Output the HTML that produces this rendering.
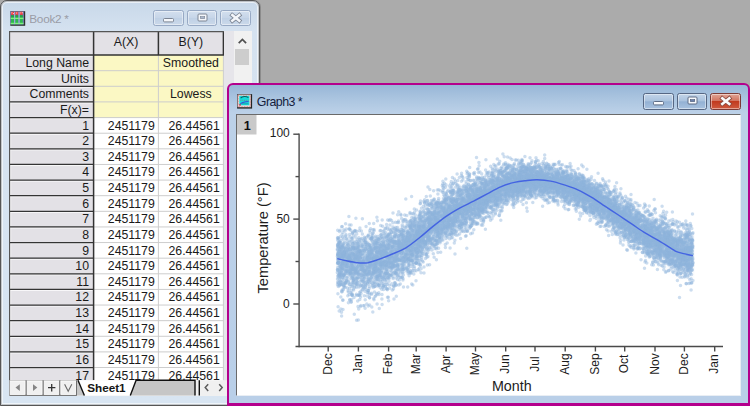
<!DOCTYPE html>
<html><head><meta charset="utf-8"><title>Book2 / Graph3</title>
<style>
html,body{margin:0;padding:0}
body{width:750px;height:406px;overflow:hidden;background:#ababab;font-family:"Liberation Sans",sans-serif;position:relative}
.win{position:absolute;box-sizing:border-box}
#book{left:0;top:0;width:260.4px;height:406px;border:1px solid #565656;border-radius:7px 7px 0 0;
 background:linear-gradient(#c8d8e9 0,#d5e2f0 30px,#d8e5f2 100%);box-shadow:inset 0 0 0 1px rgba(110,110,110,.35),inset 0 0 0 2px rgba(255,255,255,.6),1px 0 0 #8c8c8c}
#book .title{position:absolute;left:28.3px;top:10.9px;font-size:11.8px;letter-spacing:-.3px;color:#9a9ca6;white-space:nowrap}
.cap{position:absolute;box-sizing:border-box;height:16px;border:1px solid #97a9c4;border-radius:2.5px;
 background:linear-gradient(#d3dfee,#c6d5e8 50%,#bfd0e5 51%,#cbd9ea);box-shadow:inset 0 0 0 1px rgba(255,255,255,.45)}
#sheet{position:absolute;left:8px;top:30px;width:243px;height:365px;background:#f0f0f0;overflow:hidden;box-sizing:border-box}
#grid{position:absolute;left:-9px;top:-31px}
#grid div{position:absolute;box-sizing:border-box;font-size:12.3px;line-height:17.2px;white-space:nowrap;overflow:hidden;color:#1a1a1a}
.rh{left:9px;width:84.6px;background:#e3e1e6;text-align:right;padding-right:4.6px}
.ch{top:31px;height:24.2px;background:#e3e1e6;text-align:center;line-height:23.4px !important}
.yc{background:#fbf8c4;text-align:center}
.dc{background:#fff;text-align:right;padding-right:3.6px}
.a{left:93.6px;width:64.8px} .b{left:158.4px;width:65px}
#gwin{left:227px;top:83px;width:523.4px;height:323.4px;border:2px solid #b4008c;border-right-width:2.4px;border-bottom-width:3px;border-radius:6px 6px 0 0;
 background:linear-gradient(#98b6d7 0,#abc5e0 14px,#bcd1e8 28px,#b9cfe8 100%)}
#gwin .cap{height:16.4px;border-color:#566783;background:linear-gradient(#c2d4e8,#aac2de 46%,#93b1d4 52%,#a9c2df)}
#gwin .title{position:absolute;left:27.8px;top:10.2px;font-size:12.4px;letter-spacing:-.55px;color:#14213d;white-space:nowrap}
#page{position:absolute;left:235.5px;top:113.5px;width:505.5px;height:282.5px;background:#fff;border-left:1.5px solid #6a6a6a;border-top:1.5px solid #6a6a6a;border-right:1px solid #e9eef4;border-bottom:1px solid #e9eef4;box-sizing:border-box}
svg text{font-family:"Liberation Sans",sans-serif}
</style></head><body>

<div class="win" id="book">
 <svg style="position:absolute;left:8.9px;top:9.9px" width="16" height="16" viewBox="0 0 16 16">
  <rect x="0.3" y="0.2" width="14.9" height="14.6" fill="#2e3230"/>
  <rect x="0.3" y="0.5" width="13.5" height="13" fill="#7f86c6"/>
  <g fill="#f03434"><rect x="1" y="0.8" width="3" height="3"/><rect x="5.3" y="0.8" width="3" height="3"/><rect x="9.8" y="0.8" width="3" height="3"/></g>
  <g fill="#fff" fill-opacity=".75"><rect x="1.4" y="1.2" width="1" height="1.3"/><rect x="3" y="2" width=".9" height="1"/><rect x="6.4" y="1.2" width=".8" height="1.6"/><rect x="10.2" y="1.4" width="1" height="1"/><rect x="11.8" y="1" width=".9" height="1.4"/></g>
  <g fill="#2fb650"><rect x="1" y="4.3" width="3" height="9"/><rect x="5.3" y="4.3" width="3" height="9"/><rect x="9.8" y="4.3" width="3" height="9"/></g>
  <g fill="#26963f"><rect x="1" y="4.3" width="3" height="1.4"/><rect x="5.3" y="4.3" width="3" height="1.4"/><rect x="9.8" y="4.3" width="3" height="1.4"/></g>
  <g fill="#7cf47c"><rect x="0.6" y="6.8" width="12.9" height="1.2"/><rect x="0.6" y="11.8" width="12.9" height="1.3"/></g>
  <g fill="#aeb6e4" fill-opacity=".8"><rect x="4.2" y="0.8" width=".9" height="12.4"/><rect x="8.6" y="0.8" width=".9" height="12.4"/></g>
 </svg>
 <div class="title">Book2 *</div>
 <div class="cap" style="left:152px;top:9.4px;width:31px"><svg width="29" height="14" viewBox="0 0 29 14"><rect x="9.5" y="7.5" width="10" height="3.4" rx="1" fill="#f4f6fa" stroke="#7c8594" stroke-width="1"/></svg></div>
 <div class="cap" style="left:185.5px;top:9.4px;width:30.5px"><svg width="29" height="14" viewBox="0 0 29 14"><rect x="10" y="3" width="9" height="7" rx="1" fill="#f4f6fa" stroke="#7c8594" stroke-width="1"/><rect x="12.3" y="5.6" width="4.4" height="2" fill="#a9b6cc" stroke="#7c8594" stroke-width=".6"/></svg></div>
 <div class="cap" style="left:218.5px;top:9.4px;width:31.5px"><svg width="30" height="14" viewBox="0 0 30 14"><path d="M11.3 4.1L18.3 9.7M18.3 4.1L11.3 9.7" stroke="#7c8594" stroke-width="4.2" stroke-linecap="square"/><path d="M11.3 4.1L18.3 9.7M18.3 4.1L11.3 9.7" stroke="#f4f6fa" stroke-width="2.5" stroke-linecap="square"/></svg></div>

 <div id="sheet">
  <div id="grid">
   <div class="rh" style="top:31px;height:24.2px"></div>
   <div class="ch a">A(X)</div><div class="ch b">B(Y)</div>
<div class="rh" style="top:55.10px;height:15.60px">Long Name</div>
<div class="yc a" style="top:55.10px;height:15.60px"></div>
<div class="yc b" style="top:55.10px;height:15.60px">Smoothed</div>
<div class="rh" style="top:70.70px;height:15.60px">Units</div>
<div class="yc a" style="top:70.70px;height:15.60px"></div>
<div class="yc b" style="top:70.70px;height:15.60px"></div>
<div class="rh" style="top:86.30px;height:15.60px">Comments</div>
<div class="yc a" style="top:86.30px;height:15.60px"></div>
<div class="yc b" style="top:86.30px;height:15.60px">Lowess</div>
<div class="rh" style="top:101.90px;height:15.70px">F(x)=</div>
<div class="yc a" style="top:101.90px;height:15.70px"></div>
<div class="yc b" style="top:101.90px;height:15.70px"></div>
<div class="rh" style="top:117.60px;height:15.62px">1</div>
<div class="dc a" style="top:117.60px;height:15.62px">2451179</div>
<div class="dc b" style="top:117.60px;height:15.62px">26.44561</div>
<div class="rh" style="top:133.22px;height:15.62px">2</div>
<div class="dc a" style="top:133.22px;height:15.62px">2451179</div>
<div class="dc b" style="top:133.22px;height:15.62px">26.44561</div>
<div class="rh" style="top:148.84px;height:15.62px">3</div>
<div class="dc a" style="top:148.84px;height:15.62px">2451179</div>
<div class="dc b" style="top:148.84px;height:15.62px">26.44561</div>
<div class="rh" style="top:164.46px;height:15.62px">4</div>
<div class="dc a" style="top:164.46px;height:15.62px">2451179</div>
<div class="dc b" style="top:164.46px;height:15.62px">26.44561</div>
<div class="rh" style="top:180.08px;height:15.62px">5</div>
<div class="dc a" style="top:180.08px;height:15.62px">2451179</div>
<div class="dc b" style="top:180.08px;height:15.62px">26.44561</div>
<div class="rh" style="top:195.70px;height:15.62px">6</div>
<div class="dc a" style="top:195.70px;height:15.62px">2451179</div>
<div class="dc b" style="top:195.70px;height:15.62px">26.44561</div>
<div class="rh" style="top:211.32px;height:15.62px">7</div>
<div class="dc a" style="top:211.32px;height:15.62px">2451179</div>
<div class="dc b" style="top:211.32px;height:15.62px">26.44561</div>
<div class="rh" style="top:226.94px;height:15.62px">8</div>
<div class="dc a" style="top:226.94px;height:15.62px">2451179</div>
<div class="dc b" style="top:226.94px;height:15.62px">26.44561</div>
<div class="rh" style="top:242.56px;height:15.62px">9</div>
<div class="dc a" style="top:242.56px;height:15.62px">2451179</div>
<div class="dc b" style="top:242.56px;height:15.62px">26.44561</div>
<div class="rh" style="top:258.18px;height:15.62px">10</div>
<div class="dc a" style="top:258.18px;height:15.62px">2451179</div>
<div class="dc b" style="top:258.18px;height:15.62px">26.44561</div>
<div class="rh" style="top:273.80px;height:15.62px">11</div>
<div class="dc a" style="top:273.80px;height:15.62px">2451179</div>
<div class="dc b" style="top:273.80px;height:15.62px">26.44561</div>
<div class="rh" style="top:289.42px;height:15.62px">12</div>
<div class="dc a" style="top:289.42px;height:15.62px">2451179</div>
<div class="dc b" style="top:289.42px;height:15.62px">26.44561</div>
<div class="rh" style="top:305.04px;height:15.62px">13</div>
<div class="dc a" style="top:305.04px;height:15.62px">2451179</div>
<div class="dc b" style="top:305.04px;height:15.62px">26.44561</div>
<div class="rh" style="top:320.66px;height:15.62px">14</div>
<div class="dc a" style="top:320.66px;height:15.62px">2451179</div>
<div class="dc b" style="top:320.66px;height:15.62px">26.44561</div>
<div class="rh" style="top:336.28px;height:15.62px">15</div>
<div class="dc a" style="top:336.28px;height:15.62px">2451179</div>
<div class="dc b" style="top:336.28px;height:15.62px">26.44561</div>
<div class="rh" style="top:351.90px;height:15.62px">16</div>
<div class="dc a" style="top:351.90px;height:15.62px">2451179</div>
<div class="dc b" style="top:351.90px;height:15.62px">26.44561</div>
<div class="rh" style="top:367.52px;height:15.62px">17</div>
<div class="dc a" style="top:367.52px;height:15.62px">2451179</div>
<div class="dc b" style="top:367.52px;height:15.62px">26.44561</div>
  </div>
  <svg style="position:absolute;left:-9px;top:-31px" width="261" height="406" viewBox="0 0 261 406">
  <path d="M94.2 70.70H223.6M94.2 86.30H223.6M94.2 101.90H223.6M94.2 117.60H223.6M94.2 133.22H223.6M94.2 148.84H223.6M94.2 164.46H223.6M94.2 180.08H223.6M94.2 195.70H223.6M94.2 211.32H223.6M94.2 226.94H223.6M94.2 242.56H223.6M94.2 258.18H223.6M94.2 273.80H223.6M94.2 289.42H223.6M94.2 305.04H223.6M94.2 320.66H223.6M94.2 336.28H223.6M94.2 351.90H223.6M94.2 367.52H223.6M158.4 55V380.4M223.4 55V380.4" stroke="#cdcdcd" stroke-width="1" fill="none"/>
  <path d="M10.2 56.20H92.8M10.2 71.80H92.8M10.2 87.40H92.8M10.2 103.00H92.8M10.2 118.70H92.8M10.2 134.32H92.8M10.2 149.94H92.8M10.2 165.56H92.8M10.2 181.18H92.8M10.2 196.80H92.8M10.2 212.42H92.8M10.2 228.04H92.8M10.2 243.66H92.8M10.2 259.28H92.8M10.2 274.90H92.8M10.2 290.52H92.8M10.2 306.14H92.8M10.2 321.76H92.8M10.2 337.38H92.8M10.2 353.00H92.8M10.2 368.62H92.8M10.7 56V380.4" stroke="#fff" stroke-opacity=".75" stroke-width="1" fill="none"/>
  <path d="M9 70.70H93.6M9 86.30H93.6M9 101.90H93.6M9 117.60H93.6M9 133.22H93.6M9 148.84H93.6M9 164.46H93.6M9 180.08H93.6M9 195.70H93.6M9 211.32H93.6M9 226.94H93.6M9 242.56H93.6M9 258.18H93.6M9 273.80H93.6M9 289.42H93.6M9 305.04H93.6M9 320.66H93.6M9 336.28H93.6M9 351.90H93.6M9 367.52H93.6" stroke="#343434" stroke-width="1.25" fill="none"/>
  <path d="M9 55.1H223.9M93.6 31V380.4M158.4 31V55.6M223.4 31V55.6" stroke="#333" stroke-width="1.5" fill="none"/>
  <path d="M9.4 31V380.4M8.6 31.6H252" stroke="#555" stroke-width="1.5" fill="none"/>
 </svg>
  <!-- right strip + scrollbar -->
  <div style="position:absolute;left:215px;top:0;width:11px;height:350px;background:#e6e5ea"></div>
  <div style="position:absolute;left:225.3px;top:0;width:18px;height:365px;background:#f1f1f1"></div>
  <div style="position:absolute;left:226px;top:18px;width:14.3px;height:16px;background:#cdcdcd"></div>
  <svg style="position:absolute;left:226.3px;top:4.6px" width="15" height="10" viewBox="0 0 15 10"><path d="M3.7 7.2L7.4 3.4L11.1 7.2" fill="none" stroke="#505050" stroke-width="1.7"/></svg>
  <!-- bottom tab bar -->
 </div>
 <svg style="position:absolute;left:-1px;top:-1px" width="261" height="406" viewBox="0 0 261 406">
  <rect x="9.5" y="380.3" width="218" height="15.3" fill="#f0f0f0"/>
  <path d="M76.5 380.3H78L84.4 395.6H76.5Z" fill="#c6c6c6"/>
  <path d="M78 380.3L84.4 395.6H130.3L136.1 380.3Z" fill="#fff"/>
  <path d="M136.1 380.3H195V395.6H130.3Z" fill="#c6c6c6"/>
  <path d="M78 380.3L84.4 395.6M130.3 395.6L136.1 380.3H195V395.6M199.3 380.3V395.6" stroke="#111" stroke-width="1.4" fill="none"/>
  <g>
   <rect x="9.3" y="380.3" width="67.6" height="15.5" fill="#5c5c5c"/>
   <g fill="#f0f0f0" stroke="#fff" stroke-width=".9"><rect x="10.2" y="380.9" width="14.9" height="13.5"/><rect x="27.1" y="380.9" width="15" height="13.5"/><rect x="44.1" y="380.9" width="14.7" height="13.5"/><rect x="60.8" y="380.9" width="14.8" height="13.5"/></g>
   <path d="M15.5 387.6L19.8 384.2V391Z" fill="#858585"/>
   <path d="M37.3 387.6L33 384.2V391Z" fill="#858585"/>
   <path d="M48 387.7H55.4M51.7 384V391.4" stroke="#333" stroke-width="1.3"/>
   <path d="M64.6 384.3L68.2 391.2L71.8 384.3" stroke="#6a6a6a" stroke-width="1.1" fill="none"/>
  </g>
  <text x="87.2" y="391.6" font-size="11.7" font-weight="bold" fill="#161616" textLength="38.4" lengthAdjust="spacingAndGlyphs">Sheet1</text>
  <path d="M208.2 384.2L205.2 387.6L208.2 391M219.2 384.2L222.2 387.6L219.2 391" stroke="#5c5c5c" stroke-width="1.5" fill="none"/>
 </svg>
</div>

<div class="win" id="gwin">
 <svg style="position:absolute;left:8px;top:9.2px" width="16" height="16" viewBox="0 0 16 16">
  <rect x="0.1" y="0.1" width="15" height="14.5" fill="#242424"/>
  <rect x="0.6" y="0.6" width="13.2" height="12.6" fill="#e9e2e2"/>
  <rect x="1.2" y="1.2" width="12" height="11.4" fill="none" stroke="#e85a5a" stroke-width=".7" stroke-dasharray=".8 .8"/>
  <rect x="2.3" y="1.8" width="10.1" height="9.5" fill="#14dcdc"/>
  <path d="M3.6 4.2C5.5 2.2 9 2 11.4 3.6" stroke="#155e60" stroke-width="1.1" fill="none"/>
  <path d="M3.4 6.3H11.6" stroke="#6f8f90" stroke-width="1" stroke-dasharray="1 .8"/>
  <path d="M3.4 9.9C5.5 8 8.5 7.6 11.6 7.5" stroke="#3a4ad4" stroke-width="1.2" fill="none"/>
  <path d="M5 9.8H11.5" stroke="#1aa0a8" stroke-width="1" />
  <rect x="2.2" y="10.2" width="1.6" height="1.4" fill="#e0203a"/>
 </svg>
 <div class="title">Graph3 *</div>
 <div class="cap" style="left:414px;top:8.2px;width:31px"><svg width="29" height="14" viewBox="0 0 29 14"><rect x="9.5" y="7.5" width="10" height="3.4" rx="1" fill="#f8fafd" stroke="#5f6d86" stroke-width="1"/></svg></div>
 <div class="cap" style="left:447.5px;top:8.2px;width:30.5px"><svg width="29" height="14" viewBox="0 0 29 14"><rect x="10" y="3" width="9" height="7" rx="1" fill="#f8fafd" stroke="#5f6d86" stroke-width="1"/><rect x="12.3" y="5.6" width="4.4" height="2" fill="#6d83ad" stroke="#4a5875" stroke-width=".6"/></svg></div>
 <div class="cap" style="left:480.5px;top:8.2px;width:31.5px;border-color:#7c3a35;background:linear-gradient(#e0a496,#d27561 45%,#c13a1f 50%,#cf5a3f)"><svg width="30" height="14" viewBox="0 0 30 14"><path d="M11.3 4.3L18.3 9.9M18.3 4.3L11.3 9.9" stroke="#8a4a40" stroke-width="4.2" stroke-linecap="square"/><path d="M11.3 4.3L18.3 9.9M18.3 4.3L11.3 9.9" stroke="#fbfbfb" stroke-width="2.6" stroke-linecap="square"/></svg></div>
</div>

<div id="page"></div>
<svg style="position:absolute;left:0;top:0" width="750" height="406" viewBox="0 0 750 406">
 <rect x="237" y="115" width="19.5" height="19.5" fill="#c9c9c9"/>
 <text x="247.2" y="130.4" font-size="12.6" font-weight="bold" text-anchor="middle" fill="#111">1</text>
 <defs><filter id="bl" x="-10%" y="-30%" width="120%" height="160%"><feGaussianBlur stdDeviation="4 5"/></filter><clipPath id="cp"><rect x="336" y="130" width="358.5" height="215"/></clipPath></defs>
 <g clip-path="url(#cp)"><path d="M337.3 236.3 L343.2 237.7 L349.2 238.9 L355.1 239.9 L361.0 240.1 L366.9 240.1 L372.9 238.8 L378.8 237.2 L384.7 235.0 L390.6 232.8 L396.6 230.4 L402.5 228.0 L408.4 225.0 L414.3 221.1 L420.3 217.1 L426.2 212.7 L432.1 208.2 L438.1 204.0 L444.0 199.9 L449.9 196.2 L455.8 193.0 L461.8 189.9 L467.7 187.3 L473.6 184.7 L479.5 181.8 L485.5 179.0 L491.4 176.4 L497.3 173.8 L503.2 171.8 L509.2 170.4 L515.1 169.1 L521.0 168.7 L527.0 168.4 L532.9 168.5 L538.8 168.5 L544.7 169.1 L550.7 169.6 L556.6 171.3 L562.5 173.0 L568.4 175.0 L574.4 176.9 L580.3 179.2 L586.2 182.1 L592.1 185.2 L598.1 188.8 L604.0 192.4 L609.9 195.9 L615.9 199.4 L621.8 203.0 L627.7 206.6 L633.6 210.2 L639.6 213.7 L645.5 217.5 L651.4 220.5 L657.3 223.6 L663.3 227.0 L669.2 230.6 L675.1 233.8 L681.0 235.5 L687.0 236.6 L692.9 237.6 L692.9 274.0 L687.0 272.1 L681.0 270.2 L675.1 267.5 L669.2 263.9 L663.3 259.9 L657.3 256.0 L651.4 252.5 L645.5 248.9 L639.6 244.7 L633.6 240.4 L627.7 236.0 L621.8 231.6 L615.9 227.2 L609.9 222.9 L604.0 218.6 L598.1 214.3 L592.1 210.1 L586.2 206.6 L580.3 203.1 L574.4 200.2 L568.4 197.9 L562.5 195.9 L556.6 194.2 L550.7 192.6 L544.7 192.0 L538.8 191.4 L532.9 191.8 L527.0 192.7 L521.0 194.0 L515.1 195.5 L509.2 197.8 L503.2 200.2 L497.3 203.3 L491.4 206.9 L485.5 210.5 L479.5 214.1 L473.6 217.7 L467.7 220.9 L461.8 224.2 L455.8 228.0 L449.9 231.9 L444.0 236.2 L438.1 241.0 L432.1 246.1 L426.2 251.5 L420.3 257.0 L414.3 262.0 L408.4 266.8 L402.5 270.7 L396.6 273.8 L390.6 276.5 L384.7 279.1 L378.8 281.6 L372.9 283.6 L366.9 285.3 L361.0 285.3 L355.1 284.8 L349.2 283.7 L343.2 282.4 L337.3 280.9Z" fill="#a3c2e2" fill-opacity=".35" filter="url(#bl)"/></g>
 <g fill="none" stroke="#8fb4db" stroke-opacity=".45" stroke-width="3.5" stroke-linecap="round"><path d="M452.5 223.2h0M363.1 284.5h0M527.9 178.4h0M517.7 184.4h0M350.6 256.4h0M369.6 265.0h0M488.3 196.0h0M416.7 233.2h0M560.4 194.4h0M478.4 193.6h0M684.5 277.0h0M440.3 228.2h0M388.6 266.8h0M627.5 227.5h0M401.6 231.7h0M469.7 194.4h0M532.1 183.0h0M410.5 246.5h0M579.3 183.7h0M545.5 183.8h0M498.5 182.1h0M585.9 209.4h0M424.1 218.1h0M648.5 228.3h0M596.7 194.5h0M379.3 308.4h0M486.0 194.8h0M511.2 177.7h0M351.2 249.3h0M541.1 167.6h0M648.6 227.7h0M548.7 193.0h0M543.5 164.8h0M673.2 255.7h0M505.9 183.3h0M586.8 191.9h0M567.4 201.8h0M438.5 221.0h0M474.5 199.5h0M501.5 184.6h0M397.1 256.4h0M610.5 212.1h0M383.3 257.9h0M647.2 245.6h0M366.0 244.7h0M651.4 241.1h0M628.6 227.7h0M485.0 188.0h0M464.9 228.8h0M391.0 230.1h0M400.0 251.9h0M509.8 191.3h0M546.8 180.7h0M486.3 195.4h0M468.6 175.4h0M582.8 183.6h0M520.6 171.0h0M356.5 247.6h0M657.2 244.1h0M621.0 195.7h0M476.8 194.9h0M562.9 186.9h0M359.4 274.2h0M395.0 257.7h0M458.2 209.3h0M391.1 254.6h0M373.4 258.8h0M648.2 236.7h0M555.7 186.4h0M460.8 215.2h0M466.8 221.8h0M690.4 272.5h0M503.0 181.7h0M373.6 261.7h0M459.1 206.2h0M394.7 285.9h0M345.5 282.2h0M389.4 249.7h0M530.5 190.9h0M685.3 256.5h0M644.3 229.4h0M467.7 194.9h0M396.7 255.0h0M614.3 199.8h0M454.5 215.1h0M687.5 277.1h0M640.5 237.2h0M600.4 186.6h0M417.9 225.4h0M347.6 259.5h0M347.2 258.9h0M583.6 199.7h0M677.4 221.7h0M688.6 264.4h0M676.9 245.2h0M418.0 247.0h0M407.2 253.4h0M657.4 255.3h0M636.2 210.7h0M621.7 219.2h0M367.4 245.2h0M615.5 194.0h0M604.0 199.5h0M617.9 215.6h0M455.5 221.2h0M478.1 168.7h0M480.0 216.0h0M397.8 243.9h0M382.5 280.7h0M624.1 237.7h0M389.3 278.3h0M571.0 166.2h0M461.9 200.5h0M342.4 257.5h0M682.5 243.3h0M669.3 234.3h0M491.6 206.4h0M412.3 223.5h0M426.9 228.7h0M545.8 186.7h0M429.5 222.6h0M660.9 244.9h0M463.1 190.0h0M658.9 244.6h0M486.9 206.1h0M526.4 175.3h0M523.5 190.9h0M402.4 251.6h0M338.7 262.4h0M505.7 179.2h0M595.2 191.9h0M521.6 178.4h0M534.8 180.8h0M536.5 175.9h0M425.7 228.4h0M517.8 198.2h0M537.1 181.0h0M494.9 165.9h0M555.1 172.2h0M583.6 192.6h0M498.2 176.2h0M672.1 245.9h0M585.9 209.6h0M429.6 205.0h0M536.3 195.1h0M386.1 246.7h0M380.5 253.3h0M422.9 236.9h0M363.3 250.0h0M656.3 220.2h0M392.2 249.5h0M388.1 234.6h0M651.2 244.3h0M676.0 249.2h0M478.9 162.6h0M633.3 227.8h0M394.7 236.9h0M457.9 215.5h0M406.9 237.4h0M344.2 287.2h0M534.3 178.5h0M455.2 211.7h0M559.2 180.4h0M687.6 254.1h0M617.6 219.3h0M431.7 226.3h0M351.4 264.4h0M383.4 246.1h0M487.5 212.1h0M429.3 215.4h0M390.4 274.9h0M586.4 188.7h0M369.1 288.6h0M488.5 199.4h0M363.1 287.0h0M622.4 212.0h0M367.1 266.9h0M644.1 228.8h0M498.7 180.7h0M666.8 258.1h0M432.6 238.2h0M422.1 248.7h0M376.2 263.3h0M409.0 249.9h0M448.2 207.2h0M440.4 241.3h0M515.1 186.3h0M343.8 275.5h0M426.4 255.1h0M533.3 181.4h0M404.7 214.9h0M375.1 267.2h0M628.5 210.2h0M634.1 231.0h0M477.1 181.1h0M686.7 253.4h0M459.2 218.2h0M563.5 173.1h0M481.2 194.8h0M383.5 262.5h0M362.4 262.0h0M395.4 241.4h0M367.3 282.9h0M575.7 174.3h0M437.6 223.5h0M500.7 195.8h0M393.3 242.8h0M679.3 255.5h0M683.2 243.6h0M680.7 249.8h0M447.4 215.2h0M473.0 201.9h0M506.1 178.2h0M516.8 181.9h0M339.1 258.5h0M479.4 203.3h0M352.1 277.4h0M420.1 239.0h0M545.5 166.7h0M571.1 184.8h0M591.9 204.2h0M453.3 202.8h0M687.5 266.3h0M566.0 196.6h0M352.9 281.9h0M560.4 168.4h0M598.3 203.7h0M523.5 176.3h0M516.7 191.0h0M631.2 206.4h0M545.0 190.6h0M583.8 184.6h0M419.1 246.0h0M465.6 206.5h0M374.6 272.6h0M560.5 174.5h0M560.0 179.6h0M338.5 243.6h0M621.0 216.6h0M527.6 169.9h0M571.7 200.4h0M427.0 240.8h0M363.8 260.3h0M410.3 270.7h0M600.4 214.1h0M473.3 199.2h0M507.6 177.6h0M556.7 169.5h0M565.9 189.7h0M427.6 234.7h0M601.6 199.7h0M341.7 282.3h0M358.9 260.1h0M583.4 206.1h0M577.6 187.0h0M502.5 198.7h0M503.1 202.7h0M408.2 269.8h0M685.1 256.0h0M500.5 186.1h0M628.9 233.8h0M432.8 223.4h0M411.9 253.7h0M544.1 178.5h0M387.7 220.0h0M384.5 251.7h0M629.0 199.3h0M587.4 194.0h0M419.6 251.6h0M346.1 250.6h0M338.6 243.0h0M444.7 218.2h0M387.3 248.9h0M636.1 235.1h0M337.9 258.9h0M380.0 230.7h0M666.7 239.2h0M440.4 190.8h0M469.7 167.6h0M546.8 200.1h0M465.6 196.0h0M354.5 268.7h0M373.5 268.6h0M670.0 238.4h0M426.0 230.6h0M404.8 268.4h0M470.1 227.5h0M626.0 214.1h0M561.6 201.5h0M532.6 169.5h0M593.2 212.7h0M497.6 193.9h0M604.9 201.2h0M354.7 252.7h0M666.9 254.8h0M459.5 218.4h0M443.2 216.0h0M429.8 189.5h0M570.6 183.8h0M477.5 213.8h0M396.8 258.3h0M659.5 247.7h0M514.1 186.5h0M691.6 283.0h0M497.3 193.2h0M369.6 271.4h0M458.9 216.4h0M429.2 235.2h0M539.9 190.8h0M484.1 183.0h0M484.5 184.3h0M457.6 207.5h0M359.4 256.0h0M382.1 304.6h0M516.3 168.9h0M414.1 220.7h0M433.7 226.0h0M495.8 200.6h0M676.5 265.1h0M345.1 236.3h0M348.8 253.4h0M505.6 164.2h0M546.1 189.1h0M666.9 245.8h0M630.9 241.6h0M425.7 202.0h0M376.1 272.7h0M579.8 199.8h0M672.1 245.7h0M609.3 194.8h0M499.9 184.4h0M615.5 212.2h0M420.0 256.3h0M445.3 207.3h0M382.8 257.6h0M585.7 206.9h0M377.2 279.9h0M544.6 184.9h0M475.3 203.0h0M341.0 284.2h0M444.5 183.3h0M566.5 191.0h0M651.6 227.8h0M425.2 234.6h0M678.9 249.0h0M345.0 248.4h0M514.5 177.7h0M428.8 216.5h0M574.6 194.2h0M349.4 256.6h0M457.5 191.9h0M407.7 258.4h0M620.7 215.7h0M410.3 227.4h0M682.2 243.5h0M419.4 263.8h0M416.0 241.1h0M675.8 239.7h0M513.6 185.3h0M485.6 202.5h0M573.9 193.0h0M477.2 197.1h0M413.0 251.2h0M355.7 261.1h0M358.7 237.8h0M651.5 251.8h0M597.9 223.3h0M454.4 210.9h0M403.3 275.1h0M348.6 251.7h0M573.6 182.2h0M455.3 219.3h0M397.5 265.9h0M462.3 207.0h0M677.1 273.1h0M411.1 273.2h0M464.1 215.9h0M491.1 173.2h0M354.8 248.2h0M664.3 245.9h0M405.9 227.4h0M348.1 290.8h0M483.4 203.6h0M351.8 238.4h0M349.7 299.8h0M428.7 242.1h0M603.0 211.9h0M434.1 217.7h0M677.9 244.2h0M592.1 192.8h0M449.8 213.9h0M606.0 207.7h0M663.2 222.9h0M345.9 234.5h0M420.5 201.0h0M676.5 255.9h0M474.7 200.5h0M512.8 193.5h0M667.3 254.5h0M599.9 218.4h0M629.9 224.9h0M453.9 193.5h0M450.9 198.1h0M365.4 287.3h0M407.5 246.9h0M360.3 251.5h0M349.3 249.0h0M685.9 250.1h0M651.5 245.5h0M367.2 261.8h0M371.6 238.1h0M496.2 189.3h0M420.6 219.3h0M577.0 195.6h0M603.3 213.2h0M380.4 240.9h0M636.3 223.1h0M469.9 218.3h0M599.8 204.9h0M424.5 243.9h0M391.8 271.6h0M453.3 200.2h0M478.1 213.1h0M419.6 236.8h0M624.8 200.5h0M373.7 223.5h0M506.1 193.5h0M662.5 220.7h0M351.7 259.7h0M404.7 256.6h0M683.3 226.0h0M469.7 188.9h0M645.3 224.4h0M613.9 214.5h0M673.6 262.1h0M557.8 190.1h0M414.7 235.9h0M409.8 251.5h0M427.9 213.6h0M409.6 232.7h0M341.3 249.3h0M403.1 271.9h0M448.3 221.6h0M532.2 195.0h0M359.8 277.6h0M532.9 185.3h0M564.6 189.3h0M584.6 196.4h0M483.0 194.0h0M676.3 261.0h0M448.4 203.1h0M485.4 190.4h0M644.6 243.6h0M407.4 246.4h0M596.2 200.6h0M657.9 241.3h0M488.0 198.5h0M651.2 225.2h0M501.2 187.6h0M533.4 181.3h0M565.1 188.3h0M558.6 181.3h0M469.2 196.4h0M438.0 222.3h0M522.6 185.1h0M511.7 181.1h0M623.5 225.4h0M382.3 256.0h0M672.7 262.5h0M356.3 259.9h0M666.6 224.1h0M557.9 195.0h0M630.5 233.5h0M416.3 263.2h0M481.1 210.0h0M402.4 227.0h0M414.9 227.0h0M473.7 209.8h0M381.1 259.0h0M656.4 257.8h0M351.9 238.8h0M350.9 252.1h0M635.4 237.7h0M532.9 188.0h0M560.3 180.7h0M544.5 188.8h0M488.7 186.4h0M493.2 180.7h0M345.6 248.2h0M421.0 225.1h0M608.8 210.7h0M401.2 234.2h0M505.6 189.5h0M490.4 195.9h0M369.9 245.4h0M351.8 269.6h0M563.6 196.8h0M613.8 220.2h0M519.2 192.3h0M471.7 207.0h0"/><path d="M675.4 265.7h0M691.5 274.6h0M597.6 203.7h0M686.4 245.9h0M512.2 204.7h0M396.0 243.6h0M617.6 218.0h0M462.1 204.9h0M606.2 218.3h0M435.1 248.5h0M627.3 229.0h0M664.4 254.8h0M411.4 242.4h0M450.8 228.6h0M350.4 266.1h0M670.3 254.1h0M579.0 194.7h0M616.4 209.8h0M378.2 238.9h0M465.2 201.9h0M647.7 219.6h0M651.1 230.9h0M374.5 286.4h0M477.5 198.3h0M621.0 213.7h0M542.6 206.2h0M465.4 206.5h0M400.2 234.8h0M601.7 220.9h0M427.5 238.8h0M564.6 196.3h0M573.3 187.0h0M448.5 218.3h0M390.4 254.8h0M556.4 173.4h0M655.8 244.6h0M384.2 260.9h0M345.2 287.2h0M338.2 254.6h0M464.3 210.5h0M417.0 222.8h0M409.9 235.1h0M559.2 179.0h0M670.4 248.9h0M423.9 237.9h0M564.2 188.0h0M647.1 236.5h0M431.3 213.5h0M341.4 248.1h0M461.9 193.9h0M566.9 167.1h0M598.1 209.3h0M425.7 236.1h0M526.3 179.1h0M481.7 197.1h0M614.3 215.8h0M341.7 226.7h0M387.9 244.8h0M408.2 232.6h0M565.4 179.0h0M626.5 224.8h0M444.1 227.8h0M354.5 287.1h0M591.7 187.0h0M339.6 276.3h0M502.7 171.9h0M601.1 197.0h0M374.7 264.5h0M419.9 250.6h0M603.9 207.5h0M584.5 201.4h0M431.9 208.4h0M534.2 166.2h0M523.4 187.4h0M431.6 204.0h0M414.5 212.2h0M650.2 244.7h0M421.3 237.3h0M601.8 219.0h0M453.5 204.3h0M650.3 231.6h0M660.0 248.9h0M561.6 179.7h0M685.4 234.8h0M504.3 194.4h0M642.2 215.8h0M492.8 188.6h0M446.7 198.1h0M412.7 238.6h0M661.2 238.6h0M388.7 263.8h0M667.6 247.2h0M459.9 209.9h0M352.1 265.3h0M583.6 183.7h0M599.3 191.5h0M360.7 250.7h0M628.0 215.9h0M628.7 225.1h0M645.9 230.7h0M662.5 248.1h0M410.5 242.1h0M377.1 294.3h0M626.1 224.7h0M562.8 190.0h0M439.5 203.4h0M372.8 286.3h0M410.2 260.4h0M450.8 211.0h0M428.6 231.4h0M437.8 219.8h0M451.4 200.4h0M680.1 226.0h0M557.2 182.5h0M348.3 247.7h0M612.2 216.5h0M460.6 203.1h0M414.3 224.3h0M643.9 250.1h0M397.9 269.0h0M337.8 268.0h0M685.0 273.8h0M338.9 242.1h0M620.6 217.2h0M402.9 235.8h0M633.1 225.3h0M430.0 239.6h0M413.7 238.0h0M586.0 189.9h0M563.7 184.8h0M366.1 269.4h0M617.1 198.6h0M560.6 178.6h0M477.6 208.7h0M653.9 258.6h0M346.3 280.8h0M410.6 241.7h0M515.5 203.3h0M472.2 208.6h0M501.2 181.5h0M526.3 181.0h0M567.1 171.7h0M461.2 203.9h0M637.1 233.5h0M572.7 187.7h0M493.3 184.0h0M612.3 206.4h0M501.6 183.9h0M652.1 237.4h0M444.5 226.0h0M587.3 197.9h0M392.8 246.7h0M425.3 224.7h0M394.5 272.0h0M454.0 224.4h0M596.4 224.2h0M373.5 269.2h0M473.9 199.7h0M687.2 260.0h0M492.0 174.1h0M407.1 242.5h0M410.7 239.0h0M475.4 212.2h0M618.6 217.3h0M583.9 180.4h0M502.0 186.3h0M387.7 243.9h0M600.8 197.5h0M660.2 226.5h0M603.7 210.7h0M487.1 196.4h0M650.3 254.1h0M612.6 205.0h0M579.0 174.1h0M565.4 178.3h0M560.7 186.0h0M372.1 238.7h0M590.9 204.7h0M561.2 184.0h0M499.2 199.1h0M558.3 172.5h0M668.1 255.8h0M402.4 235.2h0M475.5 182.9h0M511.5 186.1h0M530.5 179.9h0M394.5 261.3h0M521.9 159.6h0M373.2 244.5h0M592.4 192.6h0M519.4 170.2h0M522.8 167.8h0M483.2 203.8h0M580.7 189.4h0M476.9 199.9h0M687.4 247.4h0M463.7 215.4h0M479.4 201.4h0M342.0 246.5h0M585.6 198.6h0M462.5 205.8h0M601.0 210.3h0M671.5 239.5h0M622.3 216.4h0M476.7 201.0h0M613.5 216.9h0M625.2 211.5h0M537.2 172.7h0M417.7 253.0h0M564.5 183.2h0M628.4 226.8h0M442.0 205.0h0M532.3 191.8h0M463.4 222.9h0M639.8 228.2h0M427.5 244.7h0M488.8 193.3h0M594.0 199.5h0M437.3 223.5h0M507.8 193.3h0M489.7 181.9h0M466.2 190.8h0M667.6 248.6h0M631.7 221.0h0M659.4 242.3h0M632.9 218.8h0M562.5 185.7h0M675.7 251.1h0M570.6 187.2h0M388.1 264.0h0M420.4 239.3h0M391.6 241.0h0M658.8 242.4h0M654.2 230.8h0M553.6 184.4h0M655.2 220.6h0M617.5 218.1h0M583.7 187.9h0M526.1 180.1h0M651.2 223.3h0M534.7 179.4h0M386.8 269.2h0M512.6 193.4h0M388.7 262.6h0M512.0 170.9h0M644.1 232.5h0M339.6 270.4h0M537.3 171.8h0M573.9 192.9h0M486.2 185.0h0M678.9 267.3h0M563.5 190.2h0M347.4 243.8h0M668.5 234.2h0M454.8 226.1h0M509.7 182.5h0M656.5 257.2h0M559.6 186.5h0M457.7 217.1h0M506.0 177.6h0M524.2 181.6h0M492.1 183.8h0M487.5 173.7h0M441.4 211.1h0M631.6 213.2h0M433.9 234.7h0M517.4 195.9h0M618.9 213.0h0M455.0 206.4h0M545.8 187.2h0M563.0 185.1h0M594.3 196.5h0M652.2 233.2h0M444.1 216.7h0M339.5 274.5h0M553.7 199.8h0M571.3 192.0h0M554.8 164.2h0M556.6 173.6h0M549.3 171.6h0M579.5 193.7h0M500.1 202.8h0M608.5 213.5h0M350.4 268.5h0M612.7 224.0h0M468.5 194.4h0M629.8 225.9h0M429.0 211.6h0M444.7 206.7h0M490.4 196.9h0M565.5 188.0h0M539.1 178.8h0M351.3 286.4h0M541.9 190.8h0M664.0 241.8h0M475.0 201.1h0M547.8 202.9h0M506.4 174.0h0M484.0 209.4h0M412.8 256.4h0M391.3 256.1h0M580.4 191.3h0M380.6 266.3h0M646.5 232.7h0M383.2 286.1h0M423.5 237.0h0M598.2 202.8h0M612.5 214.1h0M591.0 206.1h0M367.3 243.6h0M560.8 181.6h0M668.8 232.9h0M427.6 252.8h0M341.4 254.4h0M342.5 244.2h0M365.6 240.3h0M447.9 214.2h0M643.5 224.9h0M510.2 192.8h0M541.8 183.2h0M493.3 187.9h0M620.8 211.4h0M466.5 193.8h0M485.9 181.8h0M474.5 207.4h0M616.3 189.4h0M538.9 179.2h0M683.6 257.7h0M587.4 198.8h0M552.7 174.9h0M684.9 262.0h0M447.0 199.4h0M489.7 201.1h0M580.8 185.9h0M551.3 193.5h0M438.0 206.6h0M337.9 257.5h0M545.9 189.5h0M627.5 223.6h0M633.6 223.1h0M626.0 229.6h0M434.7 211.1h0M640.0 235.6h0M662.2 224.6h0M460.6 221.3h0M620.9 223.5h0M408.6 245.9h0M420.5 203.3h0M553.1 177.6h0M410.8 229.6h0M427.9 230.9h0M500.8 168.2h0M368.5 273.5h0M420.1 213.8h0M543.4 194.5h0M522.9 169.5h0M506.8 179.3h0M405.7 242.9h0M401.6 245.6h0M538.0 172.2h0M480.4 190.9h0M353.2 261.1h0M691.9 250.9h0M562.3 187.2h0M617.3 222.0h0M460.0 222.0h0M522.0 183.6h0M689.5 255.4h0M645.3 217.8h0M430.3 230.2h0M614.4 190.2h0M610.1 220.4h0M628.5 230.0h0M350.8 259.0h0M408.8 248.6h0M355.4 269.4h0M535.5 186.4h0M674.1 239.3h0M660.9 256.2h0M478.6 204.9h0M379.9 272.4h0M538.0 178.2h0M565.1 197.4h0M477.1 194.5h0M496.7 204.4h0M690.0 283.0h0M416.1 251.8h0M462.5 209.0h0M658.3 258.5h0M354.0 246.2h0M616.9 210.3h0M687.7 235.2h0M357.1 281.7h0M671.3 263.8h0M578.0 186.4h0M606.8 219.9h0M374.8 255.5h0M381.4 270.8h0M508.5 188.0h0M388.2 267.1h0M578.3 204.0h0M406.7 249.3h0M350.1 273.2h0M669.4 243.3h0M645.5 238.0h0M496.3 185.3h0M371.8 293.2h0M560.7 176.9h0M498.1 177.5h0M507.1 201.1h0M560.7 187.7h0M357.5 272.9h0M591.1 192.1h0M646.9 231.8h0M432.0 220.0h0M433.7 230.0h0M635.8 223.3h0M511.9 188.4h0M450.4 218.9h0M685.3 250.0h0M357.5 284.4h0M412.4 229.8h0M507.1 183.0h0M409.0 257.8h0M466.8 248.2h0M666.3 242.8h0M372.0 253.7h0M357.7 300.9h0M595.6 193.0h0M343.0 309.4h0M624.3 215.8h0M338.0 267.3h0M633.2 218.0h0M492.1 190.1h0M661.6 245.4h0M386.4 279.2h0M401.4 253.4h0M407.3 224.1h0M365.5 284.3h0M513.5 189.8h0M434.7 230.1h0M589.0 207.9h0M625.9 213.8h0M360.7 257.7h0M597.9 188.8h0M357.0 278.8h0M625.6 209.3h0M644.7 251.7h0M512.6 204.9h0M506.8 187.1h0M647.4 233.5h0M633.0 232.0h0M467.8 210.2h0M548.8 187.9h0M338.9 243.3h0M520.7 180.1h0M380.2 252.8h0M645.1 211.7h0M451.4 209.9h0M604.5 196.6h0M359.1 294.7h0M513.3 165.3h0M519.8 170.1h0M344.7 256.9h0M681.3 254.2h0M373.8 272.3h0M426.4 233.4h0M371.6 258.2h0M585.9 194.7h0M550.4 182.6h0M542.3 167.2h0M373.9 257.6h0M646.5 233.0h0M381.1 254.1h0M512.8 174.9h0M380.7 258.6h0M481.5 207.4h0M643.5 243.5h0M389.7 233.3h0M395.7 241.8h0M631.0 233.7h0M486.8 189.7h0M635.9 215.6h0M672.0 246.9h0M613.6 207.8h0M456.5 218.0h0M492.2 211.7h0M661.9 239.9h0M627.1 223.0h0M521.3 178.8h0M677.9 260.2h0M487.4 190.3h0M562.3 177.5h0M361.9 279.8h0M491.3 189.4h0M386.9 256.1h0M682.1 257.9h0M562.5 164.7h0M625.1 236.2h0M349.5 241.0h0"/><path d="M565.4 184.1h0M434.5 245.2h0M530.1 191.3h0M426.4 222.7h0M522.3 160.4h0M439.5 234.3h0M445.9 212.3h0M548.6 177.5h0M677.3 241.1h0M503.2 185.3h0M527.1 183.3h0M384.0 264.7h0M441.7 210.0h0M423.9 240.7h0M368.5 235.1h0M554.2 177.4h0M540.1 176.7h0M589.9 191.4h0M501.2 172.8h0M504.1 181.5h0M447.7 215.8h0M519.5 188.3h0M473.6 199.6h0M462.7 205.6h0M643.8 233.1h0M512.0 195.9h0M438.6 233.0h0M611.9 210.0h0M393.7 286.1h0M493.8 199.7h0M359.4 250.5h0M598.8 208.7h0M376.1 267.4h0M600.0 226.6h0M392.2 246.9h0M577.5 196.6h0M556.5 192.0h0M521.4 167.3h0M600.0 202.2h0M506.3 167.8h0M616.4 207.8h0M382.6 226.3h0M647.0 253.6h0M545.6 181.0h0M514.3 195.0h0M485.9 191.1h0M616.0 223.2h0M472.3 189.9h0M498.1 171.6h0M441.5 225.4h0M476.2 188.7h0M451.8 208.4h0M617.2 221.3h0M495.2 179.3h0M402.8 246.5h0M541.9 184.7h0M544.1 196.7h0M452.5 227.5h0M637.2 242.8h0M410.0 213.7h0M488.9 194.3h0M354.2 261.0h0M538.2 160.8h0M612.4 211.4h0M528.8 191.2h0M521.2 181.2h0M581.0 185.1h0M548.8 186.0h0M462.2 224.6h0M524.1 176.4h0M372.5 250.7h0M536.9 185.9h0M541.4 196.2h0M510.4 166.1h0M493.8 164.6h0M459.4 177.6h0M525.8 182.9h0M450.4 206.1h0M685.2 260.7h0M376.6 244.3h0M655.4 230.3h0M689.4 231.0h0M653.1 231.2h0M440.4 224.4h0M519.2 175.5h0M402.2 249.2h0M561.4 177.8h0M690.7 247.4h0M563.6 193.2h0M617.4 217.1h0M446.4 215.7h0M445.6 215.7h0M636.8 213.0h0M407.2 235.7h0M514.3 175.2h0M567.3 183.8h0M526.3 192.5h0M483.5 195.5h0M380.5 275.6h0M375.2 286.1h0M372.9 271.8h0M630.0 234.6h0M555.3 183.5h0M341.7 254.8h0M611.3 203.3h0M463.1 224.1h0M397.5 250.9h0M658.7 245.8h0M544.4 175.1h0M474.4 211.6h0M356.7 281.5h0M678.5 240.8h0M493.6 184.4h0M352.9 254.3h0M668.3 252.8h0M656.9 231.0h0M627.4 216.2h0M678.7 267.4h0M513.5 189.7h0M475.9 197.2h0M592.8 199.5h0M648.6 244.6h0M509.5 186.0h0M399.0 240.5h0M464.7 218.4h0M440.7 252.3h0M537.0 187.7h0M474.4 210.7h0M480.7 203.0h0M631.0 225.8h0M462.2 207.1h0M438.1 230.9h0M421.6 257.4h0M458.7 212.8h0M392.7 252.0h0M433.2 220.1h0M634.2 234.1h0M634.7 234.7h0M623.5 223.9h0M594.2 206.3h0M471.3 210.4h0M675.5 248.4h0M516.8 183.5h0M383.9 276.9h0M588.5 194.3h0M546.2 198.9h0M468.2 204.3h0M412.9 264.4h0M647.5 244.2h0M530.2 187.7h0M433.5 227.9h0M571.1 179.1h0M539.2 176.8h0M367.9 279.7h0M400.3 259.5h0M573.0 182.0h0M376.0 247.2h0M515.2 178.8h0M442.9 229.0h0M417.8 244.3h0M382.2 255.6h0M480.7 188.0h0M660.5 245.4h0M643.6 208.0h0M384.3 256.6h0M579.0 192.6h0M573.3 182.9h0M571.7 194.7h0M586.0 194.4h0M462.5 230.8h0M560.9 185.7h0M661.9 247.7h0M598.3 201.1h0M351.5 257.6h0M394.9 257.6h0M472.7 211.5h0M351.3 253.8h0M401.2 272.9h0M635.8 210.5h0M427.9 220.9h0M492.0 187.2h0M337.6 246.4h0M634.0 227.0h0M352.6 249.9h0M641.0 227.4h0M424.2 230.9h0M376.8 263.2h0M662.5 234.5h0M603.8 218.2h0M477.3 208.8h0M603.1 208.7h0M369.3 251.6h0M673.8 222.5h0M583.2 202.2h0M599.9 209.3h0M498.3 174.9h0M356.6 257.6h0M519.3 172.2h0M667.3 259.6h0M352.8 284.5h0M587.2 197.3h0M531.6 173.9h0M682.0 242.0h0M426.1 218.4h0M358.4 253.1h0M408.9 258.7h0M447.7 228.4h0M575.7 199.3h0M421.9 236.6h0M495.6 202.9h0M670.1 241.2h0M651.9 244.6h0M387.8 243.6h0M627.3 217.2h0M532.3 180.5h0M574.3 183.3h0M550.2 167.0h0M632.9 229.4h0M378.0 256.2h0M410.7 259.1h0M358.8 260.8h0M586.8 200.6h0M496.6 196.4h0M504.0 191.9h0M466.4 207.1h0M341.1 265.8h0M690.1 255.1h0M592.3 193.9h0M685.9 248.0h0M511.1 181.6h0M491.7 196.8h0M340.3 280.8h0M664.3 233.0h0M669.9 233.0h0M569.4 186.7h0M386.6 269.7h0M347.1 266.4h0M442.7 192.3h0M403.3 230.8h0M666.8 226.5h0M397.2 258.9h0M601.3 186.1h0M453.5 221.3h0M451.1 235.0h0M468.3 192.4h0M632.9 221.4h0M422.4 253.7h0M560.7 186.7h0M628.8 215.5h0M673.3 221.8h0M513.1 177.1h0M443.8 218.2h0M543.9 191.8h0M395.5 265.5h0M494.9 194.6h0M351.5 260.5h0M493.6 197.1h0M338.3 286.5h0M636.3 239.3h0M488.6 177.5h0M438.0 213.4h0M487.1 182.3h0M457.7 191.2h0M631.1 229.7h0M658.8 245.5h0M494.9 197.9h0M537.6 176.6h0M367.5 272.6h0M452.4 177.6h0M660.4 249.2h0M645.0 261.9h0M557.7 179.6h0M625.7 235.0h0M553.9 186.7h0M442.9 187.4h0M508.2 173.6h0M567.5 183.7h0M652.0 246.9h0M347.2 271.4h0M496.4 204.6h0M367.6 255.0h0M543.8 173.5h0M485.4 180.3h0M478.2 195.8h0M377.9 275.8h0M532.2 196.7h0M377.2 268.9h0M371.1 253.1h0M526.0 180.5h0M534.3 189.9h0M417.9 232.6h0M519.8 179.5h0M546.6 188.3h0M363.4 271.9h0M493.6 199.9h0M591.4 188.4h0M606.5 229.7h0M593.9 217.6h0M373.6 269.8h0M398.2 238.6h0M678.7 230.6h0M385.9 246.7h0M613.3 218.6h0M469.7 206.3h0M342.7 251.5h0M444.0 212.6h0M588.9 178.7h0M558.2 191.2h0M647.4 209.7h0M646.9 223.8h0M397.0 251.5h0M608.8 199.6h0M579.3 192.7h0M469.9 197.4h0M599.5 216.9h0M352.8 254.4h0M552.0 190.2h0M622.9 225.9h0M377.5 284.1h0M427.8 220.9h0M406.0 221.6h0M544.0 185.8h0M377.7 268.4h0M622.0 218.1h0M403.2 237.7h0M581.7 189.4h0M472.7 217.0h0M528.8 194.8h0M582.5 200.1h0M342.2 226.6h0M459.0 217.2h0M647.8 245.5h0M621.9 224.0h0M628.3 223.2h0M578.9 182.6h0M393.6 266.0h0M637.8 209.9h0M554.5 192.9h0M364.3 257.7h0M655.2 245.7h0M546.8 185.7h0M465.7 207.2h0M503.6 176.8h0M463.1 200.5h0M339.4 247.6h0M344.6 254.1h0M500.7 190.1h0M389.2 254.9h0M575.9 188.1h0M515.1 190.1h0M430.5 212.4h0M677.6 244.9h0M690.1 271.1h0M611.4 213.2h0M647.5 236.8h0M563.0 172.7h0M466.4 200.4h0M647.7 254.5h0M671.1 243.7h0M608.7 200.9h0M600.3 189.6h0M461.9 206.0h0M533.1 177.6h0M457.2 212.1h0M452.2 227.1h0M467.9 203.0h0M423.9 235.3h0M385.5 273.2h0M339.9 273.2h0M495.7 180.8h0M539.5 178.4h0M360.9 273.3h0M444.5 209.5h0M533.3 193.0h0M670.6 232.1h0M544.7 196.7h0M365.8 273.2h0M688.4 269.7h0M464.2 207.9h0M646.1 221.1h0M361.4 230.9h0M435.4 227.3h0M428.9 238.2h0M432.6 227.9h0M587.8 197.0h0M408.5 262.1h0M551.7 189.4h0M407.3 231.0h0M598.3 214.2h0M365.5 258.0h0M625.1 226.5h0M385.9 247.1h0M404.2 219.8h0M564.8 181.1h0M665.5 247.3h0M603.8 213.7h0M568.1 175.7h0M457.4 220.1h0M357.7 258.8h0M560.0 185.1h0M456.3 192.3h0M428.7 230.7h0M502.1 210.8h0M537.9 181.5h0M688.5 271.0h0M594.8 203.9h0M454.4 217.5h0M388.0 261.5h0M610.1 225.0h0M487.8 205.0h0M528.8 170.8h0M571.1 181.6h0M551.2 174.4h0M429.0 249.8h0M590.3 197.9h0M447.3 191.8h0M612.0 221.8h0M436.3 221.7h0M523.4 185.6h0M340.5 256.6h0M506.5 175.1h0M466.2 186.8h0M689.2 257.8h0M369.3 292.9h0M347.2 265.3h0M515.8 184.8h0M534.7 188.4h0M467.3 231.0h0M390.4 267.6h0M665.0 261.4h0M394.9 282.9h0M423.6 238.9h0M686.6 234.6h0M459.7 208.3h0M622.0 208.3h0M658.6 243.0h0M375.6 259.8h0M566.8 182.7h0M480.2 200.4h0M537.9 177.6h0M483.1 221.3h0M560.3 173.8h0M417.0 239.5h0M491.6 200.5h0M419.6 245.0h0M565.8 199.2h0M443.4 227.4h0M539.8 179.8h0M393.0 277.0h0M432.3 204.8h0M604.5 209.4h0M455.2 201.1h0M510.0 188.5h0M580.1 187.7h0M549.8 170.3h0M651.2 240.8h0M411.9 254.6h0M614.6 206.0h0M644.3 241.9h0M691.1 278.7h0M443.1 224.9h0M683.8 254.4h0M340.7 268.4h0M599.0 199.4h0M372.0 275.0h0M369.4 286.5h0M458.0 226.5h0M650.9 226.8h0M685.7 262.9h0M619.0 217.0h0M582.5 202.6h0M419.7 241.8h0M490.4 194.0h0M689.6 256.5h0M449.8 218.7h0M510.6 180.1h0M385.6 248.4h0M581.0 194.0h0M389.9 253.7h0M377.3 242.4h0M463.0 177.7h0M461.6 207.8h0M413.8 274.0h0M597.4 197.2h0M434.4 230.0h0M361.8 275.7h0M352.7 246.8h0M535.2 179.5h0M466.2 223.7h0M569.5 187.7h0M530.7 167.5h0M686.6 247.9h0M648.1 232.2h0M450.5 200.2h0M486.3 205.8h0M474.4 198.8h0M483.1 222.8h0M339.2 310.9h0M553.4 187.7h0M554.5 179.3h0"/><path d="M471.3 202.8h0M378.6 271.5h0M637.1 232.9h0M354.9 230.6h0M584.2 187.4h0M532.5 191.3h0M449.5 214.8h0M602.7 204.5h0M640.8 214.6h0M691.0 254.1h0M420.7 220.3h0M472.0 187.3h0M590.5 187.9h0M555.2 188.8h0M578.1 184.6h0M530.4 191.5h0M416.7 231.2h0M660.5 235.2h0M505.6 183.0h0M506.8 172.7h0M416.0 262.7h0M525.3 197.0h0M523.6 164.4h0M422.2 230.9h0M398.6 259.6h0M565.1 176.7h0M631.5 241.4h0M352.7 243.6h0M472.9 212.7h0M381.1 234.8h0M392.0 254.1h0M464.1 211.7h0M622.9 206.5h0M368.6 260.3h0M478.0 217.5h0M497.1 188.4h0M507.4 189.9h0M390.6 231.1h0M579.2 183.4h0M421.8 249.2h0M469.1 196.9h0M343.6 275.4h0M408.7 241.2h0M400.7 248.0h0M592.7 196.8h0M423.3 247.4h0M633.9 238.9h0M642.7 240.2h0M409.0 222.7h0M557.0 189.9h0M469.4 216.1h0M467.9 207.7h0M590.7 194.1h0M567.8 194.5h0M625.6 213.5h0M543.1 187.1h0M666.2 256.3h0M590.5 219.5h0M469.7 197.5h0M362.5 251.2h0M606.1 198.2h0M513.9 190.9h0M657.8 240.2h0M548.1 178.9h0M501.8 167.0h0M484.8 200.5h0M505.7 193.9h0M512.0 176.4h0M519.3 188.1h0M600.6 190.6h0M480.1 215.3h0M534.2 183.3h0M610.8 210.6h0M415.8 233.3h0M364.7 266.2h0M368.7 256.2h0M605.2 203.3h0M579.5 189.5h0M590.2 193.4h0M583.0 192.9h0M485.9 159.7h0M627.8 201.9h0M647.4 240.6h0M521.6 188.0h0M339.4 273.9h0M430.6 227.6h0M448.6 214.0h0M534.9 196.8h0M519.0 179.0h0M445.6 218.8h0M645.5 240.5h0M428.7 202.9h0M409.1 264.7h0M470.2 207.8h0M502.4 172.5h0M467.4 205.4h0M622.3 225.0h0M535.1 198.1h0M355.5 255.2h0M482.7 209.9h0M538.2 176.9h0M620.4 223.9h0M441.0 214.0h0M547.8 166.0h0M499.0 198.6h0M649.5 230.3h0M357.8 243.3h0M354.7 273.0h0M644.1 246.2h0M401.4 260.1h0M665.3 223.2h0M514.5 175.8h0M576.9 186.2h0M412.3 232.2h0M635.4 241.8h0M410.9 272.8h0M373.2 287.5h0M675.4 262.2h0M484.8 190.3h0M659.4 232.8h0M581.2 193.4h0M584.7 196.1h0M352.1 269.8h0M420.0 226.9h0M544.3 175.9h0M392.1 274.7h0M661.6 231.4h0M391.3 284.8h0M621.6 227.6h0M349.0 259.4h0M472.4 196.3h0M531.4 175.4h0M370.6 238.4h0M490.2 196.4h0M578.7 202.7h0M380.7 280.9h0M665.6 272.2h0M524.5 180.3h0M440.7 206.8h0M513.9 196.1h0M667.9 257.5h0M644.5 239.9h0M549.9 177.5h0M387.0 254.5h0M433.7 246.1h0M418.1 221.3h0M666.1 260.5h0M681.3 256.2h0M459.7 225.3h0M355.1 254.9h0M455.8 201.0h0M601.3 205.9h0M400.9 253.5h0M362.0 250.5h0M536.1 188.7h0M617.5 221.8h0M549.1 178.8h0M519.9 182.1h0M371.9 256.7h0M542.8 176.7h0M462.8 193.2h0M395.6 270.9h0M397.6 266.3h0M636.8 223.8h0M647.9 227.8h0M370.7 263.1h0M649.9 245.6h0M527.9 187.5h0M379.1 250.6h0M527.7 181.6h0M517.5 177.7h0M480.9 203.2h0M409.6 253.5h0M647.2 240.3h0M515.7 183.5h0M672.7 248.0h0M511.0 186.8h0M582.3 181.0h0M418.8 238.2h0M431.2 219.5h0M348.3 247.2h0M441.1 229.9h0M654.0 251.0h0M420.5 246.9h0M549.0 183.8h0M359.4 239.8h0M424.7 199.8h0M352.0 237.2h0M557.1 177.3h0M458.9 186.1h0M625.5 196.2h0M341.1 269.4h0M671.7 237.2h0M368.6 272.4h0M424.4 231.4h0M391.1 232.6h0M459.7 213.4h0M415.4 248.8h0M455.0 253.9h0M618.8 209.9h0M507.9 166.9h0M660.2 241.8h0M604.5 201.6h0M559.6 179.3h0M638.0 229.4h0M592.4 193.9h0M461.5 224.2h0M576.5 208.6h0M602.4 216.4h0M670.5 264.3h0M659.0 240.0h0M622.6 197.7h0M547.2 166.2h0M616.2 221.2h0M647.0 224.8h0M526.4 202.7h0M673.7 272.5h0M617.3 232.4h0M426.9 237.0h0M407.7 237.5h0M500.1 188.2h0M660.2 254.9h0M581.0 189.4h0M616.0 203.5h0M619.5 205.5h0M630.9 199.5h0M481.8 211.7h0M634.7 234.5h0M458.1 188.4h0M619.3 204.4h0M338.9 256.4h0M376.6 260.3h0M626.2 207.4h0M500.0 194.4h0M456.6 212.7h0M637.6 238.3h0M557.5 182.1h0M433.7 231.4h0M586.6 182.1h0M624.3 224.6h0M380.2 257.1h0M629.9 219.9h0M402.8 244.3h0M466.2 235.7h0M417.0 255.9h0M655.2 227.8h0M477.5 169.3h0M517.5 181.9h0M688.8 263.6h0M395.0 283.6h0M524.8 186.5h0M673.3 249.8h0M498.9 190.8h0M462.6 197.6h0M373.2 233.1h0M520.0 175.4h0M471.3 225.8h0M574.2 180.6h0M364.3 251.1h0M677.9 241.7h0M466.0 195.5h0M471.0 187.7h0M523.0 172.1h0M514.4 163.4h0M466.6 208.8h0M634.2 225.1h0M580.4 182.2h0M604.4 202.0h0M654.2 235.3h0M349.8 237.1h0M452.9 232.6h0M654.3 259.7h0M388.7 239.1h0M353.9 252.0h0M476.8 199.2h0M437.2 202.5h0M608.4 205.2h0M486.9 208.3h0M685.1 239.1h0M577.9 177.1h0M472.6 220.4h0M583.0 189.4h0M436.0 233.2h0M631.0 235.8h0M619.5 212.5h0M520.8 185.6h0M649.3 245.2h0M398.0 275.9h0M448.2 225.2h0M473.5 204.6h0M681.1 260.4h0M447.3 213.5h0M672.9 252.8h0M493.2 200.2h0M375.9 259.3h0M474.4 213.0h0M680.0 251.6h0M660.5 249.4h0M497.4 196.7h0M614.2 199.8h0M449.2 226.8h0M504.5 200.1h0M536.0 173.1h0M435.2 203.4h0M466.3 218.0h0M439.8 212.5h0M561.4 183.2h0M352.0 293.5h0M631.3 214.2h0M671.5 243.7h0M431.7 227.7h0M532.4 183.5h0M605.3 202.0h0M624.5 209.2h0M376.9 252.5h0M681.3 269.1h0M562.7 179.3h0M477.6 179.8h0M671.7 248.2h0M476.9 188.5h0M623.8 214.6h0M647.3 240.1h0M526.4 167.3h0M657.9 237.6h0M384.8 254.1h0M484.2 199.2h0M515.9 190.9h0M542.8 170.2h0M480.8 188.9h0M637.7 223.9h0M617.7 217.7h0M576.1 185.0h0M605.5 185.6h0M656.9 239.5h0M601.5 209.8h0M649.8 219.8h0M384.0 250.8h0M555.1 169.6h0M435.1 241.2h0M630.4 229.3h0M434.4 227.5h0M370.7 274.6h0M577.7 205.3h0M465.2 201.8h0M586.0 209.8h0M452.9 222.8h0M338.5 253.4h0M435.1 219.0h0M358.3 244.9h0M624.4 223.6h0M351.4 265.9h0M417.1 233.3h0M561.1 179.9h0M539.4 186.5h0M414.8 244.1h0M635.8 219.3h0M624.9 216.8h0M614.0 211.5h0M347.4 245.6h0M359.7 262.2h0M561.3 182.3h0M479.6 182.5h0M519.4 175.9h0M645.8 228.9h0M691.4 266.4h0M454.4 179.1h0M688.0 267.5h0M384.9 265.8h0M498.7 181.0h0M499.0 172.5h0M458.8 213.4h0M437.8 235.0h0M406.4 245.9h0M493.3 177.5h0M407.6 243.8h0M431.7 218.3h0M536.5 172.9h0M603.2 180.2h0M674.5 266.5h0M593.2 191.2h0M359.6 263.5h0M644.4 234.2h0M594.0 193.9h0M463.7 198.8h0M395.5 222.2h0M446.0 184.7h0M353.0 269.8h0M657.0 249.2h0M623.4 213.6h0M375.2 262.8h0M392.0 257.6h0M689.5 239.5h0M661.5 246.0h0M629.6 210.6h0M382.9 275.7h0M517.9 189.7h0M411.7 243.4h0M660.5 244.1h0M589.9 220.5h0M492.6 180.6h0M597.7 188.5h0M636.5 241.0h0M384.9 269.4h0M545.4 181.1h0M472.0 225.0h0M616.8 215.1h0M502.2 208.0h0M527.3 185.6h0M362.5 253.4h0M652.1 251.3h0M509.6 179.6h0M423.9 226.5h0M659.4 236.6h0M547.5 183.5h0M382.2 264.2h0M545.5 189.5h0M563.6 182.3h0M361.3 247.2h0M594.9 209.4h0M479.6 202.4h0M576.6 187.9h0M568.3 180.2h0M583.4 188.0h0M660.5 242.8h0M550.3 186.9h0M688.2 258.2h0M418.6 218.5h0M630.3 235.2h0M562.7 184.4h0M370.7 257.7h0M684.4 254.8h0M354.6 258.4h0M422.8 244.3h0M576.2 186.6h0M668.1 227.6h0M430.8 203.4h0M391.9 283.8h0M374.2 264.3h0M683.4 251.2h0M624.3 212.3h0M395.2 245.8h0M617.1 213.8h0M653.7 238.4h0M640.1 229.2h0M535.0 184.3h0M557.7 174.0h0M548.7 182.0h0M356.6 256.9h0M531.3 178.0h0M340.0 277.3h0M602.2 222.2h0M625.9 223.1h0M500.2 198.4h0M411.0 260.3h0M489.9 216.8h0M531.5 195.5h0M462.7 223.4h0M639.5 239.5h0M639.0 237.7h0M444.9 224.6h0M608.4 216.5h0M685.3 267.4h0M610.7 213.9h0M377.7 260.0h0M583.5 184.1h0M499.3 180.0h0M482.2 183.7h0M663.2 231.5h0M597.8 207.4h0M635.0 202.4h0M592.1 211.4h0M639.6 232.6h0M490.5 197.3h0M672.5 243.5h0M494.4 187.8h0M444.2 207.6h0M461.2 204.7h0M494.8 194.3h0M686.1 235.9h0M608.4 189.4h0M634.9 244.9h0M434.8 224.2h0M426.1 229.6h0M419.4 239.5h0M652.5 246.1h0M611.3 206.0h0M612.9 225.3h0M526.5 170.4h0M374.6 267.9h0M560.3 177.2h0M467.8 172.4h0M394.6 244.2h0M526.1 174.0h0M670.8 234.9h0M482.2 212.3h0M681.3 242.1h0M369.2 265.9h0M659.7 250.4h0M342.1 258.3h0M689.2 275.0h0"/><path d="M400.0 230.1h0M582.9 197.7h0M602.6 204.7h0M428.7 219.0h0M347.1 257.3h0M429.6 220.0h0M680.2 241.3h0M570.6 178.3h0M549.9 178.6h0M360.0 250.8h0M361.1 280.2h0M387.9 257.3h0M377.4 220.7h0M581.8 192.9h0M434.5 226.2h0M372.9 251.9h0M445.1 199.2h0M495.5 198.8h0M596.3 218.4h0M459.0 224.9h0M633.3 245.6h0M417.8 244.5h0M641.3 236.0h0M436.0 203.7h0M340.8 274.2h0M393.5 289.1h0M571.7 176.9h0M401.5 238.7h0M388.4 297.2h0M473.5 221.2h0M569.2 181.2h0M360.3 258.2h0M342.6 265.8h0M679.8 246.8h0M466.6 203.5h0M617.5 208.8h0M426.8 219.8h0M376.9 276.4h0M425.6 236.0h0M472.7 192.0h0M609.3 210.0h0M415.2 251.1h0M473.9 189.5h0M505.1 196.7h0M646.6 249.9h0M634.7 231.2h0M420.8 252.4h0M378.5 263.1h0M500.9 185.6h0M379.2 252.9h0M507.8 188.0h0M493.9 197.6h0M379.4 274.8h0M504.1 189.8h0M670.4 243.2h0M416.4 238.1h0M601.9 186.2h0M679.6 241.9h0M642.4 252.4h0M523.9 195.0h0M422.6 249.3h0M412.8 270.7h0M366.8 259.4h0M501.2 211.1h0M597.4 210.3h0M450.3 220.1h0M410.3 237.4h0M379.9 247.0h0M687.3 245.7h0M341.2 260.9h0M569.5 184.9h0M504.5 185.3h0M600.6 196.5h0M514.7 180.7h0M552.4 178.8h0M623.1 213.3h0M673.5 248.3h0M468.1 179.3h0M658.3 243.8h0M549.9 186.6h0M657.9 247.1h0M350.1 267.8h0M493.4 195.3h0M603.6 210.1h0M544.7 188.5h0M578.8 187.0h0M341.8 272.5h0M506.9 182.4h0M519.2 192.2h0M690.0 249.9h0M558.2 186.6h0M409.1 275.8h0M692.8 246.1h0M679.1 254.7h0M451.7 202.6h0M575.1 193.2h0M345.5 254.5h0M631.7 228.7h0M337.4 249.9h0M498.8 182.7h0M537.1 178.7h0M422.8 227.3h0M380.2 268.8h0M386.0 254.4h0M523.0 164.3h0M357.5 247.5h0M420.6 246.6h0M498.2 200.8h0M482.7 209.8h0M643.2 220.6h0M677.6 248.0h0M482.3 225.0h0M355.6 269.9h0M343.5 256.6h0M440.3 211.8h0M646.8 263.1h0M486.7 172.4h0M624.3 215.2h0M569.7 182.6h0M424.0 233.4h0M571.3 174.3h0M656.9 228.0h0M679.5 254.1h0M656.5 243.6h0M540.1 185.5h0M428.2 250.0h0M421.4 224.3h0M578.2 198.0h0M363.4 261.6h0M505.0 171.1h0M576.3 189.6h0M506.3 183.6h0M578.4 186.9h0M401.4 229.6h0M678.1 254.0h0M490.4 184.2h0M677.9 255.3h0M679.2 264.1h0M657.4 241.9h0M465.2 225.5h0M573.2 188.6h0M416.4 232.5h0M413.7 241.6h0M385.7 261.5h0M481.7 192.7h0M544.4 182.1h0M672.4 238.2h0M587.8 191.2h0M492.8 196.8h0M343.6 279.1h0M577.7 194.2h0M679.6 262.2h0M610.0 216.8h0M563.0 174.1h0M588.0 201.2h0M609.8 207.9h0M444.3 216.8h0M551.1 197.0h0M639.4 240.0h0M407.8 232.7h0M342.6 237.0h0M434.2 220.4h0M362.2 274.1h0M584.8 193.7h0M338.7 260.8h0M590.2 203.6h0M688.4 260.8h0M669.6 248.2h0M682.2 259.7h0M523.0 187.8h0M451.1 199.8h0M429.2 237.5h0M356.9 272.2h0M369.8 267.6h0M559.2 181.3h0M618.8 207.6h0M596.5 194.6h0M404.3 265.1h0M667.6 242.3h0M392.0 252.4h0M583.6 182.3h0M418.9 254.1h0M620.8 218.1h0M545.8 177.0h0M405.3 241.2h0M618.7 197.0h0M419.5 256.3h0M538.2 186.8h0M386.4 264.7h0M375.7 282.9h0M562.7 184.9h0M487.9 202.5h0M526.9 180.2h0M594.9 197.2h0M415.9 235.2h0M583.1 205.0h0M555.9 187.3h0M447.9 209.8h0M572.9 187.7h0M417.8 248.0h0M611.6 217.9h0M678.2 233.1h0M619.8 212.6h0M593.8 206.3h0M357.1 257.7h0M354.8 258.2h0M520.0 194.3h0M649.3 257.0h0M501.5 188.3h0M517.5 186.5h0M522.7 171.5h0M525.5 191.7h0M613.0 214.5h0M474.9 203.4h0M509.2 183.8h0M416.2 263.2h0M450.5 192.4h0M611.2 212.6h0M469.5 176.3h0M669.4 256.0h0M557.3 190.4h0M563.7 190.5h0M436.4 259.7h0M660.8 249.4h0M383.2 237.6h0M444.0 221.8h0M361.7 262.8h0M492.8 172.0h0M367.8 257.5h0M679.9 255.9h0M355.5 256.4h0M385.3 286.5h0M375.2 270.3h0M526.4 182.9h0M633.5 228.6h0M609.3 214.4h0M488.7 190.0h0M423.6 240.6h0M682.9 260.3h0M600.7 208.3h0M654.4 248.9h0M677.4 243.1h0M552.1 179.2h0M591.9 207.5h0M598.3 206.0h0M678.1 257.7h0M375.3 266.9h0M425.5 220.6h0M428.0 187.1h0M390.1 265.3h0M641.2 227.2h0M602.1 209.6h0M458.8 213.7h0M629.5 233.1h0M644.2 230.8h0M608.8 208.0h0M553.0 198.6h0M453.6 192.2h0M639.0 232.7h0M467.4 195.3h0M470.5 195.5h0M376.5 274.2h0M418.1 252.0h0M563.4 180.0h0M652.8 237.6h0M664.3 234.5h0M623.3 235.5h0M605.7 205.7h0M626.4 220.1h0M472.7 219.5h0M635.9 236.2h0M456.9 221.5h0M629.1 210.3h0M638.8 246.9h0M649.8 253.0h0M602.0 221.5h0M578.0 188.3h0M646.7 230.8h0M532.1 172.6h0M615.7 215.8h0M615.5 217.9h0M458.4 202.3h0M426.0 242.6h0M346.5 270.6h0M620.6 217.0h0M361.4 269.7h0M600.8 206.8h0M480.2 210.4h0M622.6 226.6h0M562.1 182.2h0M655.5 212.7h0M598.2 205.4h0M448.1 226.8h0M375.0 246.8h0M546.2 185.6h0M509.4 173.4h0M485.4 207.7h0M411.2 229.2h0M466.2 184.1h0M584.8 210.8h0M381.7 262.4h0M547.4 179.6h0M491.0 189.4h0M370.1 246.5h0M523.5 187.9h0M464.1 185.6h0M416.4 239.2h0M415.2 214.9h0M651.3 248.7h0M472.6 201.1h0M589.7 201.8h0M444.6 213.5h0M454.3 210.4h0M531.8 174.6h0M515.2 179.6h0M677.5 245.3h0M692.9 232.7h0M402.5 239.7h0M661.0 221.7h0M646.1 227.2h0M465.9 212.5h0M345.6 256.0h0M516.0 199.1h0M676.9 234.2h0M518.9 192.9h0M388.4 247.8h0M561.7 187.1h0M551.4 172.9h0M429.5 226.9h0M519.8 191.4h0M503.8 186.7h0M458.3 209.7h0M592.2 197.6h0M428.2 219.8h0M521.0 187.1h0M658.8 254.6h0M409.1 225.5h0M603.7 197.4h0M590.5 194.9h0M635.4 217.8h0M666.3 271.5h0M494.7 198.7h0M368.0 292.4h0M578.3 196.7h0M387.8 235.5h0M692.1 260.2h0M456.8 210.9h0M408.0 235.4h0M394.6 235.8h0M445.1 226.7h0M394.9 254.3h0M406.0 254.7h0M449.6 205.5h0M507.9 184.3h0M493.7 203.3h0M673.3 247.1h0M504.9 190.0h0M388.7 278.0h0M397.5 276.1h0M681.2 261.2h0M480.7 189.8h0M462.5 217.1h0M582.9 188.6h0M644.7 236.8h0M540.9 196.7h0M596.3 201.2h0M463.4 186.5h0M480.1 178.4h0M491.1 187.6h0M573.0 198.5h0M598.7 207.0h0M467.4 202.1h0M640.1 233.5h0M578.1 178.7h0M458.2 223.9h0M480.4 192.4h0M402.2 277.0h0M622.0 232.4h0M346.8 253.4h0M513.6 192.8h0M466.5 213.8h0M526.5 175.5h0M667.8 236.8h0M455.6 199.0h0M475.0 184.0h0M430.0 212.8h0M469.0 194.5h0M662.0 249.7h0M528.9 179.1h0M629.4 232.2h0M394.3 252.0h0M406.0 244.9h0M358.5 266.3h0M418.4 230.9h0M357.8 260.6h0M593.4 213.5h0M661.0 255.8h0M665.1 239.3h0M369.2 279.8h0M405.9 240.8h0M603.3 211.1h0M370.4 250.5h0M647.7 234.8h0M684.6 235.2h0M350.8 270.5h0M345.1 263.8h0M589.2 192.9h0M394.9 247.6h0M401.6 233.0h0M682.1 240.1h0M465.5 218.3h0M476.3 198.0h0M427.4 235.3h0M691.1 289.9h0M588.3 198.1h0M391.4 264.3h0M462.1 206.5h0M525.8 177.5h0M579.4 199.9h0M618.5 217.4h0M542.0 163.5h0M551.0 186.4h0M457.1 184.6h0M642.9 248.2h0M662.6 236.5h0M399.5 247.7h0M473.6 200.8h0M622.5 216.8h0M616.8 212.8h0M621.1 216.7h0M484.6 188.0h0M596.3 189.8h0M482.7 225.3h0M667.6 238.1h0M556.1 179.3h0M432.9 238.4h0M658.7 245.9h0M629.3 203.8h0M689.6 250.4h0M606.7 199.3h0M430.6 221.9h0M642.3 226.7h0M511.1 179.9h0M366.8 303.9h0M668.1 246.8h0M607.9 202.5h0M541.2 189.6h0M489.2 184.6h0M669.2 264.2h0M373.9 277.4h0M435.7 244.5h0M494.4 205.0h0M595.6 199.3h0M568.0 200.0h0M372.0 237.6h0M413.6 243.1h0M570.0 185.6h0M664.4 255.1h0M672.7 261.6h0M540.6 180.0h0M624.8 220.0h0M644.4 219.5h0M480.0 210.7h0M379.5 254.0h0M603.7 214.3h0M356.3 284.6h0M688.7 232.7h0M383.9 251.2h0M563.8 180.2h0M627.1 226.6h0M349.1 255.1h0M640.1 230.2h0M654.9 251.0h0M504.1 188.3h0M592.9 197.0h0M669.0 235.1h0M403.2 269.6h0M380.0 284.0h0M403.4 235.8h0M395.5 252.5h0M668.0 223.8h0M426.3 236.1h0M661.8 247.0h0M555.2 200.6h0M682.6 255.5h0M526.8 168.0h0M641.3 225.4h0M662.2 244.6h0M623.8 211.3h0M419.8 215.6h0M502.1 198.5h0M665.6 215.2h0M394.4 245.6h0M481.4 183.4h0M397.0 264.8h0M512.7 191.5h0M432.5 214.4h0M608.2 217.6h0M546.9 190.0h0M468.0 225.9h0"/><path d="M678.6 258.7h0M544.4 180.0h0M681.1 240.0h0M448.9 225.3h0M347.5 263.7h0M438.4 228.7h0M561.1 165.0h0M581.1 183.2h0M466.1 221.6h0M530.5 176.4h0M644.0 226.9h0M552.4 174.5h0M444.1 227.4h0M683.3 251.4h0M360.2 286.1h0M410.5 245.7h0M517.8 195.4h0M575.2 200.0h0M580.6 216.0h0M578.5 178.0h0M590.9 199.8h0M489.0 192.9h0M681.9 246.2h0M340.4 281.5h0M485.1 207.9h0M630.4 214.7h0M341.9 263.1h0M633.3 231.8h0M373.4 274.1h0M650.4 232.0h0M520.6 170.5h0M481.3 225.1h0M585.3 209.3h0M686.2 263.8h0M376.6 259.8h0M389.9 243.3h0M466.8 188.1h0M690.7 225.9h0M690.6 240.7h0M394.6 238.1h0M595.5 191.5h0M657.4 236.1h0M428.0 235.8h0M390.4 262.9h0M546.6 182.3h0M516.1 176.7h0M541.6 172.1h0M530.6 176.9h0M342.7 278.0h0M421.5 241.6h0M606.4 208.0h0M423.2 262.0h0M370.2 247.4h0M456.6 211.8h0M609.4 211.6h0M634.1 242.1h0M498.3 163.9h0M552.1 181.1h0M401.6 256.2h0M455.2 213.0h0M368.9 253.1h0M447.0 204.1h0M519.4 188.2h0M392.3 249.8h0M445.9 202.8h0M588.4 213.4h0M489.8 194.2h0M380.8 263.3h0M638.7 224.7h0M559.6 179.6h0M358.1 249.3h0M373.7 260.4h0M601.3 201.4h0M397.1 234.8h0M575.4 177.3h0M369.8 273.1h0M658.3 248.5h0M479.0 198.5h0M407.8 267.8h0M690.7 265.5h0M456.4 208.1h0M416.5 263.0h0M479.8 193.1h0M392.7 239.5h0M362.4 218.7h0M664.4 233.7h0M372.8 244.0h0M406.3 247.3h0M575.5 173.2h0M441.1 220.9h0M669.4 252.5h0M387.5 240.6h0M509.3 194.9h0M585.3 203.7h0M542.9 182.9h0M591.7 196.9h0M622.1 224.6h0M356.4 273.2h0M544.6 179.2h0M584.6 185.3h0M467.7 201.8h0M685.1 243.1h0M493.0 195.8h0M595.5 200.0h0M644.8 228.3h0M647.4 229.0h0M592.2 204.5h0M576.1 194.8h0M338.6 275.6h0M648.3 237.6h0M691.6 242.8h0M616.8 234.5h0M644.9 206.4h0M566.3 173.9h0M674.4 242.1h0M521.8 178.7h0M509.0 179.0h0M518.8 189.6h0M546.4 181.9h0M516.1 189.9h0M516.5 169.7h0M403.2 261.4h0M526.4 178.1h0M587.5 210.4h0M615.0 205.1h0M666.4 244.4h0M519.0 176.1h0M480.3 204.6h0M589.3 200.4h0M597.3 191.2h0M413.0 229.5h0M446.3 219.9h0M465.1 206.0h0M411.0 220.4h0M420.4 241.6h0M577.7 177.3h0M563.2 182.3h0M358.9 251.6h0M465.5 236.2h0M523.9 185.7h0M575.6 204.4h0M418.8 232.7h0M457.1 227.1h0M599.4 213.1h0M510.7 178.2h0M510.5 189.5h0M590.5 210.8h0M645.8 219.3h0M493.5 182.2h0M683.7 258.6h0M402.5 257.0h0M665.2 252.5h0M640.5 218.9h0M654.0 257.6h0M489.2 199.9h0M470.5 222.5h0M379.7 275.0h0M478.6 191.1h0M549.0 180.9h0M476.0 202.4h0M472.2 213.7h0M608.0 208.8h0M455.7 202.6h0M404.3 230.2h0M344.5 251.2h0M441.8 202.4h0M408.5 268.1h0M420.3 212.0h0M545.7 173.9h0M350.2 255.6h0M453.0 200.9h0M518.7 171.6h0M380.8 262.2h0M485.4 204.8h0M466.5 209.8h0M688.1 250.6h0M422.8 241.8h0M546.1 175.7h0M471.4 223.5h0M625.5 224.3h0M433.0 228.9h0M688.3 239.0h0M356.6 254.8h0M559.5 187.8h0M613.9 219.1h0M475.0 187.7h0M621.7 223.7h0M605.0 210.8h0M493.9 195.3h0M501.5 186.3h0M412.9 249.7h0M369.7 262.3h0M468.5 190.2h0M440.2 227.3h0M586.9 169.2h0M397.5 247.5h0M518.9 172.6h0M643.5 232.3h0M411.8 254.3h0M456.6 201.3h0M555.9 176.2h0M367.3 258.0h0M677.0 247.0h0M570.8 190.3h0M526.5 176.8h0M637.8 237.0h0M457.7 180.6h0M465.6 220.6h0M480.3 206.9h0M573.7 199.1h0M496.0 182.7h0M618.2 219.1h0M499.9 192.4h0M598.1 193.7h0M347.5 269.9h0M579.9 213.0h0M577.6 179.8h0M407.5 246.9h0M398.8 237.4h0M429.3 211.9h0M566.5 193.4h0M398.3 269.5h0M518.5 177.0h0M385.0 277.8h0M509.2 180.0h0M447.1 210.8h0M578.6 178.6h0M614.6 208.5h0M540.5 181.7h0M632.5 236.4h0M538.8 180.1h0M496.8 178.6h0M682.2 260.8h0M375.2 241.1h0M554.9 201.7h0M683.0 259.2h0M596.2 198.4h0M400.3 283.9h0M631.7 222.0h0M653.9 237.6h0M493.8 198.7h0M526.7 168.6h0M644.0 239.3h0M457.8 235.0h0M346.6 258.0h0M363.0 268.6h0M559.2 187.1h0M441.3 225.3h0M436.4 248.7h0M646.7 221.5h0M689.3 231.9h0M437.2 231.7h0M666.8 252.6h0M418.3 216.8h0M369.8 282.9h0M555.0 177.4h0M643.8 243.1h0M502.3 199.3h0M616.8 207.4h0M677.4 253.9h0M437.3 222.2h0M425.4 205.4h0M584.5 188.3h0M414.6 248.2h0M676.6 240.4h0M515.6 190.9h0M346.7 261.6h0M648.8 215.2h0M464.2 208.7h0M597.7 209.7h0M571.3 178.8h0M392.1 266.1h0M663.9 228.8h0M617.2 216.3h0M407.7 244.2h0M626.2 210.3h0M370.9 258.4h0M508.8 198.6h0M471.3 194.7h0M492.8 187.2h0M338.0 263.0h0M632.7 216.5h0M533.6 170.4h0M381.9 245.8h0M613.7 206.6h0M616.9 233.9h0M578.5 193.9h0M576.7 180.8h0M676.1 253.2h0M483.8 200.8h0M518.5 185.8h0M645.4 239.7h0M475.3 204.9h0M542.7 184.7h0M404.8 230.5h0M493.6 192.7h0M516.4 183.0h0M668.0 244.4h0M408.1 273.5h0M540.0 183.5h0M528.6 183.6h0M446.3 238.1h0M595.8 201.7h0M567.8 197.2h0M469.5 198.7h0M566.1 186.0h0M583.1 199.1h0M598.0 211.3h0M373.3 280.7h0M355.3 237.0h0M425.6 242.1h0M368.0 269.8h0M511.3 183.3h0M501.4 195.7h0M469.4 208.0h0M377.9 236.6h0M416.8 253.6h0M375.8 261.2h0M585.2 199.5h0M411.6 196.5h0M350.3 262.3h0M668.4 233.2h0M476.9 197.7h0M674.4 254.4h0M519.4 172.2h0M610.6 213.8h0M632.7 217.8h0M481.8 197.9h0M654.3 222.9h0M536.3 186.7h0M501.4 179.6h0M535.5 177.0h0M644.8 242.4h0M650.5 241.3h0M685.2 271.2h0M562.1 185.3h0M637.1 221.7h0M444.1 219.2h0M590.7 196.0h0M565.8 179.8h0M570.8 186.3h0M494.3 188.2h0M452.9 202.2h0M382.9 250.1h0M575.7 185.5h0M446.0 238.5h0M531.4 181.8h0M597.3 196.7h0M361.5 266.5h0M594.8 198.6h0M468.4 209.1h0M515.6 191.1h0M484.9 205.5h0M444.0 228.9h0M681.3 242.1h0M418.4 249.5h0M681.8 244.4h0M633.4 239.6h0M477.1 199.6h0M376.2 248.2h0M352.3 233.3h0M409.5 255.6h0M493.9 191.0h0M391.6 242.6h0M521.9 161.7h0M656.4 251.6h0M422.0 221.7h0M349.3 255.6h0M495.3 197.8h0M545.7 177.0h0M589.9 215.5h0M376.1 276.1h0M444.5 217.0h0M470.8 200.2h0M382.3 255.4h0M391.0 255.0h0M416.4 245.9h0M406.5 251.0h0M521.4 192.7h0M485.5 211.4h0M426.9 233.1h0M354.0 297.5h0M601.2 222.5h0M482.5 213.0h0M549.8 183.6h0M360.1 257.5h0M583.9 180.9h0M436.1 211.9h0M514.0 186.6h0M437.5 235.8h0M545.6 178.5h0M565.8 192.0h0M367.7 269.5h0M418.7 222.2h0M378.2 242.1h0M593.2 197.7h0M470.2 180.6h0M434.7 239.8h0M686.2 283.6h0M672.7 224.0h0M428.8 237.5h0M409.8 226.5h0M692.0 240.3h0M535.7 167.5h0M365.6 270.2h0M429.4 222.6h0M556.4 186.0h0M591.1 206.6h0M371.4 257.9h0M506.4 180.9h0M568.2 185.4h0M405.3 244.1h0M678.7 241.2h0M470.5 210.9h0M584.9 192.8h0M480.4 180.5h0M539.8 174.6h0M674.9 249.7h0M680.4 259.1h0M502.9 154.1h0M635.7 227.7h0M591.5 212.4h0M671.1 260.2h0M432.5 201.0h0M617.3 205.4h0M468.3 205.5h0M621.4 228.2h0M575.4 174.9h0M397.9 264.2h0M412.7 259.9h0M457.0 215.6h0M592.3 201.0h0M416.8 247.7h0M639.1 220.6h0M444.9 215.8h0M341.6 278.1h0M492.2 189.9h0M643.7 233.2h0M470.7 233.8h0M418.5 238.6h0M427.3 237.6h0M589.7 196.9h0M544.3 174.1h0M439.3 221.3h0M682.3 224.4h0M652.6 262.1h0M381.6 260.4h0M590.1 194.9h0M625.2 215.0h0M626.4 207.5h0M392.2 242.9h0M479.2 195.8h0M405.3 243.2h0M614.4 199.5h0M560.7 168.3h0M626.2 206.0h0M538.8 171.0h0M469.3 228.4h0M373.6 249.3h0M668.5 262.4h0M566.9 175.4h0M613.9 191.6h0M495.7 171.7h0M450.3 218.9h0M376.3 240.4h0M425.6 214.6h0M580.4 194.8h0M385.6 251.9h0M512.6 170.8h0M691.7 282.7h0M495.8 193.6h0M399.0 231.2h0M682.9 255.5h0M498.2 192.0h0M343.6 245.2h0M676.7 252.9h0M484.4 207.5h0M545.8 168.7h0M421.9 230.0h0M477.8 212.2h0M566.9 178.4h0M553.1 181.5h0M691.7 258.9h0M341.6 275.6h0M370.6 279.9h0M634.8 230.1h0M585.4 210.7h0M545.6 177.2h0M543.7 188.8h0M430.3 229.7h0M558.0 192.9h0M470.9 208.7h0M512.2 179.3h0M597.4 203.6h0M621.9 213.1h0M550.4 178.6h0M647.0 253.4h0M353.6 260.0h0M649.7 230.6h0M664.5 235.3h0"/><path d="M631.1 230.2h0M542.5 176.4h0M472.0 196.1h0M556.5 196.5h0M455.3 181.3h0M538.8 174.8h0M662.1 206.3h0M347.7 242.6h0M500.9 170.7h0M681.8 245.9h0M558.9 171.5h0M527.0 182.3h0M588.0 196.7h0M451.2 212.5h0M648.9 254.0h0M348.3 273.1h0M567.8 188.1h0M472.9 193.0h0M417.8 234.0h0M552.7 171.6h0M453.0 183.5h0M614.4 199.2h0M675.7 251.2h0M474.5 215.4h0M460.4 210.3h0M535.9 174.9h0M612.6 213.0h0M433.6 224.9h0M512.6 188.5h0M636.3 224.4h0M478.5 172.6h0M360.1 252.6h0M454.5 215.1h0M445.3 222.7h0M586.5 190.5h0M622.3 215.0h0M517.7 193.0h0M629.2 238.2h0M414.4 268.2h0M418.8 228.5h0M337.7 281.9h0M372.0 240.8h0M609.8 211.4h0M633.3 209.4h0M687.5 242.1h0M664.8 263.7h0M448.8 206.2h0M639.1 213.1h0M538.9 178.9h0M530.3 186.9h0M385.4 280.6h0M423.5 210.9h0M585.2 191.7h0M614.1 207.6h0M609.8 207.8h0M437.5 228.5h0M611.7 192.4h0M394.1 259.9h0M375.2 242.7h0M394.9 282.4h0M363.4 262.8h0M574.8 184.9h0M367.0 263.2h0M647.9 251.5h0M482.8 193.4h0M458.4 209.9h0M423.4 240.1h0M616.2 197.7h0M526.4 179.1h0M474.2 194.9h0M441.5 215.3h0M413.5 267.7h0M453.0 206.7h0M564.3 201.6h0M508.2 167.8h0M671.3 266.4h0M497.2 169.1h0M428.5 218.4h0M429.3 242.7h0M610.6 217.0h0M393.0 213.0h0M508.4 197.3h0M473.3 215.1h0M471.0 180.5h0M381.2 242.6h0M665.6 228.8h0M572.0 184.1h0M439.6 235.9h0M495.9 165.9h0M659.4 246.1h0M666.7 212.3h0M386.7 262.6h0M664.8 227.8h0M484.3 177.4h0M689.7 279.4h0M628.7 225.3h0M470.4 206.8h0M604.9 200.1h0M503.9 180.0h0M621.8 221.0h0M597.2 223.1h0M416.0 263.1h0M470.7 188.7h0M653.9 245.6h0M673.4 241.2h0M375.5 249.9h0M361.8 243.1h0M496.3 187.4h0M686.7 243.2h0M486.0 200.2h0M398.4 273.0h0M530.3 175.9h0M488.7 193.0h0M512.8 191.6h0M496.0 203.5h0M410.9 241.7h0M356.4 271.8h0M615.5 221.1h0M653.5 239.4h0M494.3 209.7h0M528.4 177.9h0M360.8 261.8h0M574.7 185.5h0M664.1 232.3h0M628.9 220.8h0M534.1 183.0h0M570.0 187.4h0M510.5 186.6h0M349.5 259.6h0M436.6 203.4h0M495.8 190.1h0M401.8 260.7h0M627.3 204.6h0M460.9 213.2h0M624.2 206.1h0M477.0 189.5h0M537.1 188.2h0M576.3 211.2h0M526.6 177.9h0M456.2 205.6h0M419.3 239.2h0M495.4 188.1h0M646.2 237.3h0M444.5 195.7h0M419.9 233.9h0M594.4 191.6h0M461.8 208.2h0M627.3 206.9h0M687.8 225.1h0M340.8 297.0h0M649.3 249.5h0M475.4 203.1h0M611.1 207.4h0M616.1 220.0h0M533.0 180.5h0M350.3 244.4h0M611.5 212.7h0M337.5 279.1h0M429.4 217.0h0M563.6 172.3h0M494.9 188.1h0M410.6 222.9h0M527.6 168.7h0M407.6 233.0h0M447.8 211.9h0M461.2 212.0h0M596.7 195.6h0M597.5 198.5h0M378.8 259.5h0M371.6 253.2h0M426.8 220.1h0M651.7 235.7h0M671.0 243.8h0M584.7 208.1h0M536.8 179.2h0M677.4 280.4h0M342.0 253.5h0M407.9 259.1h0M490.3 194.2h0M634.5 224.4h0M447.2 243.0h0M434.1 228.0h0M412.7 254.1h0M379.8 270.6h0M401.2 249.9h0M496.0 203.9h0M445.8 192.9h0M594.8 196.8h0M459.5 227.6h0M537.1 172.4h0M506.4 182.3h0M652.2 242.4h0M553.6 197.7h0M652.7 252.5h0M349.2 258.0h0M527.8 174.2h0M633.9 217.7h0M573.9 196.6h0M405.7 237.2h0M686.7 243.9h0M404.0 247.6h0M434.8 221.0h0M379.2 272.4h0M399.3 268.1h0M619.9 228.1h0M643.5 241.0h0M382.3 264.2h0M504.5 203.2h0M668.8 240.0h0M677.8 262.1h0M459.6 234.0h0M408.5 239.4h0M531.4 184.3h0M639.1 226.9h0M612.6 211.1h0M372.9 241.0h0M678.1 268.6h0M594.5 209.0h0M450.2 208.3h0M604.3 196.5h0M352.7 278.6h0M622.9 213.8h0M505.0 188.8h0M531.1 173.4h0M346.3 254.8h0M642.8 231.7h0M578.1 168.8h0M674.0 264.2h0M677.5 267.7h0M596.0 207.5h0M552.8 200.9h0M493.2 193.2h0M548.9 183.6h0M347.7 250.2h0M665.7 244.5h0M385.9 261.7h0M691.1 254.7h0M389.4 245.1h0M656.5 231.0h0M383.9 240.6h0M484.3 196.3h0M486.3 194.0h0M357.6 271.4h0M676.4 251.2h0M636.4 226.8h0M584.6 190.8h0M512.6 177.5h0M519.5 181.9h0M622.5 232.5h0M486.6 211.9h0M431.9 228.3h0M567.5 195.5h0M539.9 187.9h0M519.6 174.4h0M689.0 255.3h0M454.1 213.8h0M448.7 224.2h0M349.6 274.9h0M664.7 218.0h0M585.3 195.7h0M596.8 201.2h0M596.6 192.6h0M410.6 226.0h0M613.1 206.9h0M397.0 236.8h0M623.4 234.9h0M685.1 260.1h0M375.2 268.9h0M594.7 198.9h0M614.5 197.7h0M520.8 161.9h0M567.8 178.9h0M570.6 178.8h0M606.4 201.0h0M540.9 186.3h0M487.1 202.8h0M491.0 182.1h0M476.4 195.4h0M489.1 172.1h0M369.4 297.7h0M343.3 257.5h0M496.9 178.2h0M547.7 176.6h0M342.8 270.1h0M648.0 243.4h0M502.7 183.0h0M452.5 237.5h0M634.7 234.5h0M423.0 234.1h0M620.6 232.8h0M504.3 179.9h0M621.2 221.9h0M644.4 236.0h0M548.4 177.6h0M687.6 251.2h0M388.9 239.5h0M358.8 262.1h0M625.0 215.4h0M574.0 170.5h0M668.9 251.1h0M556.6 191.9h0M487.0 203.1h0M426.1 253.1h0M380.6 248.3h0M418.7 227.9h0M452.8 226.1h0M493.6 193.3h0M593.4 193.1h0M454.9 240.3h0M453.7 200.4h0M552.8 188.4h0M558.9 189.0h0M564.2 183.7h0M381.5 262.3h0M536.6 183.3h0M557.2 189.3h0M657.6 230.4h0M545.6 180.0h0M435.3 226.2h0M430.5 220.3h0M493.3 196.4h0M405.7 243.1h0M384.1 260.9h0M477.8 209.5h0M607.4 198.5h0M478.3 206.5h0M612.6 219.9h0M664.9 236.7h0M426.4 249.2h0M579.8 189.4h0M472.9 200.7h0M652.1 243.0h0M465.2 200.9h0M524.6 171.2h0M410.9 250.6h0M579.6 198.0h0M530.5 194.2h0M491.3 191.9h0M361.8 262.1h0M629.9 230.4h0M532.9 177.1h0M440.8 229.1h0M436.9 208.8h0M617.7 229.6h0M585.5 203.8h0M377.7 245.5h0M353.1 269.3h0M525.2 186.8h0M629.6 212.6h0M423.4 226.6h0M686.4 254.4h0M353.7 248.6h0M686.5 253.2h0M379.0 294.4h0M569.5 175.8h0M442.9 240.0h0M373.1 271.6h0M685.3 275.1h0M565.9 182.6h0M434.2 214.8h0M368.1 268.1h0M555.1 182.1h0M461.7 212.3h0M668.3 258.0h0M425.4 243.2h0M570.9 197.7h0M518.9 190.0h0M376.7 293.5h0M399.2 251.9h0M506.7 197.4h0M534.2 177.4h0M503.8 164.1h0M352.2 263.6h0M450.4 211.5h0M388.2 235.1h0M383.1 242.3h0M442.0 231.2h0M375.9 242.0h0M581.4 194.2h0M392.5 239.5h0M571.6 185.6h0M395.9 260.9h0M480.4 205.8h0M533.4 186.2h0M533.6 167.4h0M368.5 281.3h0M454.6 234.3h0M664.7 233.9h0M609.4 192.0h0M540.9 176.8h0M379.1 259.1h0M648.5 240.1h0M451.8 198.8h0M373.2 273.6h0M588.3 200.1h0M650.6 215.3h0M450.1 227.1h0M583.8 205.1h0M469.4 199.3h0M633.1 230.3h0M501.1 190.4h0M451.5 201.6h0M519.8 181.0h0M462.9 179.9h0M583.9 178.4h0M607.6 219.0h0M534.8 175.6h0M652.0 243.8h0M622.1 216.0h0M406.7 253.8h0M680.2 273.7h0M525.4 184.7h0M534.3 171.5h0M535.5 177.8h0M369.3 269.8h0M386.6 253.0h0M576.4 179.3h0M583.6 180.4h0M668.2 248.2h0M421.5 236.7h0M614.3 219.5h0M611.2 220.4h0M392.9 222.8h0M603.1 201.3h0M478.8 188.9h0M678.9 253.6h0M615.6 209.4h0M597.5 194.0h0M510.4 186.6h0M650.8 225.2h0M580.8 180.6h0M623.5 222.6h0M525.5 181.7h0M656.4 238.9h0M591.2 179.2h0M390.2 257.1h0M457.4 204.0h0M469.9 180.5h0M690.8 252.8h0M381.1 254.9h0M364.4 250.7h0M430.1 223.4h0M496.5 210.5h0M635.4 238.1h0M536.0 173.0h0M551.6 183.9h0M460.6 238.5h0M595.7 196.4h0M631.0 228.6h0M460.2 210.8h0M382.2 219.9h0M634.0 240.9h0M678.2 253.6h0M345.6 273.5h0M434.6 240.4h0M444.2 223.3h0M576.9 178.6h0M443.9 211.0h0M598.6 196.4h0M504.8 170.4h0M502.3 185.6h0M503.0 189.0h0M556.4 189.3h0M649.9 256.6h0M640.8 235.5h0M399.8 235.2h0M433.7 222.6h0M376.9 217.3h0M339.5 251.0h0M549.8 187.3h0M377.2 269.0h0M660.4 232.1h0M454.4 208.5h0M680.7 259.8h0M546.9 182.1h0M530.4 177.5h0M598.0 223.6h0M374.2 257.2h0M470.0 218.2h0M677.6 251.8h0M427.4 264.9h0M431.1 233.3h0M536.7 172.7h0M669.4 258.9h0M674.0 256.5h0M629.2 216.4h0M343.8 229.8h0M427.8 247.7h0M467.9 196.0h0M589.2 192.7h0M569.3 202.5h0M362.7 286.1h0M585.0 190.8h0M365.0 271.1h0M692.1 260.0h0M619.9 204.9h0M682.2 266.5h0M435.1 216.9h0M521.7 196.4h0M575.5 187.3h0"/><path d="M637.0 215.4h0M639.1 236.9h0M408.1 248.5h0M528.3 178.9h0M541.7 191.9h0M493.5 210.9h0M403.1 232.6h0M489.9 200.6h0M338.3 283.3h0M384.2 272.8h0M428.1 240.4h0M650.8 213.6h0M399.4 280.1h0M550.3 181.5h0M466.9 217.6h0M421.6 237.8h0M546.4 186.5h0M364.0 261.5h0M584.3 198.3h0M493.5 195.6h0M687.9 249.1h0M506.3 193.1h0M395.0 234.3h0M452.5 223.8h0M620.5 218.4h0M560.3 187.4h0M498.4 192.5h0M602.7 202.4h0M575.5 185.8h0M554.9 185.5h0M606.9 196.5h0M581.1 193.3h0M554.0 177.2h0M502.2 189.5h0M532.8 202.5h0M535.3 163.2h0M454.1 214.5h0M599.9 216.0h0M425.4 212.7h0M476.5 157.4h0M671.1 230.7h0M645.5 239.7h0M409.6 221.5h0M360.5 306.6h0M446.2 193.6h0M561.5 186.2h0M667.9 246.1h0M362.7 262.0h0M350.3 258.4h0M524.3 181.7h0M562.2 189.3h0M484.4 217.9h0M678.7 240.4h0M530.0 189.9h0M430.8 228.5h0M426.0 230.9h0M451.3 224.2h0M350.3 249.8h0M443.6 198.5h0M376.1 243.1h0M614.4 202.7h0M487.1 203.0h0M493.2 216.1h0M663.7 242.0h0M598.9 200.5h0M349.8 253.7h0M632.8 217.4h0M448.5 197.7h0M432.3 241.7h0M344.3 251.7h0M458.4 206.1h0M685.1 257.6h0M658.4 240.8h0M485.8 193.6h0M377.0 255.9h0M618.0 196.0h0M618.8 216.5h0M370.3 264.0h0M636.8 234.0h0M420.7 221.3h0M642.0 238.3h0M338.0 270.0h0M686.8 233.8h0M622.3 226.9h0M543.9 195.1h0M667.0 244.0h0M679.9 269.8h0M417.8 251.6h0M452.7 190.4h0M358.7 309.1h0M492.0 218.8h0M513.7 207.4h0M586.9 179.4h0M457.0 206.9h0M484.3 194.7h0M653.0 218.3h0M447.3 227.7h0M541.1 168.9h0M482.4 192.2h0M371.8 259.1h0M448.0 218.1h0M592.2 199.7h0M597.4 196.3h0M594.0 194.7h0M631.0 217.7h0M538.1 175.7h0M477.7 198.2h0M644.8 239.2h0M562.1 189.1h0M431.2 224.2h0M518.4 189.4h0M529.4 183.1h0M508.6 195.6h0M564.0 178.8h0M545.4 182.4h0M337.5 245.1h0M686.0 255.8h0M377.1 252.5h0M416.3 235.9h0M344.4 253.8h0M513.0 190.6h0M473.2 201.8h0M410.3 257.2h0M424.0 234.1h0M452.6 201.5h0M452.5 218.6h0M344.1 276.1h0M512.6 169.2h0M338.3 263.0h0M499.9 210.5h0M410.3 259.1h0M380.8 230.4h0M515.5 177.7h0M450.9 210.9h0M557.1 177.4h0M557.9 172.5h0M471.7 204.2h0M635.1 227.1h0M644.8 236.5h0M610.9 207.8h0M398.4 245.7h0M643.1 237.9h0M628.6 227.2h0M670.2 236.6h0M429.8 209.7h0M420.4 227.2h0M473.0 219.1h0M402.8 267.2h0M385.7 253.0h0M563.9 196.8h0M523.9 190.3h0M411.9 224.1h0M527.4 183.8h0M389.6 266.7h0M364.7 244.3h0M570.6 201.6h0M368.5 267.3h0M525.7 192.7h0M346.8 280.7h0M551.1 187.3h0M365.9 264.7h0M546.8 174.5h0M525.6 168.9h0M478.0 223.6h0M487.8 172.6h0M688.5 248.1h0M611.0 194.6h0M564.2 181.7h0M678.4 271.8h0M414.3 237.1h0M539.5 174.3h0M615.2 215.6h0M415.9 236.2h0M489.1 180.2h0M588.6 191.3h0M692.5 213.9h0M621.8 215.9h0M513.5 197.4h0M671.7 237.0h0M346.5 266.5h0M504.5 176.9h0M374.7 258.1h0M509.4 189.7h0M495.2 192.6h0M461.1 191.5h0M475.4 200.2h0M384.8 279.8h0M682.3 255.0h0M437.3 215.5h0M601.3 210.5h0M512.7 183.2h0M384.5 255.7h0M410.6 234.4h0M474.3 209.8h0M680.7 236.2h0M679.9 258.4h0M565.6 172.2h0M456.2 196.3h0M350.1 283.5h0M544.3 177.7h0M361.0 262.2h0M565.9 177.3h0M438.2 233.3h0M435.3 217.8h0M655.2 240.2h0M510.5 191.6h0M686.1 260.5h0M620.3 221.1h0M364.0 240.2h0M590.7 205.0h0M619.3 231.9h0M464.3 223.4h0M626.8 198.2h0M507.3 188.6h0M429.0 239.3h0M355.0 279.9h0M395.6 268.7h0M644.2 221.5h0M390.9 238.2h0M375.6 262.9h0M431.0 247.5h0M518.3 174.6h0M554.0 195.6h0M548.7 164.7h0M355.2 270.1h0M422.7 228.8h0M386.0 237.1h0M501.0 185.7h0M504.4 196.3h0M528.4 191.5h0M447.2 230.9h0M665.3 218.3h0M687.5 265.8h0M497.3 193.2h0M428.6 228.9h0M386.6 224.4h0M517.3 201.9h0M497.6 183.9h0M374.5 243.4h0M616.7 217.3h0M403.5 241.2h0M341.5 312.2h0M554.6 193.9h0M487.9 204.4h0M666.4 249.4h0M418.2 269.6h0M354.3 268.5h0M475.5 202.7h0M682.9 240.0h0M349.5 284.6h0M520.7 177.3h0M543.5 179.5h0M495.9 179.8h0M583.1 207.6h0M380.1 263.5h0M431.0 230.9h0M563.7 206.7h0M644.7 226.6h0M381.5 266.3h0M505.4 168.5h0M691.4 249.7h0M414.1 237.5h0M383.4 241.7h0M642.3 220.7h0M340.9 309.0h0M430.5 230.7h0M431.3 232.3h0M619.2 211.8h0M656.2 223.4h0M339.4 251.5h0M553.0 170.7h0M521.2 170.8h0M377.8 264.2h0M365.6 289.2h0M375.3 260.3h0M531.6 195.8h0M464.2 221.8h0M422.2 231.2h0M538.4 184.9h0M491.8 183.1h0M542.6 192.4h0M401.7 248.0h0M544.3 176.3h0M590.8 206.2h0M344.5 247.7h0M550.3 180.7h0M629.1 207.1h0M440.0 224.8h0M428.3 212.5h0M416.7 238.7h0M609.4 199.7h0M427.5 231.1h0M634.9 247.8h0M425.5 212.9h0M362.6 260.4h0M641.8 228.8h0M578.8 185.4h0M580.1 199.2h0M394.3 236.2h0M579.4 202.3h0M545.4 185.3h0M428.5 236.1h0M348.5 249.0h0M666.0 232.1h0M534.4 188.4h0M521.3 176.1h0M437.3 189.9h0M510.7 188.9h0M338.1 252.9h0M559.0 187.9h0M518.4 160.3h0M608.4 211.9h0M368.3 290.6h0M549.5 183.5h0M569.3 184.4h0M497.9 188.2h0M634.4 223.1h0M381.6 255.6h0M659.0 233.5h0M588.6 194.1h0M666.1 256.2h0M624.3 207.5h0M368.4 236.0h0M458.7 213.9h0M388.5 274.0h0M340.0 242.3h0M359.9 228.1h0M557.0 175.4h0M648.9 247.0h0M401.9 263.5h0M455.3 219.1h0M353.7 278.8h0M570.8 176.1h0M610.4 192.5h0M364.2 278.4h0M670.2 235.7h0M512.3 196.8h0M398.9 264.4h0M687.2 225.4h0M512.5 177.8h0M453.4 200.9h0M500.9 172.7h0M435.3 204.5h0M418.5 250.0h0M393.4 232.2h0M361.0 265.4h0M433.8 236.1h0M611.8 209.2h0M446.0 229.2h0M646.5 240.6h0M613.7 227.0h0M558.1 187.1h0M508.8 177.9h0M402.4 234.3h0M584.6 198.8h0M640.1 236.8h0M539.4 166.7h0M512.4 181.9h0M473.9 198.6h0M462.3 205.9h0M351.3 302.1h0M569.8 186.4h0M393.6 262.3h0M623.5 211.5h0M568.8 175.5h0M432.4 212.3h0M634.0 207.3h0M635.9 221.8h0M427.8 219.1h0M364.7 272.0h0M648.7 229.5h0M531.2 170.9h0M650.1 245.6h0M581.4 195.3h0M527.4 173.6h0M416.6 240.1h0M575.6 178.0h0M658.0 263.0h0M682.3 250.4h0M374.4 282.3h0M465.1 218.5h0M677.6 258.1h0M608.4 203.2h0M668.5 253.8h0M356.0 283.0h0M361.8 238.4h0M675.5 242.7h0M488.5 184.3h0M553.7 165.1h0M655.6 234.7h0M453.4 233.9h0M567.6 186.9h0M570.2 190.1h0M656.9 241.6h0M466.7 171.2h0M406.7 254.9h0M563.2 194.7h0M600.0 207.5h0M393.3 256.4h0M631.0 194.5h0M618.4 230.7h0M532.0 175.7h0M630.5 228.5h0M575.2 177.4h0M400.7 243.4h0M642.7 240.0h0M615.2 204.6h0M358.3 319.9h0M359.2 259.9h0M675.1 254.7h0M464.8 186.5h0M526.8 192.1h0M561.5 175.4h0M677.7 256.7h0M435.9 207.8h0M387.5 253.3h0M389.3 229.0h0M491.0 191.0h0M358.3 271.9h0M651.8 234.1h0M353.4 257.1h0M429.9 222.4h0M487.2 194.2h0M486.0 182.3h0M480.4 188.1h0M676.2 249.8h0M405.0 262.5h0M462.2 218.5h0M593.8 212.3h0M466.9 209.1h0M667.0 241.5h0M450.2 226.8h0M527.0 178.0h0M483.7 213.3h0M589.1 193.3h0M535.4 189.0h0M592.8 192.5h0M367.8 249.7h0M377.2 266.9h0M402.5 258.1h0M572.7 177.8h0M420.5 264.5h0M424.7 236.7h0M579.9 195.4h0M543.0 180.2h0M577.6 205.7h0M489.7 179.8h0M494.1 180.2h0M369.9 238.3h0M470.1 225.3h0M564.5 197.5h0M644.6 243.1h0M470.0 192.7h0M427.0 243.7h0M411.9 260.2h0M518.4 192.4h0M677.3 274.9h0M673.2 243.3h0M635.4 232.3h0M684.3 254.7h0M648.0 222.2h0M492.5 180.9h0M488.4 202.2h0M435.0 238.1h0M380.6 274.9h0M648.9 223.7h0M441.8 209.5h0M632.7 220.5h0M411.6 232.5h0M453.1 198.4h0M365.8 244.5h0M628.2 222.7h0M409.5 250.6h0M622.7 226.2h0M419.9 235.0h0M366.5 259.8h0M589.2 191.5h0M505.5 185.4h0M671.7 235.7h0M486.8 203.6h0M517.0 201.4h0M543.4 185.1h0M460.7 205.8h0M669.3 254.6h0M636.3 216.0h0M533.8 188.1h0M408.5 272.1h0M395.2 258.7h0M538.2 181.7h0M395.7 252.9h0M569.7 167.1h0M572.0 170.6h0M523.0 204.4h0M511.1 185.5h0M642.4 252.2h0M506.5 190.1h0M414.4 236.8h0M543.9 182.3h0M415.2 238.2h0M582.6 187.1h0"/><path d="M556.9 177.9h0M442.3 185.6h0M580.2 176.1h0M630.7 237.4h0M608.8 202.4h0M660.1 235.7h0M681.8 263.5h0M629.6 219.5h0M578.7 198.8h0M498.9 171.6h0M477.8 203.9h0M529.2 168.0h0M648.0 236.4h0M502.6 186.5h0M371.9 265.8h0M651.0 231.9h0M417.3 256.5h0M578.3 201.0h0M483.2 183.9h0M674.6 240.7h0M517.8 171.6h0M483.7 192.5h0M582.7 202.9h0M667.5 257.5h0M608.0 199.2h0M372.0 257.7h0M370.1 232.2h0M645.3 227.1h0M402.5 249.2h0M508.0 166.1h0M642.5 235.2h0M520.1 189.4h0M595.7 192.5h0M645.6 236.3h0M476.7 192.1h0M509.1 187.6h0M588.4 186.9h0M512.7 194.2h0M341.5 274.5h0M531.4 178.5h0M678.3 253.3h0M410.3 250.2h0M391.7 267.0h0M352.2 247.5h0M433.9 216.8h0M446.2 215.7h0M659.0 232.1h0M549.8 183.1h0M377.4 238.6h0M368.8 259.7h0M532.4 174.9h0M556.3 195.8h0M660.7 235.5h0M403.3 243.2h0M587.5 196.3h0M485.6 190.9h0M437.9 194.0h0M536.3 183.4h0M601.9 204.9h0M557.3 176.1h0M470.7 187.7h0M574.5 190.3h0M397.2 257.3h0M448.6 207.9h0M639.3 240.0h0M675.8 249.8h0M350.6 273.5h0M349.7 258.7h0M608.3 217.1h0M339.8 285.4h0M381.4 254.5h0M504.8 188.9h0M460.4 206.7h0M680.6 236.9h0M637.3 239.8h0M655.5 261.4h0M538.2 174.8h0M451.4 211.7h0M415.6 247.8h0M452.7 228.9h0M610.3 192.8h0M368.4 250.1h0M638.5 212.4h0M422.1 234.6h0M584.8 181.6h0M545.0 188.1h0M387.1 248.4h0M343.0 289.3h0M562.0 171.4h0M454.3 205.4h0M506.9 168.1h0M363.2 267.2h0M518.7 180.9h0M429.6 247.8h0M410.6 248.3h0M466.6 230.8h0M650.3 235.0h0M534.3 173.3h0M340.4 283.2h0M377.3 251.3h0M521.8 167.4h0M440.2 221.5h0M660.8 238.4h0M628.4 218.8h0M651.9 230.3h0M643.2 248.7h0M650.9 256.0h0M425.6 244.3h0M622.4 213.1h0M658.0 227.3h0M623.0 244.9h0M541.1 179.4h0M598.6 197.4h0M514.7 173.7h0M517.9 183.4h0M637.6 236.6h0M638.2 222.7h0M518.7 168.0h0M541.1 179.7h0M495.1 188.6h0M682.1 256.9h0M364.9 282.7h0M428.0 232.2h0M621.4 214.6h0M621.1 222.3h0M668.6 239.4h0M469.5 174.2h0M530.9 186.9h0M579.4 191.3h0M431.4 228.6h0M374.9 266.8h0M677.8 242.8h0M578.5 195.1h0M450.4 232.5h0M524.7 196.2h0M617.2 223.2h0M543.9 177.6h0M382.7 245.3h0M452.9 211.1h0M385.2 237.9h0M422.9 232.4h0M353.2 262.5h0M497.3 204.1h0M383.1 285.8h0M603.7 207.7h0M530.0 173.0h0M690.1 244.9h0M684.3 244.5h0M429.6 240.7h0M487.2 191.1h0M449.5 197.9h0M582.4 177.2h0M402.0 277.2h0M517.3 181.0h0M639.4 241.3h0M616.8 222.6h0M613.5 210.0h0M507.4 181.4h0M432.9 215.1h0M499.4 180.8h0M528.6 164.6h0M437.6 206.8h0M435.0 227.4h0M639.3 234.2h0M664.3 251.7h0M658.8 248.4h0M644.5 268.2h0M445.3 211.1h0M361.0 262.7h0M342.7 281.8h0M427.5 209.4h0M392.3 258.6h0M381.1 255.4h0M380.8 265.5h0M374.0 272.4h0M352.5 233.0h0M623.4 226.9h0M443.9 201.1h0M628.9 225.1h0M676.8 253.3h0M416.0 262.8h0M354.0 249.6h0M370.9 256.7h0M574.2 184.6h0M576.4 190.5h0M412.7 260.8h0M647.1 221.7h0M558.3 173.7h0M359.0 287.0h0M520.4 170.8h0M547.3 166.5h0M526.9 181.3h0M436.1 214.1h0M339.1 258.0h0M522.5 191.3h0M411.7 226.7h0M518.0 171.0h0M500.9 179.8h0M518.4 174.3h0M520.7 163.5h0M616.1 211.3h0M429.4 222.8h0M448.8 205.0h0M442.0 231.4h0M692.1 254.3h0M586.2 185.7h0M666.1 254.0h0M678.2 266.1h0M470.8 218.5h0M451.1 196.2h0M388.6 261.9h0M461.9 194.5h0M502.2 183.3h0M663.2 216.5h0M609.8 213.7h0M339.8 275.1h0M408.6 240.9h0M506.6 190.4h0M384.2 248.6h0M425.1 220.8h0M581.2 190.7h0M635.4 228.7h0M605.5 212.3h0M431.1 219.6h0M584.9 207.9h0M569.6 204.5h0M532.3 186.9h0M487.9 196.5h0M686.0 264.3h0M365.0 282.3h0M682.7 252.8h0M603.7 187.6h0M401.2 250.2h0M533.4 182.5h0M366.1 267.0h0M664.5 250.8h0M618.1 208.6h0M394.0 299.0h0M387.3 236.5h0M372.4 283.8h0M617.8 196.7h0M457.0 203.3h0M352.3 286.0h0M517.6 190.9h0M608.9 211.3h0M412.5 255.2h0M639.8 227.5h0M595.3 194.6h0M351.1 250.5h0M609.2 210.5h0M592.9 195.7h0M352.5 252.9h0M564.9 184.8h0M635.4 225.1h0M656.4 229.6h0M568.8 194.4h0M666.5 236.3h0M610.7 200.2h0M511.5 195.8h0M484.5 198.4h0M456.5 202.7h0M448.2 220.6h0M603.0 212.8h0M638.0 219.9h0M381.9 233.9h0M615.1 211.1h0M475.0 215.7h0M554.0 200.8h0M569.6 184.5h0M540.1 183.5h0M481.2 210.8h0M606.0 197.6h0M539.9 180.2h0M691.6 248.0h0M543.8 175.9h0M369.7 256.6h0M588.1 193.4h0M427.9 209.4h0M510.4 185.3h0M660.8 223.8h0M369.0 262.8h0M559.6 182.2h0M527.3 188.9h0M574.8 192.8h0M645.7 245.5h0M620.1 222.0h0M378.8 292.8h0M459.1 189.2h0M411.6 250.5h0M486.2 200.9h0M588.7 206.5h0M676.2 244.5h0M489.1 192.7h0M486.2 194.2h0M345.4 283.3h0M378.0 284.0h0M443.9 201.2h0M348.1 258.2h0M376.6 253.4h0M370.1 248.4h0M507.5 157.0h0M354.3 314.3h0M401.4 269.4h0M678.9 259.1h0M613.8 221.7h0M464.6 215.7h0M684.8 248.8h0M428.5 211.1h0M492.6 180.4h0M537.9 178.5h0M369.3 223.6h0M479.2 215.2h0M517.2 182.3h0M599.2 185.0h0M472.9 199.6h0M556.7 177.3h0M343.0 264.0h0M462.5 213.9h0M599.8 221.9h0M369.9 267.0h0M675.3 265.8h0M636.2 222.1h0M671.9 224.1h0M349.7 273.1h0M615.0 202.1h0M390.4 234.4h0M366.9 242.5h0M581.7 190.2h0M401.0 215.3h0M427.3 215.4h0M628.8 237.9h0M493.9 186.4h0M486.0 188.7h0M363.8 264.6h0M436.8 236.4h0M466.1 228.5h0M648.6 211.3h0M656.1 228.9h0M590.2 190.0h0M537.9 181.9h0M448.1 216.9h0M563.7 182.5h0M457.9 194.8h0M686.6 261.7h0M690.6 233.4h0M677.2 274.6h0M524.4 175.2h0M617.9 212.0h0M509.9 185.6h0M559.0 164.3h0M584.5 188.9h0M500.6 185.2h0M359.5 284.6h0M472.5 232.9h0M385.4 252.0h0M553.2 183.0h0M418.5 242.9h0M666.4 261.5h0M342.1 255.6h0M510.5 170.8h0M487.1 204.8h0M523.4 181.6h0M456.6 221.5h0M638.0 227.8h0M625.5 223.3h0M514.9 171.5h0M637.3 233.7h0M341.9 268.6h0M512.0 159.6h0M668.3 254.9h0M481.6 191.3h0M605.1 206.3h0M521.9 190.7h0M352.4 294.8h0M405.8 198.9h0M386.6 265.0h0M432.1 230.3h0M667.7 234.8h0M344.0 261.4h0M638.9 238.6h0M373.6 246.7h0M683.7 228.1h0M623.9 230.4h0M414.9 246.8h0M380.7 259.9h0M541.8 194.1h0M383.7 256.2h0M666.6 249.7h0M605.5 181.9h0M685.1 259.3h0M410.8 243.9h0M560.7 189.4h0M548.9 166.4h0M525.6 178.9h0M449.2 198.1h0M355.0 230.8h0M510.2 194.6h0M490.7 206.7h0M635.6 212.8h0M543.4 161.6h0M549.1 196.1h0M457.5 205.7h0M374.1 266.7h0M665.6 242.7h0M669.2 230.3h0M553.2 164.2h0M602.5 198.9h0M365.3 256.7h0M601.5 199.2h0M536.1 181.2h0M431.5 225.3h0M557.2 200.2h0M603.4 209.3h0M497.8 177.9h0M491.0 179.8h0M651.8 252.3h0M443.3 216.2h0M340.1 249.4h0M581.0 192.8h0M691.1 243.0h0M593.0 191.5h0M637.3 245.1h0M387.2 272.3h0M434.8 216.9h0M471.6 187.4h0M442.0 216.5h0M358.7 246.6h0M584.5 183.0h0M478.3 200.1h0M383.3 255.5h0M343.8 243.4h0M418.2 232.8h0M524.2 183.3h0M679.5 252.6h0M652.2 252.2h0M518.0 187.8h0M528.8 187.3h0M671.9 232.9h0M579.7 194.6h0M629.7 219.9h0M450.9 233.2h0M680.9 241.3h0M605.9 197.5h0M615.6 221.1h0M357.9 244.0h0M592.6 195.0h0M458.9 191.8h0M473.0 189.2h0M579.7 197.8h0M524.4 175.8h0M509.4 188.3h0M439.0 212.1h0M476.9 195.4h0M685.2 247.4h0M516.2 180.9h0M347.0 245.9h0M474.4 196.0h0M685.8 251.4h0M546.1 178.7h0M425.0 234.0h0M457.2 204.8h0M509.8 178.9h0M433.6 205.6h0M521.5 175.6h0M604.1 202.6h0M570.8 184.8h0M509.3 185.4h0M462.3 176.5h0M639.6 231.3h0M339.3 285.7h0M630.6 211.8h0M514.3 186.0h0M469.7 205.5h0M560.3 196.7h0M356.7 258.2h0M437.9 252.5h0M441.7 207.7h0M674.3 244.1h0M686.7 260.4h0M398.1 260.4h0M495.5 186.1h0M652.2 253.8h0M362.7 271.6h0M447.5 216.5h0M384.9 244.2h0M595.9 203.9h0M681.2 265.3h0M566.0 184.3h0M384.3 233.7h0M652.0 220.7h0M387.1 275.4h0M585.3 210.6h0M608.4 221.0h0M345.4 271.1h0M599.3 204.7h0M338.3 246.5h0M597.9 214.6h0M467.5 204.1h0M454.3 224.0h0M467.1 173.8h0"/><path d="M415.9 256.8h0M494.6 189.7h0M447.8 209.1h0M504.2 156.7h0M641.3 220.6h0M622.6 224.3h0M682.5 253.8h0M631.5 206.6h0M664.2 257.6h0M475.2 196.0h0M339.8 245.8h0M337.4 256.3h0M690.5 243.8h0M342.9 300.1h0M465.3 209.2h0M576.6 176.6h0M510.9 199.6h0M608.0 218.3h0M507.2 167.8h0M513.1 176.1h0M506.4 168.4h0M598.9 203.6h0M456.4 212.2h0M576.9 181.1h0M471.5 225.7h0M613.8 197.7h0M472.9 193.8h0M552.3 188.8h0M349.3 228.9h0M360.1 253.1h0M654.2 199.6h0M594.4 184.9h0M592.9 198.4h0M379.2 243.8h0M641.2 243.5h0M414.7 225.1h0M514.9 173.1h0M511.4 182.5h0M500.0 202.4h0M684.5 251.4h0M660.3 250.3h0M472.8 220.5h0M549.7 168.1h0M444.2 208.9h0M578.4 179.6h0M512.8 195.7h0M566.1 192.5h0M339.0 258.8h0M655.8 221.3h0M632.6 222.1h0M653.9 210.5h0M476.1 223.4h0M595.7 204.4h0M486.6 184.7h0M467.6 197.1h0M638.8 238.6h0M358.9 295.3h0M536.2 178.9h0M565.7 181.0h0M648.1 253.3h0M473.1 192.9h0M426.4 231.9h0M640.3 221.9h0M565.0 178.0h0M403.2 265.1h0M541.8 180.4h0M403.0 236.7h0M430.7 225.0h0M600.5 193.1h0M603.8 217.6h0M470.8 225.7h0M533.4 183.3h0M543.6 176.2h0M659.9 226.6h0M340.4 284.5h0M482.1 193.4h0M659.9 253.6h0M340.7 247.5h0M559.0 174.0h0M632.6 232.2h0M384.2 265.9h0M426.7 221.3h0M350.6 273.0h0M525.4 185.2h0M671.5 253.2h0M470.0 212.0h0M564.9 177.5h0M390.8 275.6h0M352.9 241.2h0M384.9 245.6h0M354.4 259.6h0M666.5 241.3h0M582.9 197.4h0M357.1 278.8h0M368.5 244.2h0M660.8 260.8h0M605.1 197.9h0M519.0 172.1h0M570.6 178.6h0M634.9 226.3h0M444.3 200.2h0M680.1 262.7h0M459.8 196.0h0M412.0 249.9h0M463.5 208.2h0M507.1 178.4h0M438.3 200.5h0M378.4 247.5h0M510.3 189.3h0M578.3 201.8h0M416.0 242.0h0M454.1 222.2h0M654.7 252.7h0M477.4 184.1h0M499.9 190.9h0M675.4 263.0h0M369.8 254.4h0M637.8 232.7h0M444.5 213.1h0M582.9 192.8h0M520.1 186.3h0M601.9 189.6h0M430.7 228.2h0M354.8 287.3h0M670.5 245.2h0M465.8 190.6h0M364.8 238.4h0M379.1 250.7h0M372.5 254.7h0M618.8 204.5h0M483.6 220.0h0M451.6 210.0h0M528.1 172.1h0M628.1 215.4h0M588.1 198.3h0M516.8 175.4h0M530.6 178.9h0M626.1 219.3h0M496.6 200.8h0M535.2 194.0h0M600.6 202.4h0M662.4 225.1h0M357.2 258.3h0M563.5 189.1h0M415.4 249.1h0M399.3 252.5h0M529.4 170.9h0M341.6 265.4h0M525.1 180.6h0M357.5 270.8h0M391.0 247.4h0M502.1 190.1h0M395.5 249.8h0M452.4 185.0h0M362.8 270.3h0M568.4 185.6h0M606.3 186.5h0M389.7 259.0h0M593.5 215.1h0M639.2 215.5h0M492.5 169.7h0M472.4 200.1h0M428.1 239.9h0M387.3 258.4h0M667.8 241.9h0M683.8 264.2h0M583.0 188.8h0M467.2 206.7h0M440.8 233.3h0M683.2 248.8h0M433.3 253.7h0M364.0 274.3h0M617.5 207.4h0M633.9 220.3h0M489.9 207.1h0M672.9 247.8h0M668.2 232.3h0M596.2 210.4h0M570.3 199.9h0M608.2 210.5h0M406.2 252.8h0M530.8 182.1h0M375.1 271.4h0M691.3 243.6h0M598.3 196.3h0M489.0 196.1h0M553.2 193.4h0M452.7 190.6h0M345.6 249.2h0M567.5 174.9h0M622.9 223.7h0M629.4 208.2h0M381.8 283.4h0M370.9 254.4h0M397.2 243.9h0M670.5 239.3h0M436.5 206.6h0M671.6 250.0h0M445.4 233.0h0M539.7 171.5h0M673.7 264.2h0M531.3 170.5h0M352.9 266.9h0M378.9 285.2h0M566.0 180.7h0M629.9 231.7h0M636.3 226.9h0M527.9 170.8h0M687.8 269.9h0M365.4 253.5h0M657.9 245.7h0M571.6 188.8h0M407.1 247.4h0M396.1 230.1h0M660.3 258.4h0M686.6 254.0h0M622.2 198.1h0M671.0 252.0h0M584.8 201.1h0M587.6 199.5h0M467.4 211.1h0M387.4 273.0h0M506.0 198.8h0M413.1 257.4h0M670.1 260.5h0M566.1 193.1h0M408.0 233.5h0M556.3 175.0h0M403.1 221.8h0M557.1 185.3h0M424.0 218.9h0M356.2 295.4h0M507.3 174.0h0M338.2 257.5h0M375.1 271.5h0M441.0 207.1h0M497.9 192.6h0M632.0 225.7h0M607.4 210.6h0M364.6 278.0h0M450.3 191.2h0M517.2 179.8h0M638.8 243.5h0M352.7 261.7h0M385.1 253.2h0M657.1 233.8h0M356.6 320.2h0M481.9 210.3h0M534.7 176.5h0M456.6 206.2h0M468.5 202.1h0M584.3 177.7h0M401.6 218.5h0M399.4 260.1h0M461.4 175.6h0M346.3 228.9h0M583.1 182.0h0M636.2 230.3h0M371.4 251.0h0M605.9 201.8h0M591.4 192.6h0M609.2 211.8h0M586.5 180.7h0M674.8 241.8h0M424.2 224.0h0M431.8 202.9h0M658.4 228.2h0M544.4 200.1h0M683.2 269.3h0M469.1 189.0h0M500.2 170.8h0M485.3 184.1h0M657.0 242.5h0M388.9 276.5h0M398.0 250.2h0M539.9 182.6h0M557.8 171.1h0M531.4 189.8h0M580.3 198.0h0M344.8 268.9h0M394.2 258.8h0M549.2 177.2h0M471.6 190.6h0M632.3 204.5h0M680.4 264.5h0M688.7 251.8h0M608.5 206.9h0M523.5 189.1h0M637.9 247.7h0M575.7 199.7h0M548.2 173.9h0M481.6 203.4h0M591.8 183.8h0M648.9 241.5h0M368.2 306.1h0M406.1 252.4h0M626.8 214.3h0M341.7 267.1h0M489.7 189.5h0M341.4 256.7h0M439.5 237.3h0M428.5 213.7h0M480.8 181.4h0M438.6 232.3h0M463.6 196.8h0M489.9 192.2h0M603.2 201.7h0M461.4 207.1h0M540.1 181.1h0M536.3 188.2h0M466.9 214.9h0M360.6 297.1h0M659.6 253.2h0M531.1 186.5h0M482.9 179.3h0M450.8 193.5h0M358.7 274.5h0M550.2 197.6h0M605.4 199.8h0M582.7 197.5h0M539.3 184.3h0M459.3 204.3h0M583.1 201.0h0M617.4 207.9h0M376.2 251.7h0M583.9 186.9h0M443.0 222.7h0M594.6 206.1h0M590.6 204.8h0M360.6 254.7h0M624.9 218.7h0M511.2 199.5h0M495.2 197.5h0M603.3 206.4h0M500.8 201.3h0M527.1 169.5h0M686.9 266.9h0M527.1 180.7h0M356.5 269.9h0M543.7 176.9h0M433.7 213.9h0M440.2 230.7h0M398.2 241.2h0M366.0 244.5h0M683.3 260.2h0M437.4 228.8h0M466.9 177.4h0M373.3 263.5h0M541.5 175.6h0M463.6 199.2h0M495.5 204.2h0M507.9 173.1h0M361.8 245.4h0M491.7 207.9h0M476.3 197.5h0M567.7 184.3h0M581.1 198.6h0M641.7 238.4h0M430.6 215.3h0M533.8 178.6h0M476.3 184.5h0M583.6 209.8h0M692.4 247.7h0M467.3 216.3h0M645.6 221.3h0M400.2 269.9h0M530.1 177.9h0M467.6 231.3h0M676.1 239.9h0M533.2 176.9h0M668.3 238.2h0M538.7 165.1h0M557.2 193.2h0M565.0 197.5h0M567.9 181.4h0M524.8 195.5h0M451.2 235.1h0M578.7 189.5h0M636.0 223.1h0M677.0 239.0h0M659.4 234.6h0M515.3 173.2h0M353.5 288.8h0M548.8 170.6h0M503.0 186.8h0M479.6 195.6h0M426.4 221.4h0M553.2 176.8h0M656.4 234.1h0M341.9 264.6h0M634.4 213.9h0M348.0 265.0h0M374.0 299.7h0M354.1 262.3h0M451.7 195.5h0M416.4 243.4h0M566.9 170.1h0M370.6 228.8h0M442.5 227.6h0M413.1 250.4h0M348.1 266.3h0M602.2 197.1h0M626.7 221.3h0M545.9 178.8h0M640.0 219.0h0M488.6 181.8h0M629.8 212.7h0M513.6 180.7h0M504.9 191.5h0M634.0 241.0h0M569.8 195.5h0M609.8 210.0h0M383.9 235.0h0M527.3 180.1h0M454.8 230.7h0M396.5 255.0h0M551.1 167.8h0M377.1 256.3h0M683.6 253.1h0M402.9 219.7h0M593.4 188.1h0M585.6 203.7h0M482.7 208.5h0M503.4 182.3h0M591.6 208.7h0M455.4 232.5h0M652.9 241.0h0M547.3 184.2h0M422.9 225.9h0M594.8 201.7h0M599.5 200.5h0M354.1 254.8h0M544.5 192.3h0M531.9 187.0h0M668.8 254.0h0M631.5 209.2h0M517.8 181.0h0M587.5 198.2h0M574.0 181.5h0M499.1 178.2h0M664.2 239.0h0M675.6 255.3h0M608.1 231.1h0M492.6 171.6h0M392.6 236.9h0M475.1 201.0h0M616.9 214.0h0M412.8 285.0h0M438.3 226.9h0M595.1 193.6h0M434.7 211.4h0M425.0 241.9h0M630.0 246.2h0M393.9 241.2h0M346.5 238.4h0M531.8 185.4h0M678.9 270.2h0M430.2 227.0h0M480.1 208.7h0M604.4 209.7h0M449.8 220.4h0M655.9 252.2h0M566.9 192.8h0M418.8 248.6h0M626.0 210.0h0M649.4 241.5h0M442.9 181.3h0M446.3 227.6h0M529.2 175.6h0M561.0 177.8h0M487.2 201.2h0M595.7 189.6h0M541.1 177.4h0M389.9 241.2h0M466.6 203.7h0M610.8 211.5h0M523.9 166.7h0M360.9 266.3h0M382.0 257.3h0M646.3 230.3h0M518.0 200.5h0M482.4 191.7h0M459.5 187.8h0M501.5 194.0h0M593.4 213.9h0M519.9 180.6h0M601.2 191.1h0M486.8 194.6h0M669.9 262.5h0M535.9 179.0h0M374.0 229.5h0M423.5 221.0h0M612.8 210.8h0M437.6 243.4h0M549.1 181.3h0M636.1 224.1h0M523.5 181.2h0M534.5 187.3h0M600.8 205.0h0M419.5 242.9h0"/><path d="M562.9 172.7h0M595.9 209.2h0M468.1 198.0h0M554.0 179.5h0M567.5 187.1h0M386.6 282.7h0M682.9 223.7h0M575.1 183.0h0M413.6 239.9h0M471.9 185.2h0M583.7 193.8h0M414.9 219.3h0M680.6 263.5h0M666.9 238.3h0M690.6 250.1h0M424.1 241.7h0M511.4 187.9h0M597.7 206.8h0M343.9 248.8h0M589.8 190.2h0M429.3 219.5h0M342.9 261.7h0M644.7 226.1h0M669.6 254.7h0M468.9 196.9h0M483.7 194.1h0M648.6 244.5h0M662.6 221.9h0M419.4 245.4h0M568.6 188.0h0M531.3 170.9h0M415.5 258.7h0M553.5 177.8h0M613.1 214.3h0M402.9 258.2h0M492.7 173.3h0M498.5 189.6h0M584.9 198.4h0M469.2 192.4h0M432.0 221.9h0M395.3 254.1h0M391.6 238.8h0M647.8 239.2h0M393.2 264.1h0M536.3 180.2h0M666.2 242.1h0M587.1 199.5h0M492.6 180.9h0M370.7 259.5h0M438.6 248.2h0M657.6 253.0h0M387.3 227.4h0M487.7 198.7h0M424.3 222.8h0M344.6 242.3h0M412.6 239.0h0M429.4 223.4h0M616.8 209.2h0M647.5 228.8h0M540.2 182.3h0M442.3 235.3h0M536.2 188.1h0M433.8 226.2h0M663.3 261.9h0M462.4 199.0h0M502.7 182.4h0M543.7 176.5h0M530.0 191.7h0M352.8 276.0h0M389.8 267.5h0M531.6 170.1h0M652.1 227.5h0M553.6 182.5h0M647.7 228.6h0M667.9 225.8h0M532.9 171.3h0M491.8 198.4h0M591.0 205.8h0M619.8 225.9h0M673.3 239.7h0M469.6 216.1h0M529.6 181.5h0M612.1 211.1h0M594.3 201.2h0M405.3 261.1h0M385.6 241.4h0M522.5 182.0h0M677.2 242.1h0M357.4 277.5h0M577.9 199.3h0M551.4 186.4h0M353.7 257.5h0M528.4 175.1h0M478.0 208.6h0M651.0 232.2h0M539.1 192.7h0M438.4 230.8h0M444.2 212.2h0M405.8 241.1h0M467.1 186.0h0M379.1 248.2h0M533.1 175.7h0M570.4 189.7h0M628.5 221.9h0M645.9 240.4h0M488.9 197.2h0M633.5 215.0h0M369.6 305.0h0M659.2 255.5h0M682.9 259.1h0M593.9 206.3h0M677.0 245.1h0M658.6 237.2h0M663.6 263.2h0M413.3 223.0h0M541.3 189.4h0M663.6 230.9h0M396.8 259.7h0M434.9 232.3h0M656.0 232.2h0M622.8 209.8h0M337.8 253.5h0M379.2 280.8h0M679.5 222.2h0M436.9 236.3h0M468.1 198.7h0M660.4 249.0h0M439.0 202.2h0M375.4 266.3h0M405.6 260.0h0M540.3 177.8h0M649.2 242.6h0M468.3 205.5h0M533.5 180.1h0M347.9 257.9h0M504.2 184.8h0M557.4 177.2h0M635.5 224.6h0M683.1 264.4h0M682.8 224.0h0M468.1 191.5h0M617.0 211.2h0M397.1 254.7h0M530.9 189.8h0M689.7 254.4h0M475.2 201.2h0M649.1 246.7h0M550.5 186.9h0M635.7 219.5h0M676.0 265.1h0M683.1 241.9h0M568.5 183.4h0M597.0 194.9h0M474.1 184.5h0M592.0 193.5h0M372.8 271.9h0M534.1 183.4h0M443.1 227.9h0M469.5 174.0h0M524.5 193.3h0M532.6 171.3h0M626.8 228.7h0M523.2 172.5h0M403.2 248.0h0M413.0 253.5h0M351.7 269.8h0M485.1 189.9h0M606.1 204.7h0M497.9 180.2h0M619.8 208.1h0M579.0 198.5h0M431.4 239.6h0M602.8 200.0h0M349.3 270.9h0M687.9 261.6h0M668.3 252.6h0M355.4 249.0h0M579.2 195.6h0M615.5 222.0h0M367.3 260.6h0M413.9 254.4h0M557.9 183.3h0M655.3 246.0h0M653.5 243.0h0M546.1 178.0h0M357.3 266.9h0M414.6 237.6h0M516.1 179.9h0M628.1 230.5h0M484.3 195.5h0M554.2 180.9h0M491.7 174.9h0M457.5 199.2h0M667.7 235.9h0M525.5 169.1h0M508.8 176.6h0M512.3 176.2h0M692.4 239.5h0M445.8 178.9h0M626.9 221.8h0M534.3 178.2h0M485.2 201.9h0M488.9 185.1h0M508.2 187.7h0M541.3 190.2h0M589.8 204.3h0M406.8 247.2h0M505.0 188.4h0M577.4 179.7h0M552.5 187.6h0M353.1 282.8h0M666.1 249.8h0M588.4 188.9h0M384.2 261.9h0M567.1 186.7h0M367.6 247.8h0M435.8 217.6h0M479.6 178.4h0M652.8 235.2h0M410.1 247.0h0M653.8 236.4h0M439.1 215.8h0M477.7 196.3h0M665.1 244.9h0M526.2 180.4h0M540.4 182.3h0M669.0 242.0h0M647.9 211.4h0M573.8 195.3h0M544.2 183.1h0M485.3 195.8h0M645.1 237.1h0M574.5 185.7h0M647.6 246.7h0M388.5 248.1h0M659.1 234.1h0M621.9 227.2h0M517.8 178.9h0M451.6 193.0h0M682.1 277.2h0M690.8 267.7h0M572.2 182.3h0M660.2 215.8h0M620.8 226.6h0M438.3 208.3h0M395.6 273.3h0M428.3 232.6h0M660.3 246.7h0M692.0 262.1h0M602.6 194.3h0M581.6 181.8h0M382.7 265.7h0M423.3 226.9h0M571.7 194.3h0M423.2 236.9h0M615.4 233.9h0M668.8 248.3h0M510.8 177.1h0M633.8 228.2h0M508.9 177.4h0M546.8 187.1h0M601.0 204.0h0M574.4 177.9h0M524.9 184.6h0M460.3 225.5h0M612.0 219.3h0M491.9 194.0h0M583.2 176.1h0M624.7 222.2h0M672.3 248.4h0M498.1 191.3h0M372.3 237.4h0M545.9 192.3h0M457.8 220.1h0M471.2 199.2h0M565.2 200.6h0M443.5 217.9h0M622.5 211.0h0M552.2 182.7h0M687.8 235.4h0M584.5 181.7h0M538.9 182.5h0M438.8 213.1h0M628.2 239.9h0M680.5 246.4h0M477.7 186.0h0M588.1 182.4h0M603.2 186.3h0M473.8 200.5h0M614.8 215.7h0M489.4 189.7h0M513.4 184.7h0M656.7 236.0h0M607.2 223.6h0M572.1 182.4h0M577.1 185.8h0M545.2 190.6h0M463.4 203.1h0M659.5 232.9h0M568.4 180.9h0M391.5 268.2h0M502.1 207.1h0M622.5 220.4h0M421.6 252.3h0M622.6 209.1h0M474.0 194.0h0M412.4 249.0h0M448.3 233.9h0M374.5 248.4h0M688.7 263.9h0M474.3 174.2h0M593.7 212.9h0M500.4 180.9h0M391.6 261.9h0M505.3 182.2h0M506.7 181.1h0M398.9 240.3h0M574.1 183.7h0M615.7 204.9h0M365.3 273.0h0M412.6 223.8h0M386.6 237.8h0M684.4 263.8h0M529.0 176.1h0M576.5 185.3h0M594.0 206.7h0M509.6 172.1h0M378.6 268.4h0M504.6 183.8h0M523.8 186.3h0M587.0 184.3h0M575.5 187.3h0M487.2 201.9h0M340.2 258.2h0M539.5 177.2h0M479.2 187.2h0M459.2 209.4h0M644.3 252.7h0M436.6 208.9h0M384.1 250.8h0M598.1 173.3h0M660.8 234.2h0M658.5 240.0h0M625.4 224.9h0M375.8 256.8h0M588.0 190.1h0M356.4 294.3h0M520.6 191.4h0M497.5 207.6h0M417.6 234.7h0M588.3 187.8h0M448.6 224.2h0M418.0 235.0h0M404.5 261.2h0M648.0 223.5h0M625.8 229.5h0M578.5 202.2h0M668.6 270.5h0M635.8 216.5h0M565.5 199.4h0M348.4 244.8h0M530.8 189.7h0M674.3 255.8h0M685.9 228.7h0M459.3 209.1h0M621.3 216.6h0M368.5 246.4h0M362.8 262.8h0M563.6 186.2h0M424.5 223.5h0M611.4 208.5h0M446.4 215.7h0M672.9 247.7h0M497.7 197.4h0M652.5 241.3h0M574.2 180.6h0M347.1 277.3h0M562.8 187.7h0M387.3 289.7h0M403.4 257.8h0M356.7 269.1h0M439.0 224.5h0M543.1 176.5h0M520.5 175.0h0M455.5 205.0h0M559.2 181.5h0M337.4 269.8h0M534.4 177.3h0M404.4 237.8h0M565.2 187.5h0M614.4 227.8h0M499.2 163.8h0M532.7 175.9h0M518.0 188.2h0M683.4 272.4h0M452.1 219.9h0M549.8 179.7h0M513.7 198.4h0M447.6 214.2h0M372.2 262.0h0M660.1 251.5h0M575.4 193.3h0M350.2 272.9h0M679.5 248.6h0M491.5 178.7h0M368.9 251.9h0M517.3 181.9h0M598.5 185.2h0M579.2 196.9h0M518.4 188.9h0M351.7 262.6h0M538.0 176.0h0M432.3 244.5h0M557.9 201.0h0M597.8 191.9h0M647.6 224.8h0M359.8 255.1h0M549.4 185.1h0M477.5 206.8h0M433.0 221.3h0M663.5 241.1h0M470.1 190.0h0M598.3 210.7h0M417.9 258.6h0M624.0 240.0h0M643.8 243.4h0M346.0 282.7h0M628.6 242.3h0M441.1 225.6h0M425.1 214.9h0M581.9 187.8h0M640.0 232.8h0M592.4 198.2h0M580.1 200.4h0M469.3 202.6h0M675.3 264.8h0M371.1 261.5h0M687.5 268.9h0M690.3 273.4h0M386.4 257.7h0M410.9 256.6h0M690.6 266.6h0M680.7 233.2h0M582.3 206.4h0M363.7 274.7h0M685.3 247.5h0M384.3 274.6h0M520.5 174.8h0M402.3 225.0h0M535.1 181.0h0M685.9 224.9h0M384.8 250.2h0M599.3 186.5h0M456.8 193.8h0M501.9 189.6h0M469.4 194.4h0M638.3 220.5h0M342.9 246.4h0M608.9 202.4h0M474.6 205.3h0M386.2 273.7h0M680.8 232.2h0M577.0 194.4h0M691.3 266.8h0M337.6 254.2h0M398.0 259.7h0M435.1 220.8h0M645.7 230.3h0M490.3 194.7h0M523.9 184.7h0M461.5 201.0h0M463.6 206.1h0M517.0 191.9h0M636.2 233.8h0M547.1 189.0h0M366.7 281.6h0M387.8 277.7h0M400.5 251.6h0M436.4 244.0h0M388.9 281.3h0M577.1 192.9h0M544.5 171.8h0M455.8 218.5h0M365.0 242.0h0M587.6 201.7h0M402.5 264.6h0M509.5 174.8h0M453.0 194.0h0M356.7 231.3h0M533.6 185.9h0M557.6 184.2h0M674.7 231.3h0M676.8 249.7h0M387.7 229.3h0M431.4 223.1h0M643.9 217.1h0M612.6 208.1h0M571.2 192.0h0M376.8 248.1h0M480.0 198.0h0"/><path d="M569.9 179.1h0M358.8 247.3h0M655.2 231.1h0M555.1 164.6h0M567.2 196.7h0M563.0 175.5h0M351.5 290.8h0M638.5 231.3h0M474.7 203.8h0M636.5 239.0h0M606.0 211.3h0M411.2 251.8h0M602.4 204.3h0M483.7 220.9h0M406.0 240.9h0M650.0 238.9h0M345.5 248.2h0M351.0 270.6h0M416.2 270.8h0M486.9 192.4h0M647.8 253.5h0M595.5 189.8h0M539.0 166.5h0M551.2 180.3h0M683.3 264.5h0M605.8 225.7h0M494.7 195.3h0M476.4 191.6h0M542.4 186.5h0M638.6 227.0h0M571.0 193.7h0M573.3 184.7h0M653.3 250.8h0M635.9 215.2h0M562.8 179.2h0M521.7 179.3h0M684.7 257.2h0M445.3 215.7h0M422.5 240.4h0M609.6 203.9h0M407.1 226.1h0M381.9 299.0h0M544.1 178.3h0M361.1 293.4h0M578.1 188.9h0M454.3 243.1h0M575.3 209.1h0M562.6 188.1h0M662.4 242.7h0M601.7 200.6h0M472.7 209.5h0M573.3 205.4h0M461.5 223.5h0M358.5 274.4h0M422.4 244.0h0M603.2 206.7h0M432.4 237.8h0M621.5 216.4h0M599.0 194.2h0M387.0 240.4h0M632.0 236.3h0M403.9 240.4h0M367.9 261.2h0M450.1 247.9h0M437.0 219.5h0M618.1 214.4h0M614.5 211.5h0M657.3 242.4h0M625.2 220.2h0M676.6 242.1h0M565.2 208.8h0M585.6 199.1h0M402.8 267.1h0M563.6 177.5h0M347.2 268.4h0M342.2 291.7h0M406.2 267.6h0M386.3 266.4h0M616.2 196.4h0M662.1 248.7h0M682.8 257.4h0M619.6 225.1h0M455.5 221.2h0M560.2 180.8h0M428.3 228.3h0M487.4 184.6h0M594.4 201.6h0M398.9 244.0h0M412.7 245.4h0M592.3 184.0h0M624.5 220.4h0M339.1 280.6h0M462.6 198.6h0M620.0 211.2h0M412.8 222.1h0M416.1 248.6h0M573.3 186.0h0M374.8 264.0h0M569.2 192.4h0M644.2 216.4h0M574.0 191.4h0M549.0 165.0h0M526.3 184.1h0M367.8 274.2h0M376.8 250.4h0M537.5 184.3h0M631.8 221.3h0M633.9 249.0h0M405.6 239.8h0M360.3 257.4h0M415.6 241.1h0M346.4 263.0h0M624.4 233.2h0M363.4 240.3h0M345.7 271.8h0M460.1 198.1h0M586.5 186.5h0M390.7 252.1h0M378.2 252.0h0M350.9 230.5h0M416.7 228.5h0M511.3 182.2h0M515.8 181.8h0M486.3 200.2h0M625.7 228.6h0M625.5 230.1h0M540.2 168.9h0M615.2 232.2h0M691.8 250.6h0M497.4 200.6h0M636.2 216.5h0M520.3 173.4h0M654.1 234.1h0M400.0 257.9h0M424.0 266.9h0M534.7 193.2h0M621.0 204.5h0M417.4 244.6h0M654.1 227.0h0M601.3 208.4h0M646.1 246.7h0M488.1 193.1h0M631.0 216.9h0M507.3 187.9h0M446.1 215.3h0M461.5 228.7h0M559.7 182.3h0M615.1 217.6h0M612.8 207.4h0M399.3 231.7h0M515.6 190.8h0M547.4 167.9h0M561.7 185.6h0M638.2 231.7h0M343.8 259.9h0M586.3 203.5h0M585.1 207.6h0M433.9 200.9h0M425.8 241.7h0M373.8 272.2h0M679.1 238.3h0M357.7 254.9h0M661.6 243.0h0M410.1 272.6h0M433.5 236.8h0M438.4 234.5h0M540.5 178.8h0M384.1 247.0h0M520.6 173.2h0M468.3 211.7h0M395.9 272.7h0M562.8 194.1h0M581.9 185.1h0M407.2 233.5h0M662.3 229.0h0M430.2 225.5h0M471.3 214.8h0M623.2 216.9h0M381.5 248.8h0M420.5 230.1h0M445.3 201.1h0M482.2 207.0h0M643.5 244.6h0M492.6 209.6h0M619.1 209.1h0M655.4 244.2h0M563.7 183.0h0M589.9 185.4h0M677.5 249.7h0M461.6 173.2h0M443.2 236.7h0M653.3 222.0h0M492.2 168.3h0M409.3 265.8h0M396.5 259.1h0M485.8 203.4h0M473.5 198.1h0M458.9 209.5h0M518.0 192.3h0M659.2 245.2h0M569.6 202.7h0M512.9 176.4h0M344.8 283.0h0M636.9 232.9h0M455.2 225.2h0M529.0 191.5h0M503.7 195.2h0M541.3 188.0h0M590.0 199.4h0M632.8 222.2h0M451.6 202.3h0M624.5 224.1h0M494.1 201.7h0M390.0 263.6h0M342.9 277.2h0M497.6 191.8h0M337.5 284.7h0M530.7 194.6h0M685.8 221.0h0M583.2 186.9h0M475.0 207.0h0M619.1 217.3h0M572.8 186.5h0M564.9 190.0h0M667.9 246.8h0M527.2 211.3h0M411.3 254.3h0M667.3 262.6h0M409.6 245.7h0M411.4 252.6h0M417.5 229.9h0M573.0 191.2h0M422.6 233.6h0M397.5 269.8h0M355.5 264.0h0M577.0 190.0h0M354.8 231.5h0M555.8 184.8h0M446.2 204.3h0M451.4 220.9h0M356.4 268.3h0M411.2 251.3h0M455.0 224.9h0M408.3 259.7h0M518.8 177.8h0M600.8 192.9h0M614.7 205.9h0M352.4 266.0h0M583.7 188.0h0M367.0 274.0h0M401.3 265.1h0M638.6 220.4h0M637.6 228.0h0M652.6 245.4h0M421.5 208.3h0M502.9 171.9h0M488.3 215.7h0M666.9 238.9h0M588.7 196.2h0M345.0 266.2h0M665.6 219.0h0M677.8 244.5h0M421.7 247.6h0M401.0 247.9h0M434.1 257.2h0M462.6 205.8h0M508.7 192.5h0M656.5 219.2h0M466.1 206.5h0M669.4 261.1h0M555.3 186.3h0M517.7 177.3h0M663.4 223.0h0M624.5 210.9h0M494.7 183.7h0M493.6 174.9h0M522.3 188.3h0M688.2 228.0h0M468.0 196.9h0M640.2 216.6h0M422.8 224.0h0M622.9 219.7h0M589.9 200.7h0M387.7 256.2h0M547.5 182.0h0M365.5 249.1h0M545.5 173.8h0M433.6 215.8h0M460.6 210.2h0M473.0 223.8h0M591.0 190.6h0M436.7 220.4h0M575.7 201.7h0M392.0 229.4h0M429.5 236.7h0M474.7 205.2h0M592.7 208.7h0M389.1 245.4h0M471.2 208.6h0M541.6 185.6h0M515.7 185.9h0M656.0 247.2h0M561.5 178.1h0M443.7 210.9h0M608.1 222.6h0M677.3 253.4h0M563.2 186.8h0M616.4 214.5h0M403.2 230.5h0M577.4 195.6h0M439.7 208.2h0M503.8 165.0h0M478.2 189.2h0M581.6 175.2h0M667.1 251.6h0M426.3 196.4h0M576.6 190.5h0M458.7 214.8h0M673.6 246.7h0M666.9 255.3h0M686.5 254.7h0M630.1 212.6h0M360.6 269.4h0M456.3 210.5h0M423.1 244.8h0M640.0 219.8h0M510.8 177.3h0M354.2 274.3h0M499.0 215.6h0M668.6 236.3h0M372.1 235.0h0M392.1 266.0h0M360.5 264.8h0M600.5 207.0h0M590.7 199.7h0M587.2 194.7h0M619.5 217.6h0M685.7 258.6h0M618.4 221.1h0M571.5 189.8h0M398.1 243.7h0M369.9 266.2h0M509.5 165.3h0M338.7 251.5h0M463.5 220.4h0M396.1 262.0h0M455.0 228.9h0M575.0 186.4h0M552.7 185.5h0M682.3 270.7h0M369.1 271.3h0M408.9 234.3h0M570.3 190.1h0M407.4 239.6h0M515.4 185.5h0M689.4 269.4h0M346.4 252.0h0M396.5 257.3h0M546.6 189.8h0M535.9 176.8h0M586.0 209.1h0M455.8 183.6h0M400.3 270.9h0M651.2 228.1h0M389.5 257.3h0M384.2 250.1h0M380.4 248.9h0M571.1 194.1h0M670.8 232.5h0M483.4 202.6h0M473.4 201.2h0M428.2 231.8h0M594.4 203.4h0M494.1 174.4h0M483.4 199.2h0M692.1 264.5h0M546.3 172.0h0M512.5 190.0h0M441.8 206.6h0M656.8 245.5h0M654.1 234.8h0M416.3 256.7h0M676.1 259.9h0M341.6 275.7h0M501.2 184.9h0M391.2 255.2h0M515.1 174.2h0M356.5 265.2h0M452.6 208.8h0M550.5 184.3h0M415.5 218.3h0M342.4 255.3h0M514.3 169.0h0M582.8 178.1h0M635.2 222.1h0M626.6 213.9h0M606.1 184.6h0M354.6 265.8h0M660.1 231.6h0M620.7 226.9h0M396.7 249.4h0M350.2 261.6h0M677.3 254.1h0M380.1 277.6h0M668.8 221.1h0M434.1 224.4h0M502.0 186.6h0M588.8 207.9h0M541.2 173.9h0M676.0 245.2h0M344.2 274.0h0M683.3 269.1h0M638.7 229.3h0M499.7 213.5h0M540.4 173.0h0M650.1 222.4h0M656.9 229.0h0M449.6 238.8h0M580.5 198.1h0M444.1 233.2h0M691.0 248.3h0M679.4 240.8h0M378.4 259.1h0M343.4 239.0h0M500.8 220.3h0M372.8 312.0h0M563.3 180.4h0M669.6 245.6h0M541.4 175.3h0M392.0 246.4h0M453.2 220.4h0M513.7 184.0h0M476.2 200.2h0M410.6 236.3h0M523.3 177.9h0M410.8 232.5h0M381.8 248.8h0M620.7 224.3h0M422.7 222.1h0M410.9 266.6h0M351.0 302.0h0M449.7 208.9h0M438.1 212.9h0M617.0 215.8h0M652.1 234.0h0M636.0 215.8h0M670.3 254.8h0M398.7 274.9h0M688.0 258.2h0M600.8 194.0h0M441.6 234.1h0M364.1 271.3h0M499.7 195.9h0M431.9 212.2h0M412.7 226.6h0M658.6 235.2h0M398.3 235.8h0M471.3 205.2h0M403.5 235.4h0M406.3 261.5h0M451.3 181.4h0M508.9 180.1h0M460.4 222.5h0M459.7 211.4h0M378.5 239.3h0M462.2 209.6h0M598.7 199.7h0M354.8 258.4h0M524.2 171.6h0M418.8 226.9h0M459.8 205.5h0M525.4 171.7h0M418.5 227.0h0M338.3 246.8h0M605.6 216.0h0M672.4 212.1h0M587.0 187.8h0M587.5 196.5h0M486.2 191.8h0M552.6 185.4h0M590.0 197.0h0M410.2 236.4h0M563.9 197.0h0M667.1 263.3h0M561.7 183.4h0M609.8 222.1h0M460.0 197.6h0M660.4 227.8h0M613.3 205.4h0M653.7 224.3h0M551.6 178.6h0M375.5 248.5h0M535.7 183.8h0M416.0 280.8h0M655.8 234.9h0M542.5 185.1h0M451.9 230.4h0M373.2 260.3h0M447.5 226.8h0M525.0 187.6h0"/><path d="M449.6 207.3h0M628.8 211.5h0M578.8 189.4h0M347.8 295.8h0M421.0 272.7h0M527.7 184.4h0M636.5 232.1h0M657.3 239.5h0M344.7 252.5h0M474.1 180.4h0M653.8 239.3h0M437.2 206.3h0M393.9 272.8h0M523.9 186.2h0M404.0 242.9h0M444.7 216.4h0M575.2 195.0h0M384.9 274.7h0M651.0 242.6h0M663.8 269.7h0M680.4 248.5h0M362.2 290.1h0M683.0 252.0h0M386.5 252.5h0M374.8 240.4h0M617.9 234.6h0M453.3 212.7h0M531.0 179.1h0M475.7 224.3h0M571.2 196.2h0M691.4 243.0h0M382.6 242.0h0M506.6 195.5h0M564.2 178.3h0M500.8 185.8h0M415.0 242.9h0M403.5 253.7h0M606.0 208.6h0M691.3 246.9h0M411.8 217.5h0M639.4 212.6h0M421.9 255.6h0M443.6 208.4h0M429.2 227.8h0M595.7 206.5h0M570.1 163.5h0M462.0 190.2h0M548.0 183.0h0M663.5 213.7h0M507.2 174.1h0M496.0 199.0h0M509.0 185.8h0M341.4 252.9h0M432.4 229.4h0M651.7 241.5h0M546.3 178.6h0M510.3 191.8h0M527.3 183.0h0M488.5 189.3h0M555.3 181.1h0M554.7 186.3h0M669.5 261.2h0M654.2 227.0h0M603.9 197.6h0M498.7 185.1h0M534.7 172.1h0M598.2 190.7h0M473.9 192.6h0M461.8 199.2h0M494.1 180.4h0M472.0 197.6h0M649.5 251.0h0M406.6 236.7h0M563.8 176.3h0M573.2 187.1h0M466.5 205.8h0M522.6 166.6h0M571.1 173.2h0M569.6 177.9h0M383.4 283.4h0M652.1 223.5h0M583.4 193.5h0M530.3 184.8h0M360.0 262.5h0M548.8 181.8h0M692.3 264.8h0M525.5 178.4h0M417.5 253.3h0M427.0 257.2h0M598.6 221.3h0M465.2 231.6h0M653.7 257.6h0M371.1 277.5h0M687.5 241.6h0M493.9 189.0h0M542.2 180.7h0M422.2 243.2h0M651.3 230.5h0M455.9 217.4h0M669.2 227.7h0M541.8 176.0h0M420.8 245.6h0M374.0 256.9h0M629.9 231.9h0M339.7 241.9h0M393.6 253.2h0M583.9 197.0h0M397.6 279.5h0M649.7 233.5h0M390.8 261.9h0M409.9 254.4h0M682.5 261.0h0M470.5 186.5h0M363.6 281.8h0M368.5 273.7h0M399.4 241.3h0M402.6 247.7h0M479.1 165.7h0M590.4 190.6h0M449.3 216.5h0M457.9 209.2h0M369.6 294.8h0M474.7 200.3h0M679.9 249.1h0M556.0 179.4h0M409.6 237.3h0M637.2 229.6h0M627.9 221.1h0M408.4 265.6h0M371.2 273.2h0M636.3 232.2h0M388.8 245.4h0M519.7 181.5h0M587.8 192.7h0M381.2 252.0h0M366.1 270.4h0M527.5 174.5h0M658.7 264.7h0M595.5 186.5h0M455.6 209.2h0M504.1 175.4h0M495.4 186.2h0M640.3 248.4h0M642.6 229.9h0M445.8 224.7h0M515.1 185.4h0M609.2 206.7h0M614.3 189.7h0M443.5 232.2h0M454.6 216.1h0M646.6 245.7h0M612.5 204.1h0M595.8 190.0h0M676.2 249.4h0M620.9 188.7h0M390.2 236.2h0M610.9 201.6h0M382.4 253.9h0M544.0 184.0h0M656.8 233.8h0M688.2 260.1h0M509.8 196.0h0M456.7 217.2h0M672.1 255.3h0M636.0 239.5h0M514.8 178.9h0M359.2 245.1h0M690.5 262.7h0M360.2 260.1h0M682.9 249.8h0M409.1 238.3h0M410.5 225.1h0M501.5 180.7h0M478.2 202.2h0M359.8 252.2h0M530.0 157.7h0M479.4 191.5h0M600.1 202.4h0M583.1 199.6h0M380.9 269.2h0M586.6 212.8h0M360.3 266.2h0M634.4 230.7h0M590.3 207.1h0M671.2 253.2h0M591.8 193.7h0M490.2 198.6h0M670.8 259.4h0M344.2 254.5h0M651.1 221.9h0M506.3 185.1h0M375.8 295.8h0M582.2 191.4h0M397.0 257.5h0M639.6 243.4h0M389.7 288.3h0M667.4 262.0h0M527.3 184.8h0M549.5 186.4h0M690.5 250.7h0M539.9 182.4h0M691.9 245.7h0M593.5 192.2h0M649.8 237.0h0M536.5 197.4h0M603.6 203.9h0M594.0 207.5h0M591.5 212.3h0M372.0 269.1h0M415.1 244.0h0M609.1 210.5h0M468.4 184.6h0M670.9 253.1h0M494.1 196.8h0M430.0 226.5h0M601.7 185.9h0M452.3 202.3h0M532.5 176.5h0M526.1 190.7h0M626.2 237.4h0M613.8 218.2h0M603.8 209.2h0M624.5 200.7h0M488.9 175.4h0M417.9 226.8h0M472.7 203.3h0M615.5 205.9h0M548.2 192.9h0M345.0 231.1h0M567.6 185.0h0M640.0 205.6h0M351.1 225.0h0M488.5 199.5h0M441.9 240.1h0M573.7 187.4h0M555.7 181.2h0M454.3 211.0h0M562.0 196.5h0M413.3 240.9h0M356.9 257.0h0M652.9 262.4h0M691.0 240.6h0M600.8 192.7h0M527.6 175.9h0M672.8 261.5h0M409.0 242.3h0M528.5 166.1h0M665.2 254.4h0M557.7 192.2h0M383.1 268.7h0M528.2 186.1h0M503.6 171.8h0M393.5 286.0h0M511.0 175.1h0M355.9 255.8h0M478.6 187.7h0M471.8 201.0h0M568.6 191.1h0M521.6 167.2h0M516.1 189.0h0M394.8 250.7h0M574.2 199.5h0M562.6 184.2h0M610.0 200.0h0M544.6 180.4h0M559.9 188.1h0M638.6 248.6h0M629.9 216.6h0M547.1 181.0h0M643.7 241.6h0M434.5 207.1h0M343.6 262.5h0M376.9 270.0h0M616.5 231.3h0M368.4 290.8h0M396.3 296.3h0M621.7 198.9h0M599.3 192.5h0M371.9 265.0h0M352.1 238.6h0M672.4 245.3h0M523.9 190.9h0M534.8 177.1h0M640.8 228.3h0M523.4 189.9h0M404.6 260.0h0M490.8 188.3h0M394.8 228.9h0M439.6 239.2h0M403.3 245.0h0M554.1 182.1h0M571.4 190.8h0M377.2 277.3h0M681.0 266.8h0M361.8 262.7h0M358.1 254.4h0M343.2 289.8h0M659.9 243.7h0M341.9 263.1h0M482.1 199.6h0M451.8 221.2h0M374.5 292.0h0M562.2 192.0h0M383.3 278.2h0M407.3 259.8h0M497.7 187.8h0M572.3 198.6h0M378.7 259.3h0M575.1 184.2h0M474.2 186.2h0M628.9 234.8h0M530.7 184.6h0M663.7 245.3h0M473.5 192.4h0M549.2 178.7h0M690.3 258.3h0M498.9 191.8h0M342.7 268.1h0M661.2 251.6h0M673.3 261.1h0M610.4 202.8h0M576.9 185.6h0M624.2 221.0h0M483.6 204.1h0M550.1 189.8h0M432.3 214.6h0M595.3 202.3h0M340.7 266.6h0M542.3 171.9h0M534.2 175.5h0M404.1 254.2h0M480.8 212.8h0M514.8 191.9h0M601.9 198.6h0M358.9 257.8h0M407.9 246.7h0M404.4 242.1h0M669.5 251.9h0M444.2 216.1h0M468.6 208.2h0M616.1 192.6h0M556.8 177.7h0M566.3 171.2h0M497.2 197.9h0M386.9 261.3h0M357.9 295.3h0M401.5 234.5h0M502.9 174.8h0M569.3 176.8h0M351.1 273.6h0M483.8 211.1h0M458.5 206.1h0M558.9 192.8h0M485.3 192.9h0M629.4 227.1h0M575.0 183.8h0M443.5 203.0h0M466.3 222.6h0M662.5 217.3h0M383.2 260.8h0M481.1 220.4h0M653.7 242.5h0M510.1 158.0h0M474.8 207.7h0M446.1 235.0h0M622.6 236.0h0M524.7 178.5h0M575.1 172.5h0M375.8 242.4h0M506.4 168.4h0M489.2 188.3h0M417.4 231.9h0M579.2 194.9h0M573.7 188.2h0M516.3 187.7h0M445.8 218.4h0M583.5 198.7h0M557.9 189.2h0M605.7 225.3h0M405.3 247.3h0M536.2 171.4h0M549.7 174.3h0M473.4 202.6h0M647.9 251.5h0M579.9 178.8h0M427.5 200.4h0M541.7 186.0h0M337.7 240.0h0M519.0 184.3h0M477.3 191.8h0M686.7 237.7h0M549.7 184.0h0M639.5 205.6h0M588.0 200.7h0M480.0 190.3h0M355.7 254.2h0M509.9 192.1h0M637.1 230.3h0M682.4 255.5h0M462.9 213.6h0M497.5 201.1h0M393.2 278.5h0M529.1 178.6h0M378.6 285.3h0M513.0 183.9h0M406.0 245.5h0M363.0 276.9h0M423.4 215.9h0M657.3 246.0h0M596.9 210.4h0M551.0 183.6h0M402.8 251.4h0M673.6 257.7h0M354.3 254.8h0M563.0 190.3h0M664.0 266.9h0M615.4 216.0h0M633.1 205.8h0M472.3 201.5h0M584.3 191.9h0M495.5 209.1h0M498.3 186.2h0M588.7 184.8h0M340.2 249.0h0M417.2 238.3h0M663.1 261.3h0M560.8 184.6h0M389.2 234.4h0M428.1 209.4h0M486.4 184.9h0M584.4 189.4h0M397.4 264.9h0M484.5 190.4h0M668.0 243.5h0M340.3 257.8h0M670.8 236.1h0M439.2 241.2h0M471.8 205.1h0M628.2 215.8h0M572.3 179.8h0M579.6 188.0h0M569.7 191.8h0M539.7 184.9h0M490.5 194.1h0M369.3 247.5h0M442.4 217.0h0M604.2 205.4h0M549.6 177.8h0M690.3 223.5h0M420.0 211.3h0M415.9 235.5h0M394.1 264.6h0M427.9 204.2h0M612.0 210.7h0M351.4 264.5h0M431.9 206.8h0M339.7 265.5h0M427.6 224.9h0M445.4 225.8h0M662.9 213.6h0M639.4 236.4h0M357.2 248.8h0M420.8 241.3h0M385.2 263.7h0M450.8 223.6h0M641.5 233.5h0M423.3 206.3h0M342.8 258.4h0M595.9 197.9h0M654.0 237.1h0M620.1 237.7h0M542.5 193.2h0M563.1 185.1h0M588.1 197.6h0M590.9 197.9h0M541.6 182.3h0M446.8 200.3h0M538.4 194.1h0M379.2 251.8h0M539.3 167.1h0M676.4 231.9h0M357.2 266.8h0M444.3 213.1h0M519.1 191.3h0M378.1 257.8h0M427.0 226.9h0M545.4 188.1h0M625.1 221.0h0M597.4 197.1h0M604.1 209.7h0M646.4 244.1h0M532.0 184.6h0M583.8 197.9h0M553.9 197.1h0M621.3 232.2h0M575.7 184.8h0M443.1 216.7h0M625.5 230.1h0M549.2 177.7h0M521.1 201.4h0"/><path d="M685.4 241.1h0M459.9 190.6h0M689.9 234.4h0M480.8 199.6h0M523.3 184.9h0M484.3 205.7h0M601.5 207.3h0M566.2 190.4h0M505.7 186.7h0M494.7 188.5h0M632.9 225.2h0M520.9 172.7h0M478.5 203.5h0M418.5 238.7h0M647.5 237.7h0M535.7 186.4h0M585.2 189.2h0M458.7 199.7h0M341.9 264.7h0M441.0 206.9h0M411.0 235.8h0M453.1 212.4h0M374.7 268.8h0M453.9 226.0h0M375.4 264.8h0M484.1 192.6h0M441.5 230.0h0M494.2 193.6h0M582.4 191.8h0M657.5 251.1h0M563.0 179.0h0M616.7 216.3h0M668.2 248.0h0M470.3 226.8h0M507.6 192.2h0M422.9 236.6h0M409.4 263.7h0M450.7 183.9h0M622.5 213.4h0M406.5 268.3h0M660.6 224.9h0M619.7 214.5h0M523.5 166.5h0M506.0 186.1h0M542.3 178.8h0M416.7 248.3h0M682.7 251.0h0M404.0 247.2h0M544.7 155.0h0M658.5 237.8h0M362.6 280.9h0M602.6 178.7h0M676.3 237.3h0M580.9 199.9h0M620.6 212.4h0M457.3 185.7h0M620.1 194.2h0M452.5 192.8h0M557.7 192.3h0M585.3 182.2h0M389.1 264.0h0M569.1 192.8h0M348.9 257.3h0M406.1 241.5h0M436.0 202.1h0M674.0 243.7h0M418.6 264.3h0M547.1 189.3h0M664.1 242.5h0M466.1 198.4h0M415.3 229.6h0M643.6 234.9h0M655.9 256.5h0M679.5 297.6h0M474.3 221.6h0M598.5 185.7h0M466.4 190.0h0M458.0 192.8h0M506.3 190.2h0M620.2 219.5h0M447.0 211.4h0M590.1 187.2h0M438.8 238.4h0M428.7 240.8h0M410.0 228.2h0M654.0 241.0h0M585.1 184.8h0M550.6 184.7h0M383.4 251.6h0M671.4 263.6h0M551.0 186.8h0M620.4 243.0h0M416.5 237.4h0M608.3 210.2h0M414.9 252.7h0M613.3 197.3h0M538.1 180.0h0M548.7 183.2h0M342.0 234.8h0M387.2 253.0h0M492.7 184.9h0M409.0 243.4h0M554.4 184.4h0M415.8 248.4h0M670.5 252.5h0M541.1 177.7h0M483.5 204.8h0M568.6 187.7h0M344.2 275.0h0M461.0 204.7h0M674.8 254.4h0M505.3 189.6h0M448.7 207.1h0M675.1 264.5h0M484.9 206.2h0M640.5 232.9h0M491.1 199.9h0M417.9 243.2h0M462.0 199.0h0M593.0 210.8h0M353.2 283.0h0M648.7 251.9h0M617.7 221.6h0M364.1 288.2h0M577.4 192.7h0M637.2 249.0h0M503.4 182.1h0M654.9 209.1h0M567.5 180.1h0M580.3 185.6h0M387.3 250.0h0M370.0 264.1h0M574.8 183.4h0M674.7 254.0h0M440.6 204.5h0M402.9 245.0h0M690.6 256.7h0M443.8 188.5h0M661.2 265.3h0M400.6 231.7h0M392.7 260.5h0M586.7 196.6h0M355.3 248.8h0M596.3 202.4h0M353.8 255.3h0M442.8 183.9h0M480.8 196.7h0M638.3 218.6h0M691.6 258.0h0M389.3 275.0h0M535.6 162.1h0M595.8 215.7h0M690.1 263.9h0M473.3 180.2h0M573.7 194.4h0M664.9 251.4h0M685.8 260.7h0M481.3 209.5h0M557.8 177.6h0M650.2 230.6h0M497.3 191.4h0M685.9 232.3h0M520.5 167.8h0M418.9 224.9h0M353.3 273.0h0M603.9 191.7h0M621.9 224.0h0M565.0 201.8h0M673.1 224.5h0M357.5 252.4h0M396.2 231.8h0M474.5 194.8h0M362.9 268.1h0M653.4 234.5h0M420.2 231.9h0M421.3 217.5h0M454.1 212.4h0M436.1 240.2h0M530.7 179.4h0M585.1 198.2h0M430.3 242.0h0M430.6 223.8h0M592.7 205.2h0M598.1 196.3h0M455.2 221.5h0M350.3 261.0h0M338.7 239.3h0M439.1 216.4h0M484.5 186.1h0M404.7 257.1h0M530.9 179.2h0M650.6 233.6h0M429.5 219.3h0M576.7 190.4h0M481.7 186.4h0M518.0 177.1h0M368.1 281.9h0M455.0 209.3h0M638.4 222.9h0M488.1 213.3h0M378.8 248.7h0M408.9 240.3h0M689.3 268.1h0M624.5 214.4h0M575.5 187.5h0M544.0 184.7h0M405.1 248.8h0M415.5 221.2h0M613.5 223.2h0M682.2 250.0h0M497.2 200.9h0M462.6 208.2h0M663.6 211.3h0M395.1 247.5h0M473.6 205.2h0M590.2 196.8h0M349.0 264.7h0M664.8 256.5h0M421.2 259.4h0M585.0 194.1h0M386.6 288.5h0M670.2 236.3h0M630.2 206.6h0M381.4 251.7h0M566.2 180.9h0M448.6 224.0h0M366.1 274.4h0M340.6 236.4h0M519.7 193.4h0M396.7 255.2h0M679.0 245.4h0M430.5 243.7h0M658.8 250.4h0M417.6 239.8h0M602.7 191.4h0M453.8 229.8h0M382.1 252.1h0M391.5 256.4h0M523.2 175.3h0M401.2 245.4h0M522.7 171.1h0M575.8 192.5h0M387.4 262.5h0M620.0 216.4h0M587.1 199.5h0M446.8 225.3h0M665.5 227.4h0M367.8 278.0h0M352.0 265.9h0M496.2 204.9h0M647.4 241.7h0M691.9 237.0h0M678.7 256.1h0M479.4 194.6h0M389.0 242.1h0M370.1 250.6h0M365.6 242.2h0M481.7 200.5h0M505.1 174.8h0M589.0 185.3h0M484.9 206.4h0M351.8 294.7h0M410.5 252.4h0M558.4 193.9h0M372.8 241.8h0M581.5 190.7h0M363.6 261.0h0M474.1 191.4h0M381.5 272.0h0M626.2 207.8h0M520.4 188.8h0M365.3 274.7h0M372.4 261.4h0M475.7 200.0h0M352.1 266.9h0M348.9 216.4h0M466.6 213.9h0M447.6 213.9h0M688.4 265.6h0M575.7 185.0h0M619.7 215.4h0M470.3 203.5h0M583.6 202.3h0M483.4 193.1h0M472.7 199.6h0M661.9 240.9h0M676.6 252.6h0M448.9 214.9h0M389.2 259.6h0M531.4 162.8h0M673.0 250.6h0M473.7 209.1h0M497.8 196.3h0M604.3 226.4h0M439.8 222.8h0M477.9 208.7h0M570.0 190.4h0M366.1 226.5h0M406.8 221.1h0M499.9 205.6h0M593.0 203.1h0M471.4 190.3h0M613.3 191.3h0M433.6 190.8h0M676.3 224.1h0M565.3 186.8h0M537.7 182.0h0M437.1 218.6h0M510.7 186.3h0M614.6 206.5h0M368.7 252.7h0M591.6 205.6h0M523.2 189.4h0M473.8 186.0h0M522.5 166.7h0M445.3 233.7h0M401.5 250.2h0M625.2 227.8h0M581.5 192.1h0M655.5 250.8h0M679.0 257.2h0M358.0 306.4h0M692.4 240.7h0M348.4 302.7h0M582.1 206.8h0M540.8 173.0h0M392.7 257.3h0M645.5 260.6h0M416.0 229.2h0M445.1 231.8h0M413.2 247.7h0M562.3 181.3h0M481.6 173.7h0M602.5 208.1h0M612.7 229.6h0M619.2 217.5h0M337.5 263.2h0M646.5 252.1h0M529.1 183.3h0M429.7 225.2h0M629.0 224.3h0M539.7 174.2h0M493.1 189.9h0M450.7 199.9h0M608.2 205.2h0M591.3 188.9h0M430.6 219.1h0M459.6 208.2h0M486.1 203.1h0M462.3 212.5h0M453.6 183.0h0M639.4 228.1h0M442.4 222.9h0M652.2 240.6h0M607.5 206.3h0M480.0 172.1h0M398.2 266.2h0M610.4 215.2h0M367.6 257.0h0M413.5 244.7h0M534.1 168.0h0M451.2 187.0h0M419.9 246.4h0M349.7 265.9h0M337.8 275.9h0M499.7 196.3h0M659.7 235.8h0M389.2 255.9h0M586.4 209.4h0M420.7 233.7h0M460.1 195.1h0M437.8 228.1h0M392.3 290.0h0M684.1 257.8h0M685.1 238.5h0M410.8 261.0h0M377.3 276.2h0M621.0 216.9h0M524.9 181.8h0M529.6 190.5h0M406.8 215.6h0M496.5 197.3h0M689.4 253.7h0M664.0 237.2h0M583.5 187.5h0M571.4 189.4h0M405.0 240.2h0M484.4 197.0h0M681.3 239.5h0M557.2 177.0h0M570.1 181.4h0M412.9 235.5h0M552.9 197.3h0M510.9 174.9h0M442.2 215.6h0M513.9 180.9h0M615.9 217.7h0M408.5 244.6h0M507.9 164.3h0M375.5 236.2h0M383.1 231.6h0M347.5 264.2h0M472.6 198.6h0M401.0 235.3h0M362.6 264.2h0M528.7 169.9h0M580.3 191.9h0M467.2 191.7h0M664.1 261.7h0M501.2 195.2h0M526.8 180.5h0M445.4 247.6h0M451.3 238.1h0M632.4 233.0h0M355.2 271.5h0M347.5 273.2h0M514.3 191.6h0M516.1 169.6h0M685.5 249.9h0M431.8 238.6h0M551.6 177.1h0M512.4 184.1h0M680.9 264.9h0M644.0 220.8h0M510.2 168.4h0M409.1 246.0h0M548.3 173.7h0M514.1 182.4h0M400.6 245.8h0M496.2 185.0h0M357.1 256.2h0M630.3 221.8h0M343.7 265.6h0M676.7 240.7h0M454.2 223.0h0M423.9 251.2h0M626.4 212.0h0M547.5 181.7h0M416.6 239.3h0M421.8 241.9h0M415.1 249.8h0M497.1 198.4h0M548.7 168.7h0M555.5 178.4h0M504.7 189.1h0M435.0 218.5h0M341.6 291.8h0M482.3 183.6h0M637.0 203.2h0M657.8 229.1h0M455.1 208.4h0M677.3 263.7h0M503.8 184.3h0M474.1 203.0h0M666.3 225.2h0M656.2 249.2h0M670.6 246.4h0M443.9 201.7h0M671.7 255.2h0M357.2 239.6h0M567.8 184.5h0M453.4 205.2h0M499.0 187.6h0M391.4 262.8h0M499.9 206.5h0M485.6 196.4h0M436.4 223.7h0M550.2 188.5h0M591.6 184.1h0M541.0 185.9h0M625.8 217.6h0M345.9 236.0h0M462.2 224.4h0M395.6 274.5h0M665.8 241.0h0M585.3 198.2h0M403.2 238.8h0M562.6 191.4h0M521.4 172.8h0M681.3 232.1h0M558.1 174.3h0M460.9 214.0h0M633.8 208.9h0M628.6 217.0h0M584.9 201.1h0M585.1 187.3h0M652.0 214.3h0M436.6 225.5h0M393.9 266.7h0M679.4 238.6h0M550.1 180.8h0M656.8 245.4h0M427.2 240.1h0M592.5 207.7h0M541.4 194.4h0M577.4 194.2h0M452.9 225.3h0M610.2 204.1h0M369.6 253.4h0M580.5 205.2h0"/><path d="M586.8 193.9h0M641.5 228.0h0M352.1 262.6h0M515.0 190.7h0M371.4 254.3h0M456.5 213.0h0M459.8 225.2h0M348.2 282.9h0M408.8 258.8h0M673.6 241.4h0M446.6 199.1h0M481.3 195.3h0M689.2 234.6h0M517.6 191.9h0M461.5 223.3h0M342.8 232.6h0M550.2 181.3h0M481.0 183.3h0M593.0 204.1h0M408.5 261.5h0M644.7 235.2h0M616.8 203.8h0M530.2 176.6h0M611.8 204.5h0M568.1 192.9h0M480.4 197.3h0M614.4 211.4h0M639.4 248.7h0M396.3 250.5h0M434.4 213.4h0M462.5 209.9h0M473.8 184.1h0M580.0 193.2h0M644.8 225.6h0M522.6 169.0h0M413.3 220.7h0M503.7 185.4h0M476.5 197.6h0M529.9 170.4h0M634.9 230.3h0M377.8 257.4h0M367.1 250.7h0M501.6 194.7h0M397.3 265.9h0M495.4 214.0h0M411.7 284.0h0M495.1 176.8h0M383.3 244.2h0M638.8 225.4h0M490.2 195.7h0M558.6 174.5h0M448.0 231.0h0M627.4 239.4h0M359.5 251.4h0M486.6 183.2h0M403.3 246.1h0M546.5 184.5h0M486.0 199.4h0M691.8 228.5h0M576.6 204.5h0M567.2 195.6h0M600.1 196.4h0M505.2 191.4h0M337.7 230.3h0M669.5 263.5h0M363.2 268.0h0M606.2 202.1h0M637.0 230.1h0M425.3 244.4h0M535.9 175.0h0M495.6 190.2h0M519.9 172.8h0M419.1 234.4h0M430.2 234.4h0M436.2 221.0h0M392.0 246.5h0M683.3 249.8h0M644.8 228.9h0M607.3 188.2h0M527.1 166.0h0M386.8 264.0h0M502.2 186.7h0M534.0 181.7h0M362.6 257.8h0M371.3 238.8h0M614.9 230.8h0M352.9 254.1h0M417.3 234.4h0M451.6 213.2h0M417.0 252.5h0M459.6 194.1h0M596.5 194.0h0M436.8 240.3h0M448.5 217.7h0M412.0 213.8h0M550.3 192.2h0M592.3 208.9h0M586.2 197.4h0M644.8 233.0h0M688.5 250.2h0M343.1 262.6h0M667.5 231.5h0M674.1 250.0h0M567.3 182.5h0M379.2 252.3h0M444.5 220.7h0M355.9 256.2h0M423.9 232.4h0M613.8 208.4h0M644.9 247.4h0M563.5 193.0h0M424.5 203.0h0M403.5 287.0h0M451.8 211.8h0M666.6 252.7h0M644.4 236.7h0M374.4 269.1h0M611.1 204.7h0M382.6 238.6h0M535.9 179.8h0M644.1 249.9h0M640.5 233.8h0M522.8 182.5h0M490.2 212.8h0M430.2 232.1h0M630.4 204.6h0M512.9 185.0h0M533.6 180.2h0M350.3 255.8h0M613.3 207.9h0M344.4 256.5h0M692.6 246.5h0M506.0 165.3h0M438.1 219.5h0M682.8 252.2h0M436.8 227.0h0M467.9 200.2h0M659.0 238.1h0M613.8 211.2h0M355.9 218.2h0M581.3 195.1h0M483.8 190.0h0M408.3 262.6h0M632.5 218.9h0M427.0 212.2h0M458.9 195.7h0M432.6 243.2h0M483.2 204.6h0M408.5 240.5h0M381.7 272.5h0M548.2 184.2h0M465.7 212.3h0M688.8 252.4h0M637.6 220.3h0M671.1 237.0h0M561.2 197.4h0M534.3 190.5h0M567.7 179.0h0M670.5 242.1h0M340.0 261.6h0M594.5 180.5h0M683.1 258.0h0M427.9 236.4h0M344.9 283.4h0M373.1 274.8h0M494.2 194.4h0M407.0 237.7h0M633.3 207.7h0M531.6 180.6h0M596.3 183.7h0M450.2 191.2h0M425.0 220.8h0M464.8 222.3h0M378.0 261.3h0M495.6 191.5h0M653.0 242.7h0M454.3 231.3h0M546.3 177.1h0M509.5 173.2h0M404.9 226.9h0M529.5 179.7h0M414.9 251.1h0M617.8 224.7h0M399.4 244.5h0M400.2 245.5h0M651.6 247.0h0M524.2 168.0h0M400.3 251.8h0M469.1 199.2h0M446.1 218.1h0M540.6 174.8h0M363.1 255.6h0M540.3 180.5h0M679.9 253.5h0M597.4 208.7h0M611.2 206.9h0M640.2 227.6h0M434.9 222.2h0M470.4 187.9h0M403.3 257.4h0M416.2 255.8h0M379.1 261.8h0M420.3 265.7h0M418.2 242.1h0M517.8 179.4h0M531.5 179.0h0M622.5 218.8h0M594.9 212.7h0M536.7 173.5h0M574.7 196.8h0M492.8 189.4h0M604.5 189.7h0M491.6 195.8h0M442.7 225.3h0M537.2 186.6h0M389.7 260.6h0M527.7 185.6h0M359.7 295.5h0M464.2 205.4h0M476.6 176.9h0M672.6 260.1h0M454.7 199.3h0M405.9 245.9h0M568.2 183.6h0M418.9 246.3h0M476.2 215.3h0M357.4 282.2h0M475.5 217.4h0M614.6 211.9h0M459.0 207.9h0M550.6 181.3h0M692.8 262.7h0M452.6 204.5h0M688.9 242.2h0M418.0 260.5h0M583.9 195.7h0M634.3 231.1h0M506.0 189.3h0M436.3 228.8h0M352.7 269.3h0M489.5 194.5h0M371.1 265.0h0M587.3 189.9h0M623.5 210.6h0M353.2 232.1h0M356.2 283.7h0M390.3 241.3h0M361.5 264.9h0M635.8 230.6h0M485.4 180.1h0M535.2 168.9h0M451.3 213.2h0M627.1 213.0h0M545.3 179.8h0M613.9 203.0h0M530.8 180.4h0M582.7 200.1h0M482.9 219.0h0M486.2 175.3h0M398.1 248.4h0M402.6 246.7h0M491.9 191.5h0M382.9 263.2h0M655.9 249.4h0M554.9 180.0h0M518.6 195.2h0M338.0 237.8h0M624.3 225.2h0M680.7 267.1h0M472.6 203.3h0M495.6 194.5h0M530.4 171.8h0M607.2 216.5h0M524.8 171.9h0M373.3 254.2h0M612.0 215.4h0M576.0 196.7h0M648.2 246.1h0M638.9 221.0h0M526.0 186.7h0M485.9 217.4h0M655.0 234.7h0M692.9 280.5h0M465.8 223.5h0M430.2 217.0h0M411.7 234.9h0M684.0 255.7h0M477.0 204.0h0M630.6 227.4h0M480.9 185.1h0M386.9 265.0h0M414.7 217.9h0M575.1 195.2h0M419.6 229.1h0M602.0 197.3h0M338.9 248.8h0M452.4 210.1h0M508.4 178.1h0M611.2 207.3h0M577.7 193.4h0M581.0 176.5h0M469.4 186.2h0M518.7 163.9h0M454.7 218.5h0M422.9 216.5h0M601.5 217.0h0M403.9 269.3h0M457.1 174.0h0M618.0 209.7h0M419.8 218.7h0M337.6 269.9h0M630.0 215.6h0M641.1 241.9h0M595.5 188.0h0M628.9 245.1h0M650.1 226.1h0M451.7 217.9h0M402.8 246.2h0M645.6 205.2h0M455.0 201.3h0M360.8 285.3h0M624.7 237.3h0M489.6 190.8h0M670.4 245.0h0M438.0 227.3h0M507.4 196.0h0M510.7 182.3h0M620.1 209.6h0M453.0 189.0h0M600.2 215.0h0M596.3 203.1h0M460.6 194.5h0M523.1 184.3h0M586.7 190.1h0M506.2 200.5h0M665.2 237.7h0M484.3 186.9h0M411.1 246.9h0M448.6 218.9h0M539.5 191.6h0M599.4 202.6h0M524.9 156.6h0M556.2 173.1h0M458.5 206.1h0M447.5 207.4h0M495.4 201.2h0M531.9 167.7h0M544.7 158.6h0M689.7 247.3h0M544.3 191.1h0M497.6 180.8h0M686.4 256.5h0M363.9 270.0h0M460.4 193.8h0M446.5 227.0h0M542.9 177.8h0M485.2 187.2h0M526.4 170.8h0M374.9 286.6h0M338.0 263.2h0M521.8 178.4h0M452.8 232.8h0M354.6 271.2h0M566.9 192.3h0M588.0 206.5h0M535.3 161.5h0M353.8 255.1h0M552.8 174.8h0M399.5 242.1h0M578.5 194.1h0M674.1 239.4h0M563.5 192.1h0M609.0 203.9h0M570.0 192.2h0M447.7 195.9h0M535.0 180.2h0M683.3 247.9h0M481.8 203.5h0M656.5 241.8h0M398.9 247.0h0M421.2 240.6h0M396.2 230.3h0M618.3 227.6h0M461.1 189.6h0M628.6 220.2h0M387.5 297.2h0M477.2 191.8h0M609.1 226.2h0M526.3 173.3h0M546.1 179.0h0M354.1 255.8h0M499.7 161.3h0M502.2 177.5h0M667.4 239.6h0M413.4 220.1h0M602.7 205.8h0M446.4 230.3h0M382.0 277.2h0M630.5 245.7h0M627.2 223.6h0M517.4 194.9h0M576.4 179.7h0M429.6 235.1h0M371.4 266.5h0M577.3 183.3h0M473.4 173.3h0M466.5 218.8h0M685.7 235.3h0M340.7 277.8h0M621.1 213.8h0M411.2 220.4h0M593.3 194.4h0M584.5 210.3h0M356.8 284.4h0M628.8 208.1h0M416.3 232.0h0M617.8 215.1h0M667.9 236.5h0M485.1 200.5h0M470.1 196.0h0M412.7 251.4h0M391.7 256.3h0M521.1 176.9h0M663.3 244.1h0M563.1 177.8h0M485.8 193.6h0M661.1 228.7h0M665.3 251.0h0M479.2 200.9h0M589.3 193.3h0M380.3 257.9h0M650.6 240.9h0M655.0 242.1h0M377.0 243.2h0M522.3 193.2h0M337.9 245.0h0M688.5 270.6h0M345.2 254.3h0M591.0 196.3h0M495.2 189.0h0M343.5 285.9h0M609.5 214.8h0M452.9 217.8h0M418.4 248.7h0M535.2 177.2h0M342.8 300.3h0M419.1 226.8h0M366.8 251.2h0M474.9 196.3h0M422.5 261.1h0M564.7 181.1h0M353.4 248.4h0M527.5 185.7h0M666.2 250.7h0M399.7 260.6h0M348.6 258.9h0M348.4 282.1h0M434.1 199.4h0M460.0 197.9h0M445.3 232.3h0M503.8 181.0h0M385.1 247.2h0M569.7 186.4h0M491.2 190.9h0M638.2 214.1h0M684.4 242.2h0M409.5 238.7h0M656.7 243.4h0M545.8 189.4h0M458.1 195.4h0M589.8 194.9h0M560.3 193.8h0M613.4 212.2h0M530.5 195.1h0M560.5 192.4h0M370.2 274.7h0M561.4 186.3h0M491.5 181.1h0M559.3 161.4h0M636.8 216.0h0M581.1 189.9h0M578.1 192.4h0M416.9 233.7h0M643.3 215.4h0M358.5 249.2h0M458.8 209.9h0M428.9 237.5h0M532.9 171.9h0M379.1 239.6h0M381.4 251.1h0M457.7 207.6h0M365.6 286.0h0M686.9 230.1h0M349.5 288.5h0M604.3 214.1h0M470.5 194.9h0M558.6 181.1h0M662.2 250.9h0M566.1 176.2h0M620.2 216.3h0"/><path d="M600.3 201.4h0M483.1 206.2h0M357.0 256.3h0M574.1 190.5h0M455.6 206.3h0M426.4 240.9h0M418.9 250.8h0M531.6 173.9h0M450.8 230.0h0M397.8 245.8h0M579.3 219.3h0M600.7 203.5h0M413.3 213.7h0M612.4 220.6h0M616.7 207.9h0M569.0 183.9h0M543.0 182.1h0M524.3 183.4h0M663.5 235.0h0M374.4 283.7h0M649.6 242.9h0M592.9 193.0h0M600.4 185.3h0M353.9 278.1h0M439.7 239.3h0M599.8 214.7h0M418.8 228.9h0M539.1 171.4h0M485.4 181.4h0M450.8 206.4h0M467.8 213.1h0M629.1 235.4h0M418.5 226.2h0M401.8 242.1h0M359.6 292.4h0M384.9 263.8h0M437.5 213.4h0M543.8 180.1h0M505.9 187.8h0M564.8 197.7h0M675.4 238.8h0M559.0 196.1h0M540.5 187.2h0M489.9 194.7h0M353.6 290.1h0M376.8 279.7h0M536.6 180.6h0M476.6 214.4h0M431.9 216.0h0M673.2 252.2h0M500.9 199.2h0M395.7 273.2h0M601.9 207.5h0M521.7 160.5h0M603.0 209.4h0M552.6 166.5h0M655.3 238.3h0M468.5 191.5h0M636.0 236.7h0M665.6 239.3h0M619.6 212.6h0M435.2 212.3h0M440.4 214.5h0M416.5 225.0h0M389.4 259.4h0M398.1 242.6h0M526.2 189.3h0M409.6 250.7h0M642.7 218.5h0M503.9 181.8h0M343.8 284.9h0M340.2 230.2h0M538.2 183.6h0M677.9 226.4h0M658.9 245.6h0M691.0 250.1h0M687.5 236.9h0M430.1 205.4h0M491.0 201.9h0M689.7 264.1h0M588.1 187.7h0M412.7 246.3h0M490.2 189.2h0M540.5 189.7h0M481.5 186.9h0M514.4 176.8h0M510.1 195.7h0M545.3 165.5h0M607.0 205.6h0M449.2 221.7h0M386.7 260.1h0M565.6 166.6h0M415.1 259.3h0M541.4 190.9h0M389.0 285.1h0M679.6 251.5h0M687.0 260.4h0M672.8 219.4h0M394.1 242.9h0M564.1 193.5h0M391.1 251.0h0M681.0 273.3h0M506.4 204.4h0M657.7 229.5h0M404.5 232.4h0M626.2 230.9h0M633.1 237.1h0M346.4 279.9h0M447.8 229.8h0M382.2 265.0h0M571.8 174.6h0M452.4 225.1h0M689.5 258.8h0M515.1 185.0h0M516.0 183.4h0M401.6 247.0h0M424.6 208.8h0M573.3 194.6h0M421.6 217.1h0M535.0 189.4h0M375.7 258.2h0M499.3 189.4h0M419.6 233.4h0M644.9 242.7h0M366.9 271.0h0M489.5 195.9h0M492.0 208.0h0M432.9 216.7h0M384.0 230.7h0M417.2 231.3h0M609.4 192.6h0M677.1 273.8h0M399.3 258.9h0M475.1 185.3h0M521.5 190.2h0M538.0 174.4h0M513.2 199.4h0M374.5 265.4h0M657.3 254.7h0M428.1 231.3h0M580.8 181.1h0M628.8 209.2h0M688.6 261.5h0M509.6 188.9h0M667.3 238.9h0M523.7 184.7h0M449.5 234.6h0M499.3 197.0h0M637.0 235.7h0M379.0 269.3h0M638.0 213.5h0M355.4 270.7h0M493.9 177.3h0M421.3 251.3h0M687.4 246.5h0M504.7 196.7h0M459.4 211.7h0M662.3 244.0h0M685.7 248.4h0M406.2 242.5h0M451.0 224.7h0M437.7 225.4h0M453.3 220.5h0M692.7 240.5h0M446.5 235.8h0M596.2 207.1h0M627.9 207.6h0M372.7 285.4h0M593.9 194.6h0M556.0 172.3h0M502.3 175.6h0M553.5 186.0h0M638.3 220.9h0M475.9 213.3h0M398.2 250.8h0M649.6 234.2h0M354.9 277.2h0M491.7 208.0h0M443.7 185.8h0M567.0 187.4h0M465.6 213.9h0M371.0 258.2h0M598.4 207.3h0M478.4 178.6h0M579.7 192.5h0M672.4 258.0h0M639.9 243.2h0M589.9 192.4h0M466.1 181.8h0M602.3 217.7h0M671.4 255.5h0M663.6 253.3h0M666.9 255.8h0M431.3 200.4h0M591.2 205.1h0M341.5 272.2h0M491.2 195.8h0M575.7 197.4h0M577.7 204.8h0M446.2 194.4h0M456.0 201.5h0M637.2 231.9h0M619.3 207.8h0M441.6 202.2h0M436.0 224.5h0M689.9 249.0h0M388.7 263.2h0M661.4 261.0h0M392.8 273.4h0M381.7 251.7h0M531.5 181.7h0M560.7 196.1h0M634.2 245.3h0M577.2 181.2h0M596.7 212.8h0M513.6 169.0h0M671.8 256.3h0M412.6 240.6h0M555.7 174.0h0M514.5 179.5h0M411.3 226.9h0M604.9 212.6h0M588.4 200.5h0M509.0 188.3h0M612.0 208.1h0M418.8 262.8h0M445.1 222.1h0M636.3 221.0h0M533.1 189.7h0M529.7 182.0h0M381.7 246.4h0M505.7 193.9h0M664.9 223.7h0M441.4 238.0h0M602.4 211.6h0M602.9 215.4h0M631.4 241.1h0M392.1 263.4h0M680.8 243.8h0M395.8 284.9h0M688.1 245.1h0M662.7 241.0h0M618.3 213.1h0M419.6 222.5h0M563.5 192.8h0M590.1 184.3h0M359.5 250.7h0M527.2 182.3h0M575.0 188.3h0M446.5 215.5h0M438.7 211.6h0M405.6 254.4h0M416.5 210.0h0M414.3 243.4h0M679.0 237.4h0M652.1 214.6h0M605.0 211.7h0M561.8 181.4h0M465.5 210.1h0M567.2 191.9h0M384.8 284.6h0M627.2 233.7h0M348.3 261.6h0M526.7 181.3h0M687.3 263.9h0M493.9 202.4h0M596.3 187.5h0M375.1 247.7h0M685.0 255.1h0M340.9 252.7h0M626.1 221.9h0M667.5 233.5h0M562.1 181.9h0M509.7 183.7h0M472.2 191.5h0M639.2 233.1h0M468.6 211.4h0M634.7 230.9h0M521.2 170.1h0M687.3 275.0h0M485.5 201.4h0M377.1 272.2h0M647.9 232.0h0M568.1 179.0h0M638.6 235.7h0M500.7 186.6h0M567.4 176.3h0M499.8 192.0h0M483.0 185.7h0M442.6 212.8h0M485.2 196.2h0M505.4 179.4h0M419.9 239.1h0M461.1 206.7h0M680.0 250.2h0M598.7 195.3h0M515.7 186.0h0M353.0 266.8h0M438.7 189.7h0M653.5 254.1h0M533.0 174.1h0M626.3 207.3h0M469.0 198.3h0M418.1 230.6h0M432.2 217.1h0M550.0 185.1h0M351.6 253.6h0M619.9 229.1h0M617.3 201.2h0M346.4 271.7h0M666.1 233.6h0M375.1 237.8h0M484.5 188.7h0M607.7 226.0h0M393.6 265.2h0M384.9 255.0h0M536.7 160.3h0M353.8 279.5h0M659.9 238.8h0M391.2 242.0h0M588.4 202.9h0M366.7 265.7h0M461.3 231.4h0M533.1 179.4h0M566.8 175.7h0M632.7 210.3h0M680.0 262.9h0M674.9 246.4h0M426.6 247.5h0M354.0 279.7h0M648.8 255.5h0M428.9 226.3h0M525.4 190.1h0M630.0 226.8h0M407.0 255.5h0M462.3 216.6h0M455.9 208.2h0M565.6 188.3h0M512.1 176.4h0M658.6 233.3h0M612.6 201.8h0M640.5 226.0h0M492.3 178.8h0M357.5 274.6h0M513.7 201.9h0M618.6 226.8h0M380.6 265.1h0M530.5 192.9h0M481.5 189.9h0M483.0 200.8h0M355.5 274.8h0M346.7 266.4h0M422.1 239.9h0M548.0 188.4h0M689.8 247.8h0M536.2 164.8h0M608.1 207.3h0M467.6 203.0h0M383.8 251.9h0M491.6 181.9h0M392.4 268.0h0M387.0 253.9h0M469.5 199.9h0M584.9 199.0h0M490.5 220.2h0M380.5 261.9h0M645.8 247.8h0M609.8 208.3h0M339.3 269.0h0M584.4 208.5h0M379.9 258.3h0M618.8 219.4h0M565.4 178.9h0M515.2 192.6h0M430.3 226.9h0M592.8 197.8h0M677.8 258.4h0M548.3 188.7h0M580.6 192.5h0M604.7 197.4h0M465.1 208.0h0M541.2 170.2h0M655.2 244.6h0M460.5 220.9h0M359.1 264.9h0M396.1 242.8h0M385.6 261.7h0M454.0 190.9h0M511.0 176.3h0M351.0 278.5h0M439.5 232.4h0M586.5 192.4h0M557.7 171.5h0M584.7 196.3h0M542.0 181.9h0M418.9 226.2h0M500.9 189.7h0M339.2 242.5h0M502.2 191.4h0M540.8 177.0h0M438.6 198.5h0M454.3 205.5h0M398.7 211.7h0M346.8 277.9h0M445.3 219.9h0M616.9 225.5h0M537.0 174.7h0M526.7 177.2h0M603.6 204.3h0M682.1 255.2h0M517.0 195.0h0M458.5 205.0h0M400.5 277.3h0M541.9 174.4h0M343.8 255.3h0M370.1 280.3h0M505.2 178.5h0M524.1 182.0h0M675.7 266.0h0M445.3 198.5h0M420.1 203.8h0M412.6 247.9h0M363.8 264.4h0M519.0 180.5h0M687.0 252.7h0M445.2 216.2h0M604.1 203.8h0M501.6 182.5h0M508.3 187.1h0M448.0 221.0h0M479.3 208.4h0M654.7 235.2h0M344.6 252.2h0M358.6 264.8h0M440.6 214.0h0M439.6 202.9h0M596.0 194.9h0M582.7 175.3h0M369.3 271.5h0M649.3 206.0h0M571.0 199.4h0M512.8 197.2h0M596.4 206.3h0M345.7 256.1h0M670.4 251.8h0M500.1 184.3h0M642.4 220.5h0M691.9 244.4h0M347.6 255.1h0M679.4 257.4h0M545.1 179.3h0M662.3 266.0h0M508.7 191.0h0M583.1 190.8h0M690.5 257.7h0M632.1 241.4h0M644.8 231.5h0M377.7 277.5h0M517.2 187.2h0M650.5 228.2h0M431.6 206.6h0M625.9 223.1h0M672.2 240.9h0M607.3 215.4h0M620.4 218.4h0M644.3 223.4h0M609.0 201.3h0M594.9 194.8h0M361.9 261.7h0M608.0 197.9h0M546.4 176.0h0M516.1 188.8h0M385.4 255.5h0M406.7 270.9h0M664.1 232.8h0M400.0 248.2h0M435.6 218.2h0M447.1 219.9h0M680.0 276.9h0M674.6 239.0h0M587.0 207.5h0M483.0 192.5h0M397.4 230.1h0M671.0 220.3h0M683.5 234.0h0M692.9 262.8h0M594.1 210.5h0M535.0 166.4h0M648.1 221.1h0M491.6 208.6h0M413.8 255.0h0M563.5 171.4h0M504.6 184.0h0M573.9 204.9h0M575.5 189.9h0M620.0 213.8h0M640.9 232.4h0M644.9 235.6h0M430.3 196.0h0M406.0 240.6h0"/><path d="M513.2 201.6h0M643.4 240.4h0M492.6 192.8h0M624.3 213.1h0M624.8 219.0h0M443.3 214.9h0M572.8 193.0h0M581.6 182.9h0M499.4 180.0h0M408.8 239.8h0M646.9 224.1h0M442.3 215.2h0M457.1 202.0h0M497.6 187.7h0M461.9 197.7h0M353.3 273.5h0M651.9 230.2h0M673.3 267.8h0M472.6 191.0h0M672.6 263.4h0M526.9 178.0h0M448.4 209.7h0M498.8 181.8h0M599.7 195.0h0M635.3 226.6h0M373.2 283.4h0M451.3 190.7h0M405.8 235.0h0M621.9 206.9h0M360.8 239.2h0M521.1 191.4h0M578.4 202.1h0M419.3 270.1h0M476.1 198.2h0M414.3 243.7h0M643.6 221.4h0M436.1 231.4h0M546.7 174.4h0M449.3 210.9h0M466.3 201.8h0M463.0 187.0h0M512.8 173.3h0M675.8 261.6h0M478.5 214.8h0M412.8 235.6h0M510.6 192.1h0M511.5 188.0h0M479.5 177.8h0M610.8 207.8h0M631.7 222.3h0M651.8 227.5h0M660.5 230.1h0M685.8 250.0h0M520.9 179.8h0M409.4 225.9h0M415.8 244.9h0M360.4 240.2h0M523.9 181.3h0M627.4 250.3h0M456.7 209.6h0M497.0 182.1h0M671.5 244.3h0M610.4 219.4h0M515.8 180.1h0M522.6 186.9h0M570.8 191.2h0M666.6 255.2h0M518.5 185.1h0M483.0 195.5h0M447.8 223.1h0M357.7 261.6h0M650.2 239.9h0M566.8 178.3h0M578.6 190.4h0M458.9 221.3h0M420.6 212.9h0M521.2 163.9h0M421.1 268.7h0M351.0 269.0h0M557.8 203.1h0M598.2 186.9h0M489.8 193.6h0M524.1 171.4h0M672.0 229.8h0M564.3 187.2h0M409.7 237.3h0M661.8 254.2h0M423.7 240.6h0M531.1 174.1h0M373.7 298.4h0M630.9 234.3h0M623.8 215.7h0M556.7 184.4h0M382.3 279.5h0M447.2 222.9h0M652.1 240.1h0M518.4 188.8h0M446.8 204.4h0M511.1 166.1h0M350.0 299.9h0M407.8 250.2h0M475.5 214.4h0M380.4 235.2h0M531.5 168.7h0M457.6 199.5h0M352.6 262.0h0M445.4 199.1h0M482.8 210.2h0M648.1 242.0h0M400.1 260.7h0M617.6 221.1h0M516.9 192.8h0M598.4 194.1h0M674.5 248.6h0M509.3 190.7h0M520.1 191.7h0M371.3 282.5h0M592.2 200.4h0M465.3 199.2h0M595.7 194.3h0M620.0 193.0h0M482.5 190.9h0M471.7 214.1h0M609.0 209.4h0M611.8 200.8h0M553.1 185.7h0M356.7 234.1h0M382.3 254.1h0M365.0 242.1h0M471.8 202.5h0M485.4 229.3h0M686.2 236.8h0M398.4 246.4h0M660.0 249.5h0M556.5 179.3h0M620.2 214.7h0M684.5 255.1h0M341.4 274.8h0M637.1 228.2h0M647.0 241.0h0M577.3 183.5h0M677.3 254.8h0M459.1 207.1h0M475.2 183.1h0M683.5 244.3h0M418.0 244.8h0M349.9 229.0h0M596.7 207.2h0M460.7 200.0h0M629.6 241.3h0M448.4 214.9h0M626.1 228.7h0M507.2 177.7h0M621.6 203.0h0M529.9 193.2h0M423.2 238.0h0M641.2 215.1h0M581.5 185.0h0M640.1 240.1h0M630.8 200.9h0M427.6 230.5h0M605.0 197.1h0M535.5 176.6h0M402.1 246.6h0M382.8 287.3h0M660.9 255.3h0M461.7 190.9h0M584.6 196.7h0M367.7 267.2h0M377.8 259.1h0M594.3 192.7h0M536.1 190.6h0M508.2 166.0h0M481.4 194.6h0M609.5 191.5h0M375.0 244.2h0M442.6 222.1h0M530.4 180.6h0M499.5 190.0h0M408.5 254.6h0M654.1 226.1h0M539.5 176.7h0M491.4 187.3h0M687.1 254.6h0M545.3 177.7h0M372.9 229.7h0M358.7 264.6h0M406.7 257.3h0M477.1 207.2h0M593.7 187.8h0M514.6 200.5h0M383.4 243.8h0M577.0 204.9h0M533.4 175.3h0M478.3 206.8h0M369.6 270.0h0M362.1 266.5h0M467.8 189.5h0M590.0 187.9h0M419.5 268.2h0M407.8 253.9h0M651.7 264.7h0M409.0 249.4h0M585.5 193.0h0M500.5 189.0h0M417.0 260.1h0M524.4 180.5h0M658.0 227.1h0M655.3 242.0h0M341.2 271.1h0M462.6 216.1h0M380.4 265.7h0M508.3 183.2h0M620.6 240.6h0M463.6 200.9h0M359.1 261.3h0M628.6 230.8h0M421.6 243.4h0M412.1 245.6h0M669.2 255.2h0M422.7 228.7h0M668.4 238.8h0M655.2 208.9h0M595.3 198.3h0M656.2 234.2h0M364.3 261.8h0M636.1 238.3h0M653.0 234.3h0M659.6 232.7h0M614.2 228.0h0M575.0 189.1h0M455.4 214.8h0M432.9 213.1h0M479.8 196.3h0M449.0 221.3h0M574.3 193.9h0M437.2 243.9h0M500.7 173.6h0M442.6 202.2h0M627.7 202.6h0M412.4 244.2h0M672.4 252.8h0M436.6 204.3h0M440.8 234.2h0M594.0 208.4h0M347.0 262.9h0M629.0 217.7h0M606.0 224.4h0M376.8 251.9h0M580.6 206.3h0M486.7 198.9h0M461.2 212.9h0M512.3 171.7h0M583.2 177.9h0M534.9 168.4h0M355.7 258.8h0M352.8 246.9h0M645.3 229.6h0M419.9 231.0h0M569.8 192.2h0M622.6 226.4h0M579.3 195.7h0M600.0 203.5h0M593.6 193.1h0M497.6 193.9h0M635.6 221.7h0M662.9 237.2h0M460.7 202.7h0M468.3 209.4h0M484.6 190.5h0M468.5 183.9h0M348.1 256.5h0M420.2 252.4h0M567.5 191.0h0M616.8 213.0h0M690.2 246.9h0M343.0 268.9h0M566.7 197.1h0M476.1 194.3h0M448.7 201.1h0M448.8 208.8h0M591.2 199.0h0M397.3 222.5h0M626.5 208.6h0M628.1 229.3h0M341.8 290.5h0M417.7 235.7h0M686.5 272.7h0M413.0 230.6h0M594.8 199.5h0M341.1 272.5h0M400.6 243.4h0M631.0 220.9h0M649.8 214.5h0M498.7 170.8h0M513.1 190.4h0M424.0 222.2h0M608.4 201.4h0M647.2 235.3h0M533.7 176.9h0M496.2 198.0h0M339.8 263.6h0M588.4 196.8h0M645.1 240.0h0M432.8 218.2h0M562.6 172.9h0M364.7 269.9h0M475.8 222.2h0M444.5 213.9h0M590.1 196.5h0M612.2 219.5h0M582.7 190.8h0M670.8 256.4h0M677.1 240.0h0M530.3 169.7h0M403.6 241.4h0M476.6 178.5h0M536.8 179.5h0M460.3 212.8h0M400.2 249.3h0M461.3 221.2h0M479.8 196.1h0M630.0 225.1h0M364.3 295.7h0M548.5 191.6h0M423.9 226.7h0M413.0 246.8h0M668.0 236.8h0M490.0 207.5h0M599.9 211.8h0M575.7 197.4h0M511.7 183.9h0M662.6 253.1h0M462.1 214.3h0M559.8 176.5h0M509.3 186.7h0M530.6 187.8h0M427.1 234.5h0M435.9 216.9h0M467.7 211.9h0M580.6 193.6h0M365.1 308.2h0M442.0 216.4h0M446.0 196.4h0M438.2 219.3h0M623.7 208.5h0M660.1 251.4h0M420.2 255.5h0M538.4 189.5h0M648.8 224.7h0M458.1 205.6h0M465.3 220.5h0M523.6 180.8h0M553.7 187.7h0M377.3 260.8h0M582.5 196.2h0M393.4 249.2h0M522.7 199.3h0M503.3 180.1h0M613.5 222.6h0M465.5 210.3h0M586.5 198.9h0M507.4 191.3h0M591.1 194.2h0M475.9 196.1h0M451.2 233.1h0M415.9 225.9h0M367.3 268.8h0M687.6 243.9h0M382.5 268.1h0M389.7 257.8h0M532.3 183.2h0M567.2 189.9h0M623.3 211.6h0M603.1 210.9h0M409.0 249.4h0M647.0 233.9h0M423.5 229.2h0M394.9 242.1h0M672.9 239.4h0M635.1 224.3h0M515.7 189.8h0M481.6 199.0h0M645.6 225.8h0M546.7 163.3h0M461.2 227.6h0M611.5 231.2h0M686.9 247.7h0M494.8 193.1h0M443.2 192.2h0M498.4 204.8h0M445.9 204.9h0M612.5 218.7h0M541.2 185.9h0M446.4 232.8h0M555.7 183.2h0M572.7 189.6h0M353.3 268.1h0M530.7 186.1h0M514.7 183.9h0M471.0 199.9h0M520.9 176.8h0M487.5 202.3h0M668.8 270.7h0M680.3 252.6h0M585.2 195.8h0M657.8 234.0h0M623.9 226.1h0M533.9 168.7h0M522.6 173.1h0M628.8 205.3h0M341.1 251.2h0M508.6 194.1h0M583.3 186.9h0M526.2 183.9h0M437.6 220.5h0M396.5 284.9h0M405.4 219.4h0M439.0 222.2h0M589.6 208.6h0M428.2 237.6h0M514.1 173.0h0M467.1 201.3h0M351.3 263.0h0M681.4 249.9h0M685.4 265.1h0M447.5 237.0h0M479.4 211.5h0M567.9 184.9h0M415.2 248.7h0M610.0 195.2h0M596.9 197.4h0M540.8 177.8h0M402.7 240.6h0M492.8 195.3h0M614.2 206.1h0M631.4 223.3h0M383.1 250.6h0M624.8 219.8h0M544.9 182.3h0M585.1 200.1h0M549.6 168.9h0M465.5 214.0h0M498.2 184.3h0M376.9 239.9h0M520.8 174.8h0M470.5 219.5h0M352.4 269.2h0M607.2 193.1h0M572.2 176.3h0M608.0 203.5h0M545.7 200.4h0M532.2 167.7h0M562.1 195.2h0M534.2 168.6h0M689.0 239.0h0M407.5 259.8h0M491.9 189.2h0M598.4 205.1h0M446.7 204.2h0M525.9 171.5h0M444.1 219.6h0M341.4 275.2h0M662.4 238.0h0M560.2 187.9h0M470.4 207.7h0M407.3 269.2h0M512.2 193.5h0M391.5 232.4h0M634.7 224.3h0M492.1 192.0h0M547.1 183.0h0M524.9 187.6h0M356.4 262.2h0M525.7 178.4h0M435.2 214.7h0M404.3 260.9h0M434.9 209.2h0M465.1 205.3h0M632.9 227.2h0M610.5 206.1h0M668.2 256.3h0M431.2 218.3h0M445.5 187.2h0M616.1 201.7h0M388.6 300.8h0M399.4 246.3h0M499.6 178.2h0M642.0 235.3h0M556.6 187.9h0M420.8 226.9h0M563.2 186.4h0M570.0 201.3h0M670.6 254.2h0M444.2 220.4h0M657.1 229.2h0M677.1 247.9h0M460.1 195.0h0M403.0 278.4h0M589.0 181.6h0"/><path d="M663.7 241.0h0M507.7 188.2h0M692.6 233.7h0M568.3 177.3h0M483.7 187.2h0M476.1 200.5h0M678.6 266.5h0M588.6 189.7h0M452.5 194.5h0M364.4 237.3h0M684.1 255.4h0M345.4 265.6h0M481.2 196.5h0M672.7 239.5h0M609.8 220.5h0M412.8 264.0h0M590.5 212.3h0M461.4 214.1h0M582.1 201.6h0M474.7 206.7h0M389.3 220.5h0M350.0 284.6h0M679.2 239.1h0M626.8 237.1h0M544.5 163.8h0M495.4 170.3h0M624.7 209.8h0M691.6 256.7h0M387.2 284.2h0M399.7 243.5h0M653.3 255.3h0M679.4 257.1h0M608.7 222.0h0M596.7 193.6h0M659.8 251.1h0M399.2 244.8h0M472.2 223.0h0M490.0 207.7h0M684.7 264.3h0M551.9 187.4h0M468.9 201.1h0M347.9 249.9h0M653.1 226.9h0M616.8 211.8h0M374.0 255.2h0M642.1 243.6h0M545.6 169.0h0M668.8 250.9h0M470.5 208.7h0M385.2 277.4h0M424.2 225.2h0M400.4 237.0h0M337.9 293.8h0M563.4 181.9h0M536.0 157.7h0M689.6 259.5h0M674.2 238.4h0M666.7 230.4h0M419.5 218.9h0M452.7 213.0h0M547.1 164.0h0M501.7 174.7h0M482.2 195.7h0M347.7 260.7h0M347.4 287.9h0M606.4 193.5h0M429.7 222.9h0M528.9 177.1h0M524.2 178.8h0M666.9 239.8h0M546.7 184.5h0M595.7 199.9h0M628.2 229.6h0M453.4 211.5h0M654.7 236.5h0M552.9 177.8h0M443.2 220.4h0M594.2 194.9h0M479.8 202.8h0M621.5 223.9h0M674.0 253.3h0M651.2 235.6h0M560.3 182.0h0M592.3 199.4h0M527.9 182.8h0M365.8 285.0h0M672.9 260.2h0M690.4 236.6h0M400.7 214.3h0M658.5 243.3h0M565.1 192.8h0M533.9 186.5h0M528.5 179.0h0M444.7 226.3h0M425.0 241.6h0M410.7 242.2h0M686.6 256.5h0M476.8 201.7h0M535.2 170.6h0M663.1 221.8h0M342.4 264.0h0M554.1 176.4h0M630.4 233.0h0M668.4 256.7h0M482.8 183.6h0M466.9 188.0h0M375.8 259.2h0M667.2 243.3h0M508.5 179.0h0M528.0 178.8h0M493.7 187.6h0M439.4 216.3h0M529.8 182.2h0M346.8 239.5h0M671.7 233.8h0M687.4 265.3h0M634.8 220.6h0M518.0 187.6h0M515.2 191.3h0M636.9 239.1h0M400.8 236.8h0M412.9 230.6h0M641.9 243.8h0M363.5 287.2h0M653.9 235.3h0M573.5 201.4h0M576.9 190.4h0M494.0 181.7h0M547.9 178.8h0M463.3 193.5h0M559.6 192.5h0M479.8 206.1h0M580.5 189.8h0M585.1 196.4h0M451.1 216.8h0M675.1 252.1h0M516.1 184.4h0M535.8 182.3h0M491.7 205.2h0M517.9 185.3h0M543.6 181.1h0M559.1 184.0h0M338.0 244.4h0M645.3 232.4h0M525.4 183.8h0M629.0 227.1h0M419.2 226.8h0M445.8 209.3h0M467.7 195.4h0M456.6 201.5h0M465.0 225.3h0M608.0 186.2h0M607.9 196.4h0M576.4 198.9h0M688.5 254.8h0M519.4 182.2h0M588.7 185.7h0M407.7 287.0h0M565.7 200.2h0M474.6 172.5h0M597.0 207.7h0M385.4 273.3h0M613.4 208.3h0M684.0 252.6h0M512.7 196.5h0M546.2 165.6h0M493.3 185.1h0M401.8 234.3h0M337.8 262.3h0M591.5 176.8h0M526.7 184.9h0M437.0 212.3h0M616.5 223.7h0M525.2 173.0h0M555.9 175.7h0M361.9 275.2h0M546.3 183.3h0M586.9 186.8h0M597.5 198.9h0M495.8 183.2h0M551.6 182.6h0M373.9 258.8h0M405.7 250.4h0M527.7 175.5h0M444.8 212.2h0M434.4 211.0h0M526.2 194.7h0M527.4 169.3h0M591.9 210.4h0M556.9 176.7h0M611.2 220.1h0M430.4 240.4h0M514.9 189.3h0M521.1 185.3h0M626.7 249.8h0M558.5 180.3h0M625.2 215.4h0M446.7 220.1h0M577.8 185.8h0M414.4 238.8h0M581.4 200.7h0M521.6 177.6h0M655.9 237.9h0M530.2 167.2h0M627.9 219.8h0M625.4 222.9h0M578.8 207.3h0M501.9 201.4h0M499.9 192.6h0M624.3 221.9h0M588.7 185.5h0M463.9 199.3h0M617.7 218.9h0M431.6 226.7h0M612.0 204.3h0M385.8 232.7h0M482.7 193.8h0M539.0 180.3h0M395.9 227.5h0M369.8 262.2h0M670.5 247.9h0M370.9 247.6h0M581.7 164.9h0M504.5 200.4h0M555.5 179.9h0M483.0 201.9h0M415.4 229.8h0M595.1 199.4h0M642.2 226.8h0M356.4 251.7h0M604.4 184.3h0M380.2 287.8h0M556.1 187.2h0M477.1 191.3h0M429.6 264.7h0M479.8 200.9h0M631.2 247.4h0M511.2 184.0h0M632.9 222.0h0M501.2 194.1h0M483.4 192.3h0M347.6 271.1h0M344.3 268.0h0M633.9 231.5h0M573.7 185.2h0M449.2 212.5h0M675.5 270.3h0M465.4 188.6h0M568.3 186.4h0M526.9 193.5h0M546.1 186.5h0M437.8 225.9h0M521.6 177.9h0M513.8 191.5h0M537.7 174.9h0M540.9 186.3h0M559.6 182.9h0M380.2 238.0h0M463.5 193.2h0M659.7 225.9h0M597.3 190.6h0M432.9 214.9h0M541.7 175.2h0M416.0 250.8h0M677.4 261.6h0M520.2 179.8h0M361.5 269.6h0M640.2 221.6h0M420.5 214.8h0M549.1 179.9h0M659.6 239.7h0M476.2 186.1h0M478.2 177.4h0M347.8 270.8h0M445.3 214.9h0M621.7 212.4h0M462.8 213.4h0M611.9 205.8h0M642.5 224.3h0M613.0 223.1h0M672.3 223.9h0M653.9 226.3h0M682.4 256.9h0M555.9 191.6h0M554.6 191.1h0M664.5 253.2h0M529.5 183.6h0M660.5 250.7h0M486.5 202.6h0M540.8 183.6h0M395.7 235.7h0M573.5 188.8h0M436.0 229.7h0M402.0 267.5h0M536.4 166.8h0M403.0 269.8h0M525.5 179.8h0M385.5 266.3h0M536.2 168.2h0M579.0 189.0h0M364.2 305.5h0M429.7 222.8h0M397.5 253.7h0M565.2 181.8h0M447.3 222.3h0M511.9 182.0h0M382.2 277.8h0M617.3 226.2h0M392.5 264.0h0M442.5 218.8h0M425.7 232.0h0M341.5 284.6h0M623.9 229.5h0M567.9 166.8h0M384.4 255.3h0M668.9 253.0h0M552.5 178.5h0M604.2 189.4h0M681.6 257.7h0M505.5 194.4h0M554.5 175.7h0M449.3 214.4h0M576.9 204.0h0M368.4 278.4h0M488.3 198.4h0M521.7 177.0h0M411.5 260.5h0M657.1 250.0h0M483.4 205.1h0M578.7 186.4h0M646.2 241.8h0M437.5 241.9h0M478.2 214.7h0M440.0 242.7h0M479.2 205.2h0M542.4 173.1h0M546.3 182.9h0M651.8 223.8h0M418.6 240.7h0M626.7 220.5h0M521.6 185.2h0M369.3 256.1h0M611.4 203.5h0M638.2 233.0h0M550.3 183.9h0M550.5 191.9h0M354.6 242.5h0M403.8 246.0h0M656.5 228.1h0M449.9 225.6h0M491.1 203.0h0M503.3 184.7h0M428.4 220.3h0M679.1 257.7h0M670.0 259.9h0M655.2 254.2h0M575.3 195.3h0M662.2 239.0h0M615.4 208.2h0M594.8 190.0h0M673.4 251.0h0M563.8 186.6h0M360.4 291.8h0M691.6 239.2h0M384.4 252.4h0M587.2 196.3h0M378.3 269.0h0M394.7 260.5h0M647.1 249.8h0M586.2 187.6h0M491.0 194.0h0M366.5 274.2h0M369.3 258.5h0M362.4 285.7h0M537.4 172.6h0M365.3 262.8h0M480.7 209.1h0M589.8 184.2h0M444.7 228.0h0M367.7 290.5h0M501.6 182.2h0M355.3 271.7h0M444.9 202.5h0M626.9 215.1h0M564.4 190.9h0M445.3 214.7h0M462.4 213.0h0M515.3 188.5h0M475.4 194.8h0M596.4 216.2h0M665.1 228.2h0M549.5 177.9h0M665.9 233.0h0M517.5 198.6h0M610.6 211.6h0M548.3 174.0h0M498.2 193.6h0M676.5 261.2h0M457.3 222.6h0M505.4 197.0h0M554.3 189.3h0M496.7 198.6h0M540.8 169.5h0M689.1 257.4h0M378.0 275.5h0M379.7 264.5h0M349.3 261.1h0M339.4 231.5h0M403.6 252.8h0M689.8 267.1h0M365.2 248.6h0M408.9 258.5h0M457.3 203.9h0M620.3 201.0h0M585.8 191.6h0M343.2 268.7h0M574.2 192.4h0M551.8 168.7h0M482.6 208.8h0M377.0 265.7h0M442.1 221.1h0M655.0 222.2h0M643.3 226.9h0M391.6 220.6h0M600.9 195.3h0M380.4 244.9h0M514.9 195.2h0M668.0 234.8h0M614.4 221.8h0M637.8 232.7h0M593.6 188.4h0M477.0 200.2h0M468.1 195.3h0M547.4 188.4h0M392.1 266.2h0M541.4 190.7h0M511.5 174.1h0M692.0 253.9h0M443.3 206.9h0M551.3 179.8h0M445.8 212.8h0M458.2 210.9h0M498.5 174.3h0M355.3 245.4h0M451.9 213.5h0M659.8 254.0h0M668.2 241.6h0M515.3 160.0h0M557.0 191.9h0M431.7 243.9h0M534.4 181.2h0M478.0 213.2h0M649.8 215.2h0M428.8 226.3h0M516.7 173.9h0M484.4 193.6h0M344.6 270.1h0M579.2 197.0h0M544.0 179.6h0M414.8 235.1h0M667.3 250.6h0M535.0 183.9h0M501.1 201.5h0M544.8 168.5h0M497.3 158.9h0M376.8 278.4h0M508.9 185.4h0M371.3 239.5h0M626.2 236.3h0M398.6 240.6h0M656.3 240.5h0M586.7 195.9h0M583.0 194.7h0M362.2 244.7h0M350.7 246.4h0M460.4 190.2h0M609.1 200.9h0M581.4 198.5h0M582.2 189.3h0M582.4 188.4h0M614.9 212.8h0M548.3 168.9h0M424.0 273.0h0M429.4 228.4h0M570.9 187.4h0M440.2 204.7h0M462.6 219.2h0M521.8 195.3h0M692.6 264.2h0M568.1 209.7h0M532.7 182.6h0M514.1 184.7h0M380.7 251.4h0M664.9 237.5h0M567.4 202.2h0M579.7 196.2h0M414.1 226.4h0M654.9 250.7h0M479.2 208.5h0M676.1 221.1h0"/><path d="M557.4 184.4h0M590.9 193.6h0M640.5 217.0h0M461.8 226.9h0M633.9 218.6h0M558.6 192.8h0M380.0 273.4h0M490.8 197.3h0M564.6 204.7h0M382.3 249.5h0M589.2 198.5h0M372.9 265.7h0M655.6 235.0h0M542.7 170.4h0M559.7 191.3h0M660.4 249.6h0M348.7 259.8h0M527.4 177.2h0M400.3 256.0h0M489.1 194.7h0M683.2 261.4h0M446.2 227.3h0M467.2 206.8h0M685.8 266.3h0M387.1 271.6h0M500.7 170.4h0M583.2 166.8h0M356.0 248.1h0M606.8 213.5h0M682.6 235.2h0M356.3 243.9h0M363.1 246.6h0M527.6 186.0h0M472.8 185.0h0M628.0 228.3h0M426.1 226.9h0M629.4 222.8h0M689.8 240.3h0M684.6 242.6h0M368.8 254.2h0M341.9 247.6h0M367.6 274.9h0M417.0 256.5h0M465.0 189.7h0M375.0 296.5h0M608.8 199.8h0M580.2 188.2h0M535.7 173.7h0M338.1 254.7h0M376.6 270.6h0M595.0 191.9h0M615.3 216.1h0M565.0 176.8h0M403.2 221.1h0M497.2 204.9h0M604.0 212.3h0M348.5 258.1h0M627.7 224.8h0M552.7 181.9h0M668.8 264.8h0M648.5 232.9h0M468.4 205.5h0M431.0 224.5h0M638.5 218.7h0M436.6 247.2h0M530.1 167.8h0M349.8 270.2h0M385.0 228.8h0M596.2 207.2h0M440.0 227.2h0M392.9 227.0h0M516.4 160.1h0M672.6 248.7h0M437.6 229.7h0M628.4 217.1h0M647.0 243.5h0M553.7 168.3h0M387.9 277.7h0M408.7 233.2h0M580.7 184.4h0M626.7 217.9h0M594.5 193.9h0M421.0 246.8h0M474.0 206.7h0M516.7 192.3h0M472.6 213.3h0M689.2 228.9h0M624.5 221.7h0M552.6 179.8h0M660.6 237.1h0M681.3 257.3h0M413.7 239.2h0M449.5 218.8h0M372.0 274.0h0M545.8 186.0h0M634.3 218.5h0M645.6 212.2h0M427.3 218.2h0M554.6 181.8h0M688.2 253.7h0M429.9 203.5h0M507.5 182.6h0M382.0 294.4h0M512.6 181.7h0M452.4 223.5h0M685.7 254.4h0M606.2 215.5h0M367.8 284.0h0M512.3 185.3h0M515.6 181.5h0M681.4 263.7h0M622.2 224.3h0M637.1 213.1h0M529.7 177.8h0M576.7 202.1h0M417.2 236.6h0M419.9 215.9h0M619.7 216.8h0M434.3 227.5h0M607.8 212.0h0M348.1 281.0h0M624.1 219.6h0M686.1 252.8h0M376.0 277.1h0M384.5 267.7h0M589.7 211.6h0M586.1 195.2h0M681.8 244.0h0M526.2 179.1h0M425.5 258.6h0M343.5 260.7h0M689.7 247.7h0M636.3 212.1h0M547.6 199.9h0M530.8 176.3h0M555.3 200.3h0M440.3 216.3h0M454.1 221.4h0M670.5 231.6h0M601.8 197.7h0M359.6 242.0h0M366.2 246.8h0M668.4 244.3h0M683.6 253.6h0M482.6 211.8h0M349.3 225.0h0M434.6 213.0h0M590.4 197.0h0M466.3 191.9h0M613.9 213.4h0M530.0 166.9h0M493.7 205.5h0M690.2 259.0h0M585.0 196.6h0M653.3 247.5h0M596.4 203.2h0M593.7 185.4h0M647.2 228.0h0M543.1 176.2h0M456.0 216.3h0M628.0 227.9h0M420.9 225.9h0M685.2 265.4h0M482.2 200.5h0M585.5 207.2h0M350.9 268.6h0M410.7 221.1h0M405.8 258.0h0M569.9 191.8h0M446.3 217.3h0M364.5 271.2h0M632.0 210.6h0M503.5 183.6h0M669.4 246.3h0M449.0 197.8h0M482.1 179.0h0M460.0 209.9h0M661.0 219.1h0M481.0 189.8h0M548.9 189.5h0M576.5 195.2h0M427.0 213.5h0M612.5 214.2h0M372.6 233.3h0M479.8 205.1h0M394.4 241.5h0M350.7 260.5h0M460.2 204.8h0M500.6 192.6h0M598.8 211.3h0M362.9 252.7h0M557.7 194.3h0M537.4 178.1h0M669.2 257.8h0M508.8 181.5h0M378.4 279.4h0M540.5 191.6h0M338.8 251.4h0M637.1 228.6h0M436.2 227.3h0M526.7 208.0h0M482.0 197.3h0M340.6 242.9h0M345.6 223.7h0M393.9 265.8h0M472.8 209.4h0M348.3 291.9h0M438.1 216.7h0M561.2 168.9h0M422.8 238.5h0M677.1 249.4h0M538.7 168.1h0M568.8 204.3h0M510.7 186.6h0M407.7 231.8h0M616.3 226.4h0M414.3 209.1h0M359.8 299.4h0M477.2 217.8h0M522.0 176.9h0M497.1 205.4h0M458.1 218.0h0M363.6 270.4h0M504.0 184.9h0M584.4 184.7h0M600.2 200.5h0M424.5 229.0h0M680.7 239.2h0M640.7 234.2h0M495.3 212.9h0M458.5 213.5h0M350.4 270.7h0M415.7 223.8h0M659.1 252.1h0M582.7 213.4h0M645.9 226.9h0M440.2 237.6h0M467.9 208.5h0M686.3 283.8h0M437.7 227.7h0M578.7 188.9h0M612.1 199.4h0M636.1 241.8h0M687.7 270.7h0M630.5 210.7h0M372.1 250.5h0M536.7 178.0h0M668.2 254.6h0M429.1 238.5h0M527.6 197.4h0M649.1 246.6h0M486.2 217.0h0M652.0 228.3h0M463.8 198.6h0M376.5 254.6h0M659.1 239.2h0M428.9 223.7h0M507.2 194.0h0M666.4 254.9h0M529.9 184.2h0M520.7 189.7h0M574.7 181.0h0M575.1 182.3h0M412.1 255.6h0M377.7 286.1h0M379.0 253.8h0M637.4 217.9h0M618.1 220.6h0M442.9 208.8h0M575.1 175.0h0M396.4 273.4h0M553.7 191.7h0M466.3 219.3h0M688.7 248.0h0M402.6 272.9h0M397.6 214.8h0M408.8 233.1h0M546.4 182.0h0M374.9 268.5h0M376.6 261.9h0M458.5 212.8h0M395.6 233.8h0M549.3 202.6h0M385.8 253.0h0M585.4 209.4h0M452.8 225.2h0M561.7 192.1h0M450.5 206.0h0M357.5 251.9h0M579.2 179.1h0M367.1 256.4h0M392.8 265.8h0M376.8 264.9h0M645.6 255.9h0M553.9 178.7h0M658.0 249.4h0M386.3 288.8h0M434.5 246.6h0M676.7 249.8h0M451.3 218.8h0M643.1 241.5h0M525.5 171.0h0M493.7 176.0h0M477.3 222.9h0M375.9 247.9h0M449.9 207.3h0M673.2 242.1h0M665.7 232.5h0M402.8 269.0h0M377.1 304.0h0M601.1 202.5h0M673.9 255.4h0M593.2 195.6h0M592.1 203.3h0M605.0 205.4h0M462.8 209.9h0M531.5 175.2h0M504.9 202.5h0M414.5 233.8h0M589.4 194.7h0M684.1 254.5h0M543.3 185.6h0M423.9 247.1h0M403.5 262.0h0M579.3 184.4h0M660.2 241.2h0M531.1 184.1h0M428.5 205.6h0M416.4 235.8h0M599.5 213.5h0M380.7 258.4h0M621.9 219.2h0M667.9 231.9h0M490.3 184.1h0M453.5 211.5h0M420.2 237.6h0M507.2 177.3h0M391.1 275.4h0M474.2 208.6h0M688.5 250.5h0M338.1 306.8h0M662.5 236.5h0M691.6 270.5h0M626.7 218.7h0M401.5 254.2h0M642.7 224.9h0M610.5 202.8h0M453.5 190.6h0M625.0 233.0h0M580.3 185.2h0M420.7 218.0h0M546.4 188.5h0M532.4 181.2h0M508.3 185.7h0M629.5 228.6h0M685.7 253.6h0M437.2 236.5h0M622.3 215.9h0M540.1 178.1h0M385.0 252.7h0M659.3 255.8h0M675.2 256.3h0M563.9 173.0h0M617.7 207.1h0M440.9 228.7h0M561.1 188.8h0M414.2 231.9h0M459.0 219.8h0M567.5 195.8h0M622.1 212.5h0M420.0 260.5h0M376.9 241.7h0M343.0 250.4h0M340.1 266.2h0M395.3 261.5h0M564.0 175.9h0M514.0 204.8h0M670.9 269.0h0M496.2 205.4h0M486.4 190.6h0M378.9 264.4h0M486.1 194.2h0M452.7 210.7h0M356.9 248.1h0M476.1 215.8h0M669.5 250.1h0M573.8 199.1h0M535.0 177.2h0M540.2 187.4h0M503.4 187.3h0M529.4 191.6h0M457.3 197.4h0M687.6 250.3h0M522.5 178.8h0M442.1 203.7h0M636.0 236.0h0M594.5 210.7h0M377.0 253.7h0M545.6 186.0h0M683.5 244.8h0M362.4 254.6h0M546.1 176.7h0M421.8 226.6h0M666.1 243.8h0M664.7 236.5h0M532.5 179.7h0M409.7 273.0h0M380.9 245.6h0M389.0 248.2h0M380.7 249.8h0M398.9 285.0h0M386.1 265.1h0M362.9 262.0h0M616.1 215.8h0M609.0 181.0h0M665.5 237.2h0M543.7 188.1h0M339.5 285.0h0M676.9 255.7h0M381.5 236.8h0M623.9 224.3h0M490.6 166.2h0M470.1 212.1h0M576.4 182.9h0M605.1 209.7h0M624.4 232.4h0M686.5 254.2h0M501.0 196.5h0M396.2 278.1h0M601.0 203.7h0M485.7 202.5h0M380.7 272.5h0M559.4 189.8h0M356.5 268.6h0M515.9 195.2h0M380.8 247.8h0M386.1 253.4h0M548.0 177.7h0M350.5 292.5h0M479.7 212.6h0M451.4 232.7h0M534.4 184.3h0M591.4 204.6h0M450.8 220.7h0M340.3 243.0h0M514.8 187.2h0M593.8 188.8h0M401.0 256.1h0M481.3 198.5h0M569.7 195.8h0M507.9 186.9h0M385.5 286.3h0M633.5 230.8h0M401.2 243.4h0M535.9 189.8h0M511.7 186.1h0M617.5 220.9h0M364.9 291.2h0M521.6 173.3h0M508.9 188.9h0M456.8 204.4h0M338.4 238.1h0M488.4 188.2h0M632.8 240.2h0M614.9 231.6h0M532.2 168.6h0M344.2 252.7h0M661.4 216.8h0M490.4 201.9h0M392.2 268.4h0M442.5 229.6h0M680.7 273.6h0M631.0 204.1h0M662.1 228.8h0M487.6 186.8h0M405.5 257.9h0M627.4 216.3h0M643.3 242.4h0M548.3 192.3h0M371.6 267.8h0M514.9 182.8h0M539.2 194.8h0M498.2 189.3h0M485.6 169.9h0M585.4 206.6h0M365.2 299.7h0M568.7 183.6h0M383.1 263.0h0M478.8 207.1h0M690.6 267.8h0M608.3 216.2h0M402.1 238.5h0M351.9 248.0h0M578.6 186.6h0M447.5 211.4h0M660.5 257.7h0M497.5 188.8h0M518.5 179.6h0M647.6 254.1h0M492.5 194.2h0"/><path d="M367.8 236.1h0M469.2 177.1h0M384.1 252.2h0M683.9 252.7h0M561.7 180.9h0M469.7 203.8h0M337.3 272.6h0M443.3 229.6h0M506.7 183.6h0M672.0 245.4h0M560.2 181.5h0M676.9 250.4h0M472.1 202.8h0M508.1 200.5h0M410.4 271.2h0M625.4 232.8h0M682.0 246.9h0M663.3 231.1h0M362.4 234.0h0M528.9 185.5h0M620.8 218.1h0M677.8 240.9h0M348.4 261.4h0M378.5 257.2h0M350.4 270.6h0M485.5 208.9h0M539.5 186.3h0M360.5 255.0h0M657.4 269.5h0M660.1 237.3h0M531.1 196.2h0M676.5 267.4h0M464.9 207.3h0M480.8 200.8h0M419.5 230.1h0M622.1 225.6h0M483.3 203.9h0M509.9 195.8h0M363.9 250.5h0M428.1 232.8h0M656.7 252.8h0M654.6 238.3h0M487.2 203.0h0M446.1 203.9h0M449.5 235.1h0M668.0 231.1h0M665.9 245.2h0M580.8 193.6h0M546.2 177.4h0M596.1 206.4h0M613.0 216.9h0M452.6 221.5h0M437.0 223.5h0M456.7 207.4h0M619.5 225.8h0M682.8 258.8h0M684.1 246.7h0M558.5 169.1h0M483.0 209.7h0M338.6 263.0h0M369.8 230.5h0M478.4 196.2h0M519.4 190.6h0M660.5 253.4h0M687.2 263.1h0M503.3 188.6h0M506.0 199.6h0M548.4 174.0h0M399.6 242.8h0M580.8 182.1h0M337.4 249.0h0M481.8 203.8h0M517.8 184.7h0M410.5 227.2h0M509.3 181.2h0M544.7 179.4h0M537.1 171.9h0M606.9 195.9h0M367.9 257.9h0M562.3 190.5h0M653.5 223.5h0M342.8 284.2h0M426.8 201.7h0M597.5 196.1h0M654.7 247.2h0M670.8 245.9h0M394.4 244.3h0M376.4 255.5h0M451.6 206.9h0M393.9 231.9h0M461.7 223.5h0M627.8 218.3h0M692.8 258.9h0M630.6 225.6h0M626.9 213.0h0M583.9 208.1h0M456.3 201.6h0M518.6 166.2h0M528.8 181.5h0M359.8 269.6h0M619.7 235.0h0M645.1 231.7h0M503.2 204.5h0M530.1 192.6h0M546.2 179.6h0M669.7 238.1h0M537.6 173.8h0M539.9 175.1h0M675.7 254.9h0M586.0 199.8h0M589.7 180.9h0M526.1 181.4h0M410.5 239.9h0M467.8 214.1h0M391.8 267.6h0M406.1 240.1h0M379.5 253.6h0M494.9 190.4h0M387.5 248.2h0M423.8 235.2h0M678.0 265.5h0M629.3 226.2h0M608.5 213.8h0M538.1 185.6h0M597.5 211.4h0M386.5 247.3h0M349.6 234.4h0M427.9 217.8h0M584.2 193.3h0M406.1 246.6h0M511.6 184.0h0M569.1 190.7h0M390.2 219.5h0M349.1 229.1h0M425.2 246.2h0M615.6 220.1h0M607.1 204.1h0M530.4 187.4h0M529.5 197.6h0M622.8 228.9h0M599.8 213.1h0M386.9 267.8h0M667.5 248.4h0M520.1 185.5h0M512.8 168.1h0M536.4 184.7h0M487.1 199.6h0M524.2 176.5h0M361.8 265.8h0M538.7 174.4h0M587.0 198.2h0M516.2 184.2h0M553.4 184.5h0M672.7 259.3h0M567.3 191.5h0M432.0 243.8h0M349.2 294.5h0M679.8 253.8h0M421.0 233.5h0M394.1 228.5h0M678.9 255.2h0M422.5 232.3h0M596.1 196.4h0M348.4 267.4h0M654.7 250.0h0M600.8 199.6h0M575.7 196.3h0M507.9 184.1h0M553.3 199.4h0M615.2 204.2h0M526.1 167.4h0M601.0 226.3h0M680.5 249.6h0M499.7 199.3h0M487.2 204.0h0M598.7 194.7h0M518.1 196.9h0M444.9 202.4h0M692.3 270.0h0M579.9 178.6h0M493.2 194.0h0M464.6 210.0h0M560.4 189.7h0M587.2 188.5h0M549.2 196.4h0M340.9 240.5h0M599.4 196.8h0M360.8 305.5h0M470.1 219.4h0M354.2 268.1h0M367.2 255.2h0M340.4 255.3h0M649.6 242.6h0M639.7 217.8h0M546.1 183.5h0M351.0 256.7h0M579.4 187.2h0M601.5 215.7h0M518.9 175.3h0M473.8 229.7h0M496.8 185.9h0M530.1 180.0h0M555.7 188.9h0M497.3 203.6h0M673.5 245.7h0M664.6 247.6h0M437.5 241.4h0M461.1 202.4h0M515.7 188.4h0M385.8 228.0h0M441.8 232.6h0M435.5 233.3h0M436.8 202.3h0M410.0 212.5h0M524.0 170.3h0M454.5 218.6h0M402.0 241.1h0M513.3 204.2h0M675.9 258.5h0M665.2 245.5h0M376.7 252.0h0M385.1 252.3h0M506.7 194.1h0M342.4 246.3h0M412.9 270.5h0M522.6 180.3h0M452.4 211.1h0M419.1 241.8h0M638.5 213.7h0M677.6 269.1h0M579.4 188.2h0M380.0 277.7h0M419.5 235.3h0M641.0 232.8h0M515.3 174.0h0M498.6 200.1h0M450.4 202.7h0M446.2 225.6h0M468.2 179.7h0M624.3 223.5h0M644.5 204.1h0M358.1 271.7h0M638.2 227.1h0M637.8 225.7h0M454.0 208.1h0M567.9 184.4h0M571.7 183.0h0M619.7 223.4h0M662.1 252.4h0M524.4 180.9h0M449.6 205.9h0M638.7 241.7h0M623.4 201.9h0M685.0 270.1h0M389.1 274.9h0M371.8 306.9h0M428.0 256.5h0M407.7 245.9h0M482.1 205.7h0M613.0 211.2h0M427.2 200.7h0M571.8 196.8h0M489.3 216.9h0M673.4 243.2h0M524.5 186.6h0M401.7 260.2h0M437.6 234.1h0M613.7 224.3h0M344.8 273.7h0M517.8 166.1h0M686.4 256.9h0M379.0 262.2h0M388.7 258.0h0M380.8 237.9h0M631.1 220.4h0M432.9 208.0h0M474.2 217.4h0M357.3 260.1h0M491.6 175.9h0M527.4 175.2h0M413.4 234.9h0M574.9 179.5h0M687.8 263.7h0M608.4 203.6h0M411.9 240.5h0M617.1 217.1h0M416.3 250.3h0M629.6 209.6h0M583.8 199.1h0M625.8 236.0h0M492.3 193.3h0M371.2 248.9h0M518.0 190.1h0M666.3 250.2h0M642.5 231.1h0M389.9 240.3h0M522.0 194.9h0M622.3 227.0h0M368.3 255.0h0M474.5 214.3h0M584.6 208.1h0M573.2 191.4h0M417.6 246.4h0M392.1 258.6h0M502.1 187.3h0M470.0 204.6h0M352.3 295.4h0M550.0 183.5h0M430.1 225.4h0M488.2 205.0h0M556.3 188.2h0M563.6 195.0h0M643.3 239.4h0M545.3 167.2h0M355.7 283.8h0M551.4 173.8h0M465.8 210.2h0M659.7 244.1h0M502.1 168.6h0M509.8 197.0h0M453.7 199.0h0M555.8 188.3h0M589.8 211.1h0M590.3 200.4h0M665.0 240.6h0M684.6 258.8h0M439.8 237.5h0M596.6 183.2h0M438.5 203.6h0M434.7 223.9h0M543.3 191.6h0M551.0 180.0h0M496.3 188.4h0M369.7 297.8h0M505.5 162.7h0M398.6 222.6h0M675.3 248.2h0M451.4 209.8h0M386.8 275.1h0M653.9 225.5h0M353.8 235.1h0M387.0 269.6h0M458.4 189.3h0M414.9 221.7h0M416.9 259.1h0M566.5 188.5h0M352.5 276.2h0M560.8 190.8h0M353.9 279.5h0M557.3 175.7h0M565.1 177.0h0M476.4 211.1h0M599.9 199.6h0M471.2 202.0h0M359.8 268.4h0M494.5 187.2h0M598.1 199.8h0M409.3 247.1h0M483.9 195.4h0M414.7 270.7h0M675.4 246.8h0M486.9 186.5h0M544.5 190.1h0M387.4 288.9h0M579.6 173.9h0M368.4 261.1h0M386.8 245.8h0M425.6 228.4h0M450.1 215.6h0M389.0 237.3h0M566.5 186.0h0M433.4 226.7h0M474.9 191.6h0M390.2 255.8h0M630.1 233.3h0M624.1 227.1h0M462.4 201.3h0M568.4 180.6h0M363.3 305.7h0M678.5 244.5h0M577.8 178.1h0M623.6 222.4h0M653.1 226.4h0M405.5 248.7h0M441.0 218.6h0M555.5 179.0h0M354.7 264.8h0M496.8 181.4h0M642.5 231.1h0M575.4 184.6h0M474.1 209.8h0M556.5 182.3h0M504.5 170.9h0M486.0 194.3h0M615.3 207.4h0M411.6 235.8h0M568.7 181.8h0M490.6 190.0h0M664.7 235.0h0M558.4 186.8h0M358.0 242.2h0M350.0 294.0h0M385.5 250.6h0M351.6 272.3h0M519.7 180.0h0M593.8 197.4h0M532.1 175.8h0M562.0 179.6h0M692.6 265.6h0M344.9 251.8h0M465.8 205.9h0M556.6 174.0h0M579.6 185.1h0M603.7 208.0h0M504.2 176.4h0M531.0 179.1h0M554.1 188.4h0M533.8 168.3h0M638.4 230.6h0M372.0 235.9h0M667.2 236.1h0M603.0 207.2h0M398.9 247.4h0M577.3 187.6h0M615.1 211.0h0M614.8 200.1h0M411.5 225.3h0M436.5 226.3h0M666.5 258.9h0M344.0 252.3h0M451.0 211.2h0M592.9 186.9h0M536.2 184.4h0M674.9 224.9h0M513.8 182.1h0M427.2 204.0h0M673.2 259.8h0M364.6 275.0h0M651.3 236.2h0M456.5 205.7h0M587.2 196.0h0M448.5 222.9h0M477.1 190.4h0M440.4 220.6h0M662.6 250.3h0M411.2 247.1h0M513.6 175.6h0M673.4 237.7h0M509.0 188.2h0M549.8 183.7h0M370.0 264.1h0M427.2 208.6h0M679.4 263.4h0M389.0 252.6h0M503.1 181.3h0M383.6 289.5h0M512.0 167.9h0M479.9 210.0h0M379.5 278.1h0M471.9 203.5h0M481.9 195.5h0M525.5 172.4h0M375.8 279.2h0M581.3 192.2h0M452.6 217.1h0M377.0 258.0h0M423.6 236.1h0M398.2 259.8h0M685.2 242.0h0M657.2 261.5h0M495.6 192.4h0M563.6 170.8h0M543.7 177.8h0M562.5 182.4h0M552.3 192.3h0M512.2 171.8h0M555.8 181.4h0M393.5 266.2h0M548.9 179.1h0M595.6 206.3h0M655.5 261.7h0M463.4 231.6h0M489.6 182.0h0M638.1 205.8h0M637.2 215.5h0M339.7 245.9h0M528.2 198.6h0M438.0 233.0h0M564.7 199.7h0M405.7 259.1h0M359.1 255.8h0M547.5 193.0h0M440.6 218.9h0M402.5 250.5h0M373.8 272.4h0M570.1 185.6h0M567.1 198.8h0M622.6 226.5h0M608.3 211.2h0M570.3 188.9h0"/><path d="M678.3 251.7h0M574.1 186.8h0M374.7 266.1h0M584.2 202.0h0M460.5 206.4h0M460.1 228.5h0M470.5 211.2h0M605.9 210.9h0M342.6 247.9h0M569.4 185.9h0M423.9 213.1h0M668.8 249.2h0M386.3 236.0h0M344.9 259.9h0M385.2 260.5h0M338.4 277.6h0M413.5 217.9h0M679.8 259.8h0M656.4 243.5h0M538.5 182.1h0M522.0 189.1h0M667.9 256.1h0M507.9 175.9h0M559.3 186.1h0M679.0 241.6h0M583.9 188.8h0M528.3 173.4h0M371.4 252.2h0M608.0 206.8h0M467.7 208.3h0M414.2 240.9h0M633.7 223.0h0M546.3 191.7h0M481.5 208.7h0M549.2 179.6h0M456.2 217.2h0M546.8 193.2h0M516.3 180.7h0M603.3 205.3h0M353.7 247.6h0M648.3 239.0h0M446.2 222.5h0M585.3 185.6h0M393.3 261.9h0M613.8 210.8h0M656.4 221.9h0M350.5 274.8h0M507.0 168.8h0M472.4 223.3h0M674.8 248.1h0M350.8 261.1h0M349.8 249.6h0M629.0 237.0h0M530.3 170.5h0M539.8 190.5h0M438.3 233.0h0M628.9 228.4h0M431.5 232.1h0M526.5 177.3h0M512.4 192.1h0M390.6 251.9h0M491.5 191.1h0M550.7 179.5h0M523.1 180.7h0M659.1 233.8h0M631.8 230.4h0M636.5 231.4h0M414.4 226.1h0M378.8 253.6h0M571.7 184.0h0M386.8 236.2h0M567.0 190.1h0M448.1 190.2h0M608.3 197.2h0M497.6 192.9h0M408.4 247.7h0M347.4 251.8h0M353.8 243.4h0M681.1 224.5h0M405.8 257.0h0M574.9 201.0h0M436.6 215.1h0M669.9 241.9h0M512.3 192.1h0M437.7 233.5h0M372.0 250.0h0M453.1 212.4h0M359.3 230.7h0M601.4 204.2h0M530.4 179.8h0M658.9 220.2h0M588.4 180.3h0M425.1 243.0h0M378.2 245.8h0M477.3 224.3h0M344.7 265.0h0M650.5 238.3h0M574.5 191.5h0M538.6 172.9h0M473.0 199.4h0M486.1 207.1h0M647.6 226.4h0M535.6 177.5h0M519.1 186.1h0M575.1 197.0h0M576.4 190.5h0M436.5 240.3h0M605.4 204.2h0M405.3 256.0h0M384.3 245.5h0M495.4 194.1h0M660.7 253.6h0M476.7 205.0h0M462.1 226.2h0M546.1 182.8h0M416.6 229.3h0M377.1 256.7h0M665.5 240.8h0M360.5 281.7h0M605.5 192.7h0M685.9 238.7h0M545.1 189.8h0M337.5 238.0h0M446.3 210.5h0M437.1 226.0h0M398.2 253.8h0M356.2 278.2h0M518.9 183.0h0M590.3 209.3h0M637.7 248.4h0M499.6 198.6h0M343.4 274.4h0M382.4 247.4h0M664.5 236.6h0M554.5 175.9h0M514.3 165.0h0M481.2 193.8h0M401.4 244.4h0M372.8 265.1h0M402.1 229.5h0M650.2 240.4h0M454.9 217.9h0M614.9 186.4h0M600.0 183.5h0M616.4 210.7h0M524.5 165.9h0M677.3 250.6h0M555.1 172.2h0M510.6 175.2h0M632.9 238.3h0M570.0 194.9h0M485.5 198.7h0M687.6 251.1h0M360.7 277.2h0M348.6 252.0h0M535.7 187.0h0M351.9 295.3h0M398.9 242.3h0M497.1 187.8h0M419.6 230.9h0M419.2 215.0h0M622.1 212.8h0M464.0 211.6h0M467.2 205.3h0M370.1 255.4h0M508.2 202.1h0M443.8 195.0h0M689.1 267.3h0M584.5 207.5h0M649.9 246.9h0M496.5 197.9h0M626.7 234.4h0M685.9 258.1h0M396.7 242.5h0M673.7 261.4h0M358.1 245.9h0M380.7 225.4h0M597.8 190.4h0M541.1 172.2h0M637.5 220.6h0M503.7 194.5h0M505.0 178.2h0M688.9 246.9h0M341.1 246.1h0M486.9 195.7h0M353.3 280.8h0M482.9 181.3h0M451.4 229.6h0M600.8 192.3h0M618.1 207.5h0M650.3 242.0h0M350.8 272.9h0M544.5 187.2h0M658.8 243.8h0M479.8 190.1h0M617.7 219.3h0M519.1 163.0h0M394.6 256.4h0M344.2 286.1h0M600.8 193.1h0M623.3 213.6h0M406.1 246.8h0M589.9 204.4h0M481.2 209.6h0M666.7 246.8h0M381.0 244.8h0M531.0 178.7h0M508.5 182.2h0M388.6 244.7h0M665.1 261.7h0M373.4 250.7h0M672.1 260.4h0M655.0 240.4h0M605.9 201.3h0M577.7 198.5h0M518.4 184.2h0M403.8 258.3h0M338.7 274.8h0M456.4 199.7h0M522.5 180.4h0M654.8 226.5h0M579.1 192.3h0M651.9 252.4h0M660.2 256.4h0M662.5 252.1h0M456.1 235.2h0M462.1 201.8h0M562.3 199.0h0M389.8 248.7h0M632.6 238.5h0M553.7 178.2h0M640.3 221.2h0M556.2 177.1h0M540.4 176.0h0M450.4 187.6h0M494.9 205.8h0M404.9 239.3h0M589.2 199.4h0M412.7 238.7h0M485.0 182.7h0M544.2 191.8h0M411.7 240.8h0M451.3 224.3h0M660.6 254.6h0M359.1 261.8h0M525.2 185.2h0M634.7 238.2h0M479.4 216.6h0M528.2 163.7h0M672.1 230.4h0M685.9 224.0h0M616.8 201.1h0M542.0 174.2h0M392.9 246.7h0M500.0 187.2h0M668.9 247.8h0M412.2 261.6h0M429.3 225.8h0M479.1 211.0h0M448.1 224.0h0M338.2 262.4h0M663.2 255.2h0M415.6 248.5h0M460.5 195.4h0M476.3 189.2h0M554.3 181.5h0M606.2 214.7h0M544.3 174.7h0M390.0 224.9h0M404.6 244.9h0M364.1 276.8h0M471.0 202.9h0M531.9 160.8h0M538.4 195.6h0M649.3 236.2h0M529.1 187.1h0M338.9 255.6h0M591.3 189.3h0M520.3 184.9h0M671.4 241.1h0M686.0 238.8h0M339.1 272.1h0M536.7 166.9h0M601.2 211.5h0M587.9 197.1h0M458.5 208.7h0M555.0 188.6h0M614.1 207.4h0M626.6 203.8h0M603.2 206.0h0M573.7 190.0h0M633.1 221.7h0M356.1 250.7h0M524.4 176.2h0M636.7 224.3h0M605.0 217.4h0M527.7 169.0h0M684.0 247.0h0M366.2 237.6h0M351.1 275.5h0M613.8 208.0h0M608.0 213.0h0M581.2 190.0h0M603.5 189.2h0M689.9 257.8h0M367.7 258.2h0M567.8 182.3h0M661.7 251.4h0M423.8 201.3h0M577.0 201.3h0M550.4 185.7h0M481.9 217.4h0M678.0 243.0h0M486.1 203.0h0M661.5 241.5h0M350.9 241.5h0M393.1 241.8h0M459.5 225.6h0M462.9 204.5h0M626.1 221.1h0M445.3 244.4h0M546.4 176.5h0M549.4 180.3h0M690.6 250.4h0M551.1 168.9h0M545.4 175.8h0M631.1 213.9h0M398.9 249.5h0M442.7 209.7h0M531.5 185.4h0M554.5 177.0h0M583.4 201.3h0M692.5 257.3h0M584.0 196.2h0M615.0 212.4h0M363.9 249.1h0M466.8 208.6h0M573.2 182.8h0M462.2 208.6h0M551.4 180.5h0M439.7 218.7h0M486.5 180.3h0M688.1 235.3h0M563.3 187.8h0M449.3 186.1h0M687.6 237.2h0M490.1 180.1h0M375.4 245.0h0M434.1 199.1h0M490.9 181.9h0M625.5 201.6h0M667.0 234.9h0M454.2 208.4h0M618.5 217.1h0M520.9 184.3h0M497.9 184.9h0M635.8 230.8h0M648.3 248.5h0M614.5 215.4h0M470.2 215.6h0M491.8 213.4h0M534.6 188.6h0M644.4 230.3h0M464.0 201.8h0M392.5 246.4h0M613.3 228.2h0M344.0 260.5h0M343.3 256.2h0M660.0 254.7h0M624.8 227.4h0M355.5 270.0h0M636.9 218.1h0M617.0 200.1h0M488.3 195.6h0M369.7 245.0h0M362.0 251.3h0M507.9 184.7h0M554.7 190.7h0M434.0 223.6h0M591.8 199.2h0M619.7 227.6h0M476.6 199.0h0M466.9 192.4h0M365.7 249.3h0M498.5 196.4h0M554.8 178.8h0M685.0 276.2h0M456.2 231.0h0M519.0 178.9h0M496.1 197.8h0M570.3 183.7h0M594.4 197.5h0M499.9 196.5h0M669.2 252.7h0M589.2 202.6h0M380.7 252.3h0M356.4 273.0h0M351.6 299.4h0M581.1 192.3h0M677.4 252.0h0M607.4 213.4h0M386.6 248.3h0M627.9 222.1h0M586.9 187.7h0M558.1 205.1h0M394.7 265.8h0M563.7 181.2h0M620.0 227.3h0M383.1 255.0h0M452.2 225.8h0M570.7 196.8h0M562.4 171.7h0M528.0 176.6h0M587.3 188.6h0M400.0 277.4h0M600.8 196.3h0M504.3 176.3h0M572.6 182.5h0M365.9 247.3h0M649.7 235.0h0M367.2 292.4h0M677.9 227.4h0M436.4 221.2h0M619.6 221.6h0M590.2 198.5h0M426.1 254.2h0M616.1 233.2h0M486.3 203.5h0M652.9 231.1h0M611.0 209.6h0M593.1 203.4h0M386.8 257.9h0M482.4 181.7h0M663.8 238.6h0M506.6 169.8h0M677.7 246.6h0M664.8 232.0h0M375.1 257.6h0M395.5 258.8h0M551.8 190.4h0M374.1 230.7h0M651.6 233.2h0M643.4 238.2h0M514.2 172.8h0M363.6 281.8h0M342.4 256.9h0M645.2 232.3h0M415.5 219.4h0M361.5 253.8h0M528.9 177.4h0M588.0 183.9h0M649.2 251.2h0M687.1 268.3h0M602.5 207.0h0M459.2 207.6h0M514.7 177.1h0M692.2 251.3h0M534.1 182.3h0M398.5 220.9h0M681.3 250.5h0M586.2 191.1h0M568.2 178.0h0M527.1 173.9h0M504.2 191.1h0M341.1 257.7h0M458.4 191.0h0M597.1 200.1h0M531.2 170.3h0M371.6 294.2h0M437.1 229.6h0M597.4 187.9h0M646.3 244.9h0M360.6 274.5h0M371.3 277.9h0M340.5 254.0h0M666.8 248.2h0M632.8 239.9h0M595.4 201.9h0M367.0 275.4h0M608.6 209.7h0M379.6 275.8h0M501.5 200.4h0M527.1 184.1h0M474.8 204.4h0M521.2 166.3h0M596.0 209.3h0M594.5 194.6h0M547.5 174.3h0M416.5 252.8h0M555.0 177.7h0M598.2 200.8h0M352.8 254.1h0M438.8 209.7h0M433.4 223.8h0M604.4 210.1h0M503.5 191.0h0M375.9 271.8h0M658.2 225.1h0M438.5 205.6h0M635.2 225.0h0"/><path d="M482.4 177.2h0M494.8 169.1h0M365.3 259.3h0M567.9 179.8h0M690.7 261.1h0M368.0 257.8h0M667.7 240.1h0M519.8 187.8h0M430.9 219.3h0M613.3 208.0h0M656.2 252.9h0M424.5 202.6h0M459.8 203.6h0M520.9 183.1h0M392.0 260.8h0M420.7 230.0h0M407.7 242.9h0M446.5 199.8h0M539.3 164.3h0M380.4 244.9h0M531.6 180.1h0M671.7 255.8h0M615.9 215.4h0M402.9 280.1h0M399.5 247.9h0M653.4 265.1h0M596.6 196.5h0M567.4 203.5h0M390.4 270.7h0M645.9 227.6h0M340.4 272.2h0M647.7 230.8h0M536.8 188.3h0M500.3 188.4h0M664.3 242.4h0M479.4 193.3h0M690.3 252.8h0M429.9 213.4h0M666.9 253.1h0M503.6 194.2h0M550.4 188.8h0M545.2 168.9h0M622.5 217.9h0M374.7 248.0h0M663.1 242.0h0M531.4 174.3h0M488.5 190.8h0M598.0 206.0h0M430.8 240.6h0M453.4 217.4h0M646.7 234.8h0M678.3 255.5h0M510.6 180.6h0M507.2 203.9h0M474.2 184.1h0M337.8 259.9h0M680.7 235.0h0M624.8 223.3h0M568.2 199.2h0M459.8 210.5h0M522.3 181.9h0M386.8 249.8h0M413.8 262.6h0M536.7 179.1h0M608.6 235.4h0M421.9 220.6h0M691.8 269.2h0M338.5 258.3h0M587.2 195.7h0M517.1 184.9h0M659.4 253.2h0M637.4 235.2h0M530.0 198.1h0M372.0 247.7h0M422.4 234.0h0M515.1 176.5h0M560.0 190.7h0M648.0 240.3h0M690.5 249.5h0M389.1 255.6h0M358.0 251.3h0M483.4 179.2h0M558.1 190.0h0M527.2 180.4h0M532.4 180.8h0M616.7 220.5h0M518.0 189.8h0M469.4 198.9h0M591.9 200.4h0M687.2 236.2h0M583.4 184.8h0M674.1 252.4h0M526.0 180.4h0M527.0 180.0h0M514.3 187.6h0M551.5 176.7h0M576.2 191.2h0M513.3 167.8h0M408.5 250.8h0M338.3 282.9h0M562.8 186.9h0M568.7 181.1h0M407.7 270.8h0M670.3 243.4h0M434.9 244.5h0M650.8 240.2h0M639.7 235.6h0M477.0 196.5h0M690.9 225.7h0M473.7 184.2h0M397.2 243.3h0M614.0 196.2h0M612.3 234.5h0M585.2 192.5h0M454.7 205.7h0M483.9 196.2h0M464.2 191.9h0M362.3 289.8h0M484.4 189.0h0M581.0 197.8h0M543.7 191.3h0M611.0 198.7h0M656.8 253.8h0M423.4 227.0h0M418.9 224.0h0M408.7 230.7h0M692.4 253.9h0M433.9 224.7h0M564.3 182.9h0M536.1 191.3h0M678.8 254.8h0M437.2 223.5h0M629.3 214.5h0M639.1 237.4h0M683.9 263.8h0M530.3 164.0h0M492.3 187.3h0M487.8 196.7h0M341.8 245.0h0M342.6 263.1h0M536.7 171.8h0M650.1 246.8h0M658.7 229.2h0M680.2 263.9h0M688.1 253.0h0M395.2 266.6h0M678.5 242.5h0M646.4 232.5h0M651.9 233.2h0M469.5 219.0h0M633.4 247.8h0M428.7 218.4h0M353.5 268.6h0M606.2 218.8h0M519.3 188.0h0M520.3 175.1h0M506.5 191.5h0M501.6 174.5h0M468.8 216.6h0M348.1 257.1h0M656.6 258.0h0M464.2 204.0h0M570.5 190.8h0M457.7 214.3h0M423.0 212.0h0M546.1 180.3h0M489.4 198.8h0M395.8 241.2h0M642.2 226.2h0M579.6 190.9h0M360.1 269.7h0M541.0 171.8h0M609.1 194.1h0M461.4 181.3h0M412.2 246.7h0M558.5 162.4h0M390.8 244.8h0M499.0 185.1h0M656.4 241.3h0M568.8 209.4h0M552.7 185.8h0M654.6 248.8h0M570.5 199.7h0M662.8 231.6h0M447.2 214.6h0M381.7 267.7h0M587.1 190.2h0M442.4 224.5h0M429.7 215.7h0M681.6 263.5h0M524.1 196.5h0M537.5 177.5h0M524.0 187.9h0M447.8 228.1h0M337.8 254.9h0M510.8 186.0h0M506.8 200.4h0M497.8 206.4h0M454.3 207.0h0M493.0 187.1h0M533.4 182.8h0M391.8 261.7h0M642.5 215.6h0M551.1 168.5h0M541.2 173.0h0M516.4 184.8h0M396.5 270.8h0M417.5 234.3h0M641.4 236.6h0M651.0 232.1h0M657.0 228.8h0M342.8 256.8h0M570.9 169.6h0M571.8 183.1h0M648.6 228.2h0M674.4 230.9h0M479.1 214.2h0M426.7 230.9h0M634.6 226.5h0M507.1 177.1h0M397.5 254.2h0M582.6 177.9h0M424.1 246.2h0M497.6 198.7h0M426.8 248.9h0M485.2 186.4h0M587.4 199.8h0M383.1 286.8h0M544.0 175.4h0M680.5 242.0h0M688.2 248.4h0M419.9 230.2h0M624.2 211.9h0M521.2 188.2h0M457.4 217.6h0M471.8 209.4h0M456.4 231.8h0M654.9 243.6h0M391.7 252.2h0M609.9 193.9h0M628.2 214.4h0M630.7 230.3h0M598.3 191.9h0M553.2 184.8h0M385.8 272.6h0M548.9 189.3h0M601.7 218.9h0M358.1 277.5h0M440.6 228.6h0M570.1 187.6h0M602.9 218.9h0M654.7 221.1h0M414.3 232.7h0M574.0 187.3h0M425.8 254.8h0M615.0 203.5h0M669.7 242.1h0M543.0 198.6h0M637.3 223.7h0M352.7 243.8h0M658.3 234.8h0M514.8 177.4h0M475.0 210.4h0M346.8 256.6h0M691.3 260.4h0M572.4 183.9h0M376.5 271.0h0M418.7 226.2h0M555.1 188.6h0M369.2 244.5h0M568.2 174.1h0M659.9 259.3h0M626.8 206.1h0M459.3 192.4h0M564.4 189.4h0M613.2 210.6h0M547.0 194.8h0M595.3 205.1h0M414.2 266.4h0M614.1 211.3h0M514.7 186.8h0M621.0 223.8h0M651.1 227.4h0M381.8 289.3h0M453.0 215.7h0M397.8 229.2h0M681.8 240.2h0M687.1 232.8h0M635.3 218.3h0M475.2 194.4h0M641.0 259.8h0M558.1 181.3h0M450.4 192.1h0M394.6 254.6h0M560.7 191.0h0M522.4 183.7h0M664.5 252.0h0M410.7 229.2h0M508.3 181.7h0M341.6 315.9h0M493.1 188.7h0M549.3 191.5h0M499.4 215.6h0M448.9 217.1h0M493.0 182.3h0M434.8 228.3h0M379.5 285.8h0M478.4 189.6h0M652.7 253.8h0M613.3 216.0h0M652.6 235.0h0M576.9 185.2h0M492.1 175.8h0M575.1 196.3h0M503.6 194.2h0M523.9 199.2h0M437.6 203.2h0M437.3 230.7h0M499.8 184.7h0M525.1 167.7h0M573.0 176.6h0M688.9 283.6h0M634.0 224.0h0M462.5 202.5h0M435.8 241.1h0M573.6 183.0h0M553.9 192.2h0M420.1 237.1h0M686.1 252.2h0M534.6 192.2h0M677.1 255.3h0M616.6 182.7h0M560.6 187.2h0M465.6 210.8h0M462.5 214.3h0M655.9 254.0h0M531.8 180.7h0M472.8 189.8h0M565.4 193.1h0M583.5 204.5h0M458.9 229.4h0M592.2 190.7h0M499.5 173.8h0M691.0 247.4h0M565.7 184.4h0M549.6 197.4h0M497.1 179.2h0M476.4 191.0h0M526.8 192.2h0M670.0 225.7h0M575.5 205.9h0M344.8 263.1h0M649.7 224.5h0M471.9 210.1h0M610.6 220.2h0M443.0 190.5h0M692.3 243.2h0M545.8 188.2h0M393.4 241.7h0M408.2 243.2h0M349.3 256.8h0M591.2 195.1h0M567.2 184.7h0M636.8 217.5h0M654.8 234.2h0M653.3 229.2h0M514.9 180.0h0M462.8 217.0h0M505.3 189.6h0M513.6 176.9h0M379.1 270.8h0M477.5 210.0h0M441.8 220.9h0M355.3 260.0h0M363.1 279.4h0M428.5 231.2h0M602.9 202.3h0M514.8 186.4h0M673.1 241.7h0M623.6 217.7h0M369.0 260.9h0M592.6 213.2h0M518.5 178.6h0M516.8 184.1h0M492.7 201.3h0M423.3 254.1h0M428.5 222.7h0M522.6 192.0h0M601.9 195.6h0M485.9 201.3h0M339.6 272.0h0M609.5 204.3h0M608.4 216.8h0M647.9 218.8h0M438.1 219.2h0M692.7 248.1h0M675.2 234.9h0M424.6 242.6h0M555.5 180.5h0M362.8 258.6h0M656.4 251.5h0M592.5 199.8h0M424.6 226.3h0M479.8 217.9h0M377.3 247.7h0M431.5 224.4h0M647.9 242.0h0M432.0 250.0h0M675.3 245.3h0M652.1 231.2h0M420.7 242.3h0M672.7 271.7h0M353.5 280.4h0M523.8 175.8h0M340.6 266.7h0M619.1 212.7h0M483.4 197.3h0M635.9 253.1h0M616.1 221.8h0M386.9 273.5h0M531.2 190.1h0M639.4 221.2h0M453.5 198.7h0M562.9 183.4h0M576.6 185.9h0M607.2 218.2h0M431.2 222.0h0M658.3 257.7h0M404.4 243.9h0M342.0 250.8h0M367.1 295.9h0M680.5 285.5h0M397.4 227.4h0M620.3 223.1h0M656.8 247.5h0M556.7 188.5h0M481.1 195.9h0M463.4 218.4h0M661.7 239.7h0M530.2 172.3h0M464.4 189.9h0M470.5 186.0h0M447.6 213.6h0M451.1 210.2h0M414.8 226.4h0M416.8 240.2h0M407.7 236.4h0M362.5 246.6h0M660.7 251.2h0M404.1 253.5h0M541.2 182.7h0M355.2 268.1h0M522.2 192.7h0M557.0 187.2h0M571.1 182.7h0M682.3 250.5h0M527.8 194.1h0M357.6 267.4h0M455.7 187.1h0M553.9 186.3h0M619.5 210.6h0M470.8 226.4h0M628.0 221.1h0M371.2 277.6h0M631.0 217.1h0M466.5 187.9h0M505.5 186.6h0M356.4 241.4h0M449.5 227.4h0M684.6 237.8h0M471.9 213.5h0M492.2 199.9h0M520.5 195.9h0M458.5 199.2h0M558.0 179.8h0M523.4 173.7h0M614.1 216.9h0M467.6 213.7h0M566.8 185.0h0M429.0 230.3h0M683.9 242.9h0M387.2 249.0h0M356.7 287.3h0M506.2 186.9h0M546.6 172.1h0M586.6 211.9h0M382.2 264.1h0M630.8 234.0h0M396.9 261.8h0M488.2 198.2h0M635.5 227.7h0M485.8 211.7h0M561.5 178.3h0M483.7 196.9h0M436.7 217.7h0M546.2 182.0h0M572.0 191.0h0M518.4 181.5h0M542.0 180.0h0M346.4 259.3h0"/></g>
 <path d="M337.3 258.6C338.8 259.0 343.0 260.1 346.3 260.8C349.6 261.5 353.5 262.4 357.1 262.7C360.7 263.0 364.3 263.2 367.9 262.7C371.5 262.1 374.7 260.8 378.8 259.4C382.9 257.9 387.8 255.9 392.3 254.0C396.8 252.1 401.4 250.5 405.9 247.8C410.4 245.1 414.9 241.4 419.4 237.8C423.9 234.2 428.5 230.0 433.0 226.4C437.5 222.8 442.0 219.2 446.5 216.1C451.0 213.0 455.6 210.4 460.1 207.9C464.6 205.4 469.1 203.5 473.6 201.2C478.1 198.8 482.7 196.2 487.2 193.8C491.7 191.4 496.2 188.7 500.7 186.8C505.2 184.9 510.2 183.4 514.3 182.4C518.3 181.4 521.2 181.1 525.0 180.7C528.8 180.3 532.8 179.7 537.1 179.8C541.4 179.9 546.2 180.2 550.7 181.1C555.2 181.9 559.7 183.4 564.2 184.9C568.7 186.4 573.3 187.8 577.8 189.8C582.3 191.8 586.8 194.4 591.3 197.1C595.8 199.8 600.4 203.1 604.9 206.1C609.4 209.1 613.9 212.0 618.4 215.0C622.9 218.0 627.5 221.2 632.0 224.2C636.5 227.2 641.0 230.4 645.5 233.2C650.0 236.0 654.6 238.1 659.1 240.8C663.6 243.5 669.5 247.5 672.6 249.4C675.8 251.3 674.6 251.0 678.0 252.1C681.4 253.2 690.4 255.2 692.9 255.8" fill="none" stroke="#4464e2" stroke-width="1.45"/>
 <g stroke="#4a4a4a" stroke-width="1.4" fill="none"><path d="M299.1 133.5V347.2"/><path d="M295.5 346.5H723"/><path d="M328.2 346.5V351.5"/><path d="M358.4 346.5V351.5"/><path d="M388.6 346.5V351.5"/><path d="M416.2 346.5V351.5"/><path d="M446.1 346.5V351.5"/><path d="M475.5 346.5V351.5"/><path d="M505.7 346.5V351.5"/><path d="M535.0 346.5V351.5"/><path d="M565.2 346.5V351.5"/><path d="M595.4 346.5V351.5"/><path d="M624.7 346.5V351.5"/><path d="M655.0 346.5V351.5"/><path d="M684.4 346.5V351.5"/><path d="M714.7 346.5V351.5"/><path d="M293.3 134.2H299"/><path d="M293.3 219.1H299"/><path d="M293.3 304H299"/><path d="M295.5 176.6H299"/><path d="M295.5 261.5H299"/></g>
 <g font-size="12" fill="#1c1c1c"><text transform="translate(331.7 364) rotate(-90)" text-anchor="middle">Dec</text><text transform="translate(361.9 364) rotate(-90)" text-anchor="middle">Jan</text><text transform="translate(392.1 364) rotate(-90)" text-anchor="middle">Feb</text><text transform="translate(419.7 364) rotate(-90)" text-anchor="middle">Mar</text><text transform="translate(449.6 364) rotate(-90)" text-anchor="middle">Apr</text><text transform="translate(479.0 364) rotate(-90)" text-anchor="middle">May</text><text transform="translate(509.2 364) rotate(-90)" text-anchor="middle">Jun</text><text transform="translate(538.5 364) rotate(-90)" text-anchor="middle">Jul</text><text transform="translate(568.7 364) rotate(-90)" text-anchor="middle">Aug</text><text transform="translate(598.9 364) rotate(-90)" text-anchor="middle">Sep</text><text transform="translate(628.2 364) rotate(-90)" text-anchor="middle">Oct</text><text transform="translate(658.5 364) rotate(-90)" text-anchor="middle">Nov</text><text transform="translate(687.9 364) rotate(-90)" text-anchor="middle">Dec</text><text transform="translate(718.2 364) rotate(-90)" text-anchor="middle">Jan</text><text x="289.8" y="136.5" text-anchor="end">100</text><text x="289.8" y="222.5" text-anchor="end">50</text><text x="289.8" y="307.6" text-anchor="end">0</text></g>
 <text transform="translate(268.2 238) rotate(-90)" text-anchor="middle" font-size="14.7" fill="#1c1c1c">Temperature (°F)</text>
 <text x="511.8" y="390.6" text-anchor="middle" font-size="14.3" fill="#1c1c1c">Month</text>
</svg>
</body></html>
